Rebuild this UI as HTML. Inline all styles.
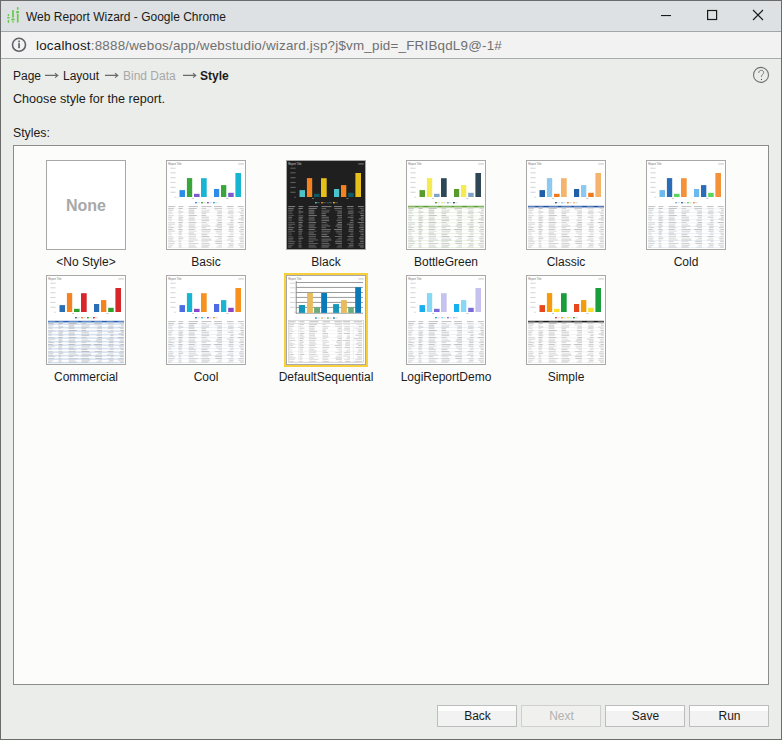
<!DOCTYPE html>
<html><head><meta charset="utf-8"><style>
*{margin:0;padding:0;box-sizing:border-box}
html,body{width:782px;height:740px;overflow:hidden;background:#ebedea;font-family:"Liberation Sans",sans-serif}
.abs{position:absolute}
#win{position:absolute;left:0;top:0;width:782px;height:740px;border:1px solid #6b6b6b;background:#ebedea}
#title{position:absolute;left:1px;top:1px;width:780px;height:30px;background:#dde1e3}
#titleline{position:absolute;left:1px;top:31px;width:780px;height:1px;background:#a3a5a8}
#addr{position:absolute;left:1px;top:32px;width:780px;height:26px;background:#f2f2f2}
#addrline{position:absolute;left:1px;top:58px;width:780px;height:1px;background:#a9aaab}
.ttext{position:absolute;left:26px;top:9.5px;font-size:12px;color:#1a1a1a;white-space:nowrap}
.url{position:absolute;left:36px;top:38px;font-size:13.4px;letter-spacing:0.21px;color:#1a1a1a;white-space:nowrap}
.url span{color:#707070}
.crumb{position:absolute;top:69px;font-size:12px;color:#1b1b1b;white-space:nowrap}
.crumb.dis{color:#a8a8a8}
.txt{position:absolute;font-size:12px;color:#1b1b1b;white-space:nowrap}
#panel{position:absolute;left:13px;top:145px;width:756px;height:540px;background:#fcfdfb;border:1px solid #8c8c8c}
.th{position:absolute;width:80px;height:90px;border:1px solid #a8a8a8;background:#fff}
.th svg{position:absolute;left:-1px;top:-1px}
.th.sel{outline:2px solid #f8cf3c;}
.none{position:absolute;left:0;top:36px;width:78px;text-align:center;font-size:16px;font-weight:bold;color:#a8a8a8}
.lbl{position:absolute;width:140px;text-align:center;font-size:12px;color:#1b1b1b;white-space:nowrap}
.btn{position:absolute;top:705px;width:80px;height:22px;border:1px solid #bdbdbd;background:linear-gradient(#fdfdfd 0,#fdfdfd 5px,#f2f2f2 5px);font-size:12px;color:#1b1b1b;text-align:center;line-height:21px;padding-left:1px}
.btn.dis{color:#b0b0b0;background:#f0f0ef;border-color:#cfcfcf}
</style></head><body>
<div id="win"></div>
<div id="title"></div>
<div id="titleline"></div>
<div id="addr"></div>
<div id="addrline"></div>
<svg class="abs" style="left:0;top:0" width="30" height="30" viewBox="0 0 30 30">
<g fill="#6cc94e">
<rect x="7.7" y="14" width="1.5" height="2.3" rx="0.7"/><rect x="6.9" y="16.9" width="3" height="1.7" rx="0.8"/><rect x="7.7" y="19.8" width="1.5" height="3.1" rx="0.7"/>
<rect x="12.1" y="10" width="1.8" height="7.8" rx="0.8"/><rect x="11.1" y="18.4" width="3.7" height="2.2" rx="1"/><rect x="12.1" y="21.3" width="1.8" height="1.5" rx="0.7"/>
<rect x="16.9" y="6.9" width="1.7" height="3" rx="0.8"/><rect x="16" y="11" width="3.1" height="2.2" rx="1"/><rect x="16.9" y="13.8" width="1.7" height="9" rx="0.8"/>
</g></svg>
<div class="ttext">Web Report Wizard - Google Chrome</div>
<svg class="abs" style="left:640px;top:0" width="142" height="31" viewBox="0 0 142 31">
<rect x="21" y="15" width="10" height="1.1" fill="#1a1a1a"/>
<rect x="67.6" y="10.5" width="9" height="9" fill="none" stroke="#1a1a1a" stroke-width="1.2"/>
<path d="M113 10 L123 20 M123 10 L113 20" stroke="#1a1a1a" stroke-width="1.1"/>
</svg>
<svg class="abs" style="left:10px;top:36px" width="20" height="20" viewBox="0 0 20 20">
<circle cx="9" cy="8.8" r="6.5" fill="none" stroke="#5f6368" stroke-width="1.6"/>
<rect x="8.2" y="7.2" width="1.7" height="5" fill="#5f6368"/><rect x="8.2" y="4.6" width="1.7" height="1.7" fill="#5f6368"/>
</svg>
<div class="url">localhost<span>:8888/webos/app/webstudio/wizard.jsp?j$vm_pid=_FRIBqdL9@-1#</span></div>
<div class="crumb" style="left:13px">Page</div>
<svg class="abs" style="left:0;top:60px" width="240" height="30" viewBox="0 0 240 30"><g fill="none" stroke="#6a6a6a" stroke-width="1.1">
<path d="M45 15.4 H57.5 M55 13.2 L57.8 15.4 L55 17.6"/>
<path d="M105 15.4 H117.5 M115 13.2 L117.8 15.4 L115 17.6"/>
<path d="M183 15.4 H195.5 M193 13.2 L195.8 15.4 L193 17.6"/>
</g></svg>
<div class="crumb" style="left:63px">Layout</div>
<div class="crumb dis" style="left:123px">Bind Data</div>
<div class="crumb" style="left:200px;font-weight:bold">Style</div>
<svg class="abs" style="left:751px;top:65px" width="20" height="20" viewBox="0 0 20 20">
<circle cx="10" cy="9.9" r="7.5" fill="none" stroke="#727272" stroke-width="1.1"/>
<path d="M7.7 8 C7.7 6.2 8.9 5.3 10.3 5.3 C11.8 5.3 12.7 6.3 12.7 7.5 C12.7 9.1 10.7 9.5 10.5 11.3 L10.5 12.0" fill="none" stroke="#6a6a6a" stroke-width="0.9"/>
<circle cx="10.5" cy="14.4" r="0.6" fill="#555"/>
</svg>
<div class="txt" style="left:13px;top:92px;font-size:12.6px">Choose style for the report.</div>
<div class="txt" style="left:13px;top:126px;font-size:12.3px">Styles:</div>
<div id="panel"></div>
<div class="th" style="left:46px;top:160px"><div class="none">None</div></div><div class="lbl" style="left:16px;top:255px">&lt;No Style&gt;</div><div class="th" style="left:166px;top:160px"><svg width="80" height="90" viewBox="0 0 80 90" shape-rendering="auto"><rect x="1" y="1" width="78" height="88" fill="#ffffff"/><text x="2.2" y="4.5" font-size="2.6" font-family="Liberation Sans" fill="#5a5a5a" opacity="0.85">Report Title</text><rect x="72.3" y="3.3" width="5.5" height="1.2" fill="#8c8c8c" opacity="0.45"/><rect x="4.4" y="7.6499999999999995" width="5.2" height="1.1" fill="#8c8c8c" opacity="0.35"/><rect x="4.4" y="12.25" width="5.2" height="1.1" fill="#8c8c8c" opacity="0.35"/><rect x="4.4" y="17.15" width="5.2" height="1.1" fill="#8c8c8c" opacity="0.35"/><rect x="4.4" y="21.95" width="5.2" height="1.1" fill="#8c8c8c" opacity="0.35"/><rect x="4.4" y="26.849999999999998" width="5.2" height="1.1" fill="#8c8c8c" opacity="0.35"/><rect x="4.4" y="31.749999999999996" width="5.2" height="1.1" fill="#8c8c8c" opacity="0.35"/><rect x="8.4" y="36.650000000000006" width="1.2" height="1.1" fill="#8c8c8c" opacity="0.45"/><rect x="13.5" y="30.1" width="5.5" height="6.9" fill="#2b8de8"/><rect x="20.9" y="18.1" width="5.3" height="18.9" fill="#3aa53a"/><rect x="28" y="33.8" width="5.6" height="3.2" fill="#7c5bd0"/><rect x="35" y="18.2" width="5.7" height="18.8" fill="#17b5d2"/><rect x="48" y="29" width="5.2" height="8" fill="#2b8de8"/><rect x="55" y="25.1" width="5.3" height="11.9" fill="#3aa53a"/><rect x="62.2" y="32.8" width="5.5" height="4.2" fill="#7c5bd0"/><rect x="69.4" y="13" width="5.6" height="24" fill="#17b5d2"/><rect x="26" y="38.1" width="2" height="0.9" fill="#8c8c8c" opacity="0.5"/><rect x="60.3" y="38.1" width="2.2" height="0.9" fill="#8c8c8c" opacity="0.5"/><rect x="29" y="42.0" width="1.8" height="1.4" fill="#2b8de8"/><rect x="31.2" y="42.3" width="2.4" height="0.9" fill="#8c8c8c" opacity="0.4"/><rect x="35.1" y="42.0" width="1.8" height="1.4" fill="#3aa53a"/><rect x="37.300000000000004" y="42.3" width="2.4" height="0.9" fill="#8c8c8c" opacity="0.4"/><rect x="41" y="42.0" width="1.8" height="1.4" fill="#7c5bd0"/><rect x="43.2" y="42.3" width="2.4" height="0.9" fill="#8c8c8c" opacity="0.4"/><rect x="47" y="42.0" width="1.8" height="1.4" fill="#17b5d2"/><rect x="49.2" y="42.3" width="2.4" height="0.9" fill="#8c8c8c" opacity="0.4"/><rect x="2.2" y="46.1" width="7" height="1" fill="#8c8c8c" opacity="0.55"/><rect x="12.5" y="46.1" width="4.8" height="1" fill="#8c8c8c" opacity="0.55"/><rect x="22.6" y="46.1" width="9.5" height="1" fill="#8c8c8c" opacity="0.55"/><rect x="35.5" y="46.1" width="10" height="1" fill="#8c8c8c" opacity="0.55"/><rect x="48" y="46.1" width="8" height="1" fill="#8c8c8c" opacity="0.55"/><rect x="61" y="46.1" width="6.5" height="1" fill="#8c8c8c" opacity="0.55"/><rect x="71.8" y="46.1" width="6" height="1" fill="#8c8c8c" opacity="0.55"/><rect x="2" y="48.6" width="76" height="0.6" fill="#f0f0f0"/><rect x="2" y="52.1" width="76" height="0.6" fill="#f0f0f0"/><rect x="2" y="55.6" width="76" height="0.6" fill="#f0f0f0"/><rect x="2" y="59.1" width="76" height="0.6" fill="#f0f0f0"/><rect x="2" y="62.6" width="76" height="0.6" fill="#f0f0f0"/><rect x="2" y="66.1" width="76" height="0.6" fill="#f0f0f0"/><rect x="2" y="69.6" width="76" height="0.6" fill="#f0f0f0"/><rect x="2" y="73.1" width="76" height="0.6" fill="#f0f0f0"/><rect x="2" y="76.6" width="76" height="0.6" fill="#f0f0f0"/><rect x="2" y="80.1" width="76" height="0.6" fill="#f0f0f0"/><rect x="2" y="83.6" width="76" height="0.6" fill="#f0f0f0"/><rect x="2" y="87.1" width="76" height="0.6" fill="#f0f0f0"/><rect x="2.2" y="48" width="5.55" height="0.9" fill="#8c8c8c" opacity="0.47"/><rect x="12.5" y="48" width="4.26" height="0.9" fill="#8c8c8c" opacity="0.53"/><rect x="22.6" y="48" width="8.14" height="0.9" fill="#8c8c8c" opacity="0.53"/><rect x="35.5" y="48" width="4.66" height="0.9" fill="#8c8c8c" opacity="0.39"/><rect x="48.25" y="48" width="7.75" height="0.9" fill="#8c8c8c" opacity="0.44"/><rect x="61.35" y="48" width="6.15" height="0.9" fill="#8c8c8c" opacity="0.28"/><rect x="73.55" y="48" width="4.25" height="0.9" fill="#8c8c8c" opacity="0.32"/><rect x="2.2" y="49.75" width="5.24" height="0.9" fill="#8c8c8c" opacity="0.42"/><rect x="12.5" y="49.75" width="2.19" height="0.9" fill="#8c8c8c" opacity="0.32"/><rect x="22.6" y="49.75" width="5.74" height="0.9" fill="#8c8c8c" opacity="0.52"/><rect x="35.5" y="49.75" width="8.71" height="0.9" fill="#8c8c8c" opacity="0.3"/><rect x="48.89" y="49.75" width="7.11" height="0.9" fill="#8c8c8c" opacity="0.29"/><rect x="62.37" y="49.75" width="5.13" height="0.9" fill="#8c8c8c" opacity="0.29"/><rect x="75.09" y="49.75" width="2.71" height="0.9" fill="#8c8c8c" opacity="0.51"/><rect x="2.2" y="51.5" width="3.96" height="0.9" fill="#8c8c8c" opacity="0.31"/><rect x="12.5" y="51.5" width="4.75" height="0.9" fill="#8c8c8c" opacity="0.51"/><rect x="22.6" y="51.5" width="5.79" height="0.9" fill="#8c8c8c" opacity="0.54"/><rect x="35.5" y="51.5" width="7.47" height="0.9" fill="#8c8c8c" opacity="0.45"/><rect x="51.5" y="51.5" width="4.5" height="0.9" fill="#8c8c8c" opacity="0.53"/><rect x="62.11" y="51.5" width="5.39" height="0.9" fill="#8c8c8c" opacity="0.54"/><rect x="72.15" y="51.5" width="5.65" height="0.9" fill="#8c8c8c" opacity="0.34"/><rect x="2.2" y="53.25" width="4.54" height="0.9" fill="#8c8c8c" opacity="0.3"/><rect x="12.5" y="53.25" width="2.54" height="0.9" fill="#8c8c8c" opacity="0.27"/><rect x="22.6" y="53.25" width="5.85" height="0.9" fill="#8c8c8c" opacity="0.43"/><rect x="35.5" y="53.25" width="4.52" height="0.9" fill="#8c8c8c" opacity="0.45"/><rect x="50.91" y="53.25" width="5.09" height="0.9" fill="#8c8c8c" opacity="0.34"/><rect x="61.65" y="53.25" width="5.85" height="0.9" fill="#8c8c8c" opacity="0.39"/><rect x="74.06" y="53.25" width="3.74" height="0.9" fill="#8c8c8c" opacity="0.39"/><rect x="2.2" y="55" width="5.86" height="0.9" fill="#8c8c8c" opacity="0.27"/><rect x="12.5" y="55" width="4.73" height="0.9" fill="#8c8c8c" opacity="0.26"/><rect x="22.6" y="55" width="8.19" height="0.9" fill="#8c8c8c" opacity="0.5"/><rect x="35.5" y="55" width="4.6" height="0.9" fill="#8c8c8c" opacity="0.49"/><rect x="50.79" y="55" width="5.21" height="0.9" fill="#8c8c8c" opacity="0.42"/><rect x="64.54" y="55" width="2.96" height="0.9" fill="#8c8c8c" opacity="0.26"/><rect x="74.5" y="55" width="3.3" height="0.9" fill="#8c8c8c" opacity="0.54"/><rect x="2.2" y="56.75" width="3.91" height="0.9" fill="#8c8c8c" opacity="0.48"/><rect x="12.5" y="56.75" width="4.61" height="0.9" fill="#8c8c8c" opacity="0.53"/><rect x="22.6" y="56.75" width="6.07" height="0.9" fill="#8c8c8c" opacity="0.36"/><rect x="35.5" y="56.75" width="7.39" height="0.9" fill="#8c8c8c" opacity="0.48"/><rect x="51.92" y="56.75" width="4.08" height="0.9" fill="#8c8c8c" opacity="0.47"/><rect x="61.72" y="56.75" width="5.78" height="0.9" fill="#8c8c8c" opacity="0.51"/><rect x="74.98" y="56.75" width="2.82" height="0.9" fill="#8c8c8c" opacity="0.53"/><rect x="2.2" y="58.5" width="3.5" height="0.9" fill="#8c8c8c" opacity="0.35"/><rect x="12.5" y="58.5" width="3.77" height="0.9" fill="#8c8c8c" opacity="0.53"/><rect x="22.6" y="58.5" width="6.05" height="0.9" fill="#8c8c8c" opacity="0.53"/><rect x="35.5" y="58.5" width="7.5" height="0.9" fill="#8c8c8c" opacity="0.34"/><rect x="51.01" y="58.5" width="4.99" height="0.9" fill="#8c8c8c" opacity="0.3"/><rect x="64.3" y="58.5" width="3.2" height="0.9" fill="#8c8c8c" opacity="0.29"/><rect x="72.83" y="58.5" width="4.97" height="0.9" fill="#8c8c8c" opacity="0.55"/><rect x="2.2" y="60.25" width="3.77" height="0.9" fill="#8c8c8c" opacity="0.26"/><rect x="12.5" y="60.25" width="4.76" height="0.9" fill="#8c8c8c" opacity="0.41"/><rect x="22.6" y="60.25" width="6.4" height="0.9" fill="#8c8c8c" opacity="0.32"/><rect x="35.5" y="60.25" width="7.77" height="0.9" fill="#8c8c8c" opacity="0.5"/><rect x="50.4" y="60.25" width="5.6" height="0.9" fill="#8c8c8c" opacity="0.38"/><rect x="64.38" y="60.25" width="3.12" height="0.9" fill="#8c8c8c" opacity="0.52"/><rect x="74.99" y="60.25" width="2.81" height="0.9" fill="#8c8c8c" opacity="0.4"/><rect x="2.2" y="62" width="6.38" height="0.9" fill="#8c8c8c" opacity="0.29"/><rect x="12.5" y="62" width="4.09" height="0.9" fill="#8c8c8c" opacity="0.53"/><rect x="22.6" y="62" width="7.57" height="0.9" fill="#8c8c8c" opacity="0.49"/><rect x="35.5" y="62" width="5.09" height="0.9" fill="#8c8c8c" opacity="0.38"/><rect x="51.74" y="62" width="4.26" height="0.9" fill="#8c8c8c" opacity="0.5"/><rect x="63.52" y="62" width="3.98" height="0.9" fill="#8c8c8c" opacity="0.39"/><rect x="71.8" y="62" width="6" height="0.9" fill="#8c8c8c" opacity="0.51"/><rect x="2.2" y="63.75" width="6.91" height="0.9" fill="#8c8c8c" opacity="0.39"/><rect x="12.5" y="63.75" width="3.45" height="0.9" fill="#8c8c8c" opacity="0.47"/><rect x="22.6" y="63.75" width="6.78" height="0.9" fill="#8c8c8c" opacity="0.34"/><rect x="35.5" y="63.75" width="6.72" height="0.9" fill="#8c8c8c" opacity="0.29"/><rect x="50.74" y="63.75" width="5.26" height="0.9" fill="#8c8c8c" opacity="0.55"/><rect x="61.14" y="63.75" width="6.36" height="0.9" fill="#8c8c8c" opacity="0.44"/><rect x="73.45" y="63.75" width="4.35" height="0.9" fill="#8c8c8c" opacity="0.35"/><rect x="2.2" y="65.5" width="3.49" height="0.9" fill="#8c8c8c" opacity="0.33"/><rect x="12.5" y="65.5" width="4.22" height="0.9" fill="#8c8c8c" opacity="0.51"/><rect x="22.6" y="65.5" width="6.16" height="0.9" fill="#8c8c8c" opacity="0.49"/><rect x="35.5" y="65.5" width="8.76" height="0.9" fill="#8c8c8c" opacity="0.46"/><rect x="49.48" y="65.5" width="6.52" height="0.9" fill="#8c8c8c" opacity="0.48"/><rect x="63.28" y="65.5" width="4.22" height="0.9" fill="#8c8c8c" opacity="0.46"/><rect x="74.17" y="65.5" width="3.63" height="0.9" fill="#8c8c8c" opacity="0.4"/><rect x="2.2" y="67.25" width="6.11" height="0.9" fill="#8c8c8c" opacity="0.46"/><rect x="12.5" y="67.25" width="2.94" height="0.9" fill="#8c8c8c" opacity="0.53"/><rect x="22.6" y="67.25" width="7.67" height="0.9" fill="#8c8c8c" opacity="0.42"/><rect x="35.5" y="67.25" width="4.56" height="0.9" fill="#8c8c8c" opacity="0.41"/><rect x="51.3" y="67.25" width="4.7" height="0.9" fill="#8c8c8c" opacity="0.45"/><rect x="62.92" y="67.25" width="4.58" height="0.9" fill="#8c8c8c" opacity="0.5"/><rect x="72.96" y="67.25" width="4.84" height="0.9" fill="#8c8c8c" opacity="0.49"/><rect x="2.2" y="69" width="4.49" height="0.9" fill="#8c8c8c" opacity="0.44"/><rect x="12.5" y="69" width="4.11" height="0.9" fill="#8c8c8c" opacity="0.5"/><rect x="22.6" y="69" width="6.1" height="0.9" fill="#8c8c8c" opacity="0.5"/><rect x="35.5" y="69" width="9.28" height="0.9" fill="#8c8c8c" opacity="0.46"/><rect x="48.11" y="69" width="7.89" height="0.9" fill="#8c8c8c" opacity="0.54"/><rect x="62.72" y="69" width="4.78" height="0.9" fill="#8c8c8c" opacity="0.41"/><rect x="74.55" y="69" width="3.25" height="0.9" fill="#8c8c8c" opacity="0.5"/><rect x="2.2" y="70.75" width="6.76" height="0.9" fill="#8c8c8c" opacity="0.39"/><rect x="12.5" y="70.75" width="3.99" height="0.9" fill="#8c8c8c" opacity="0.47"/><rect x="22.6" y="70.75" width="8.09" height="0.9" fill="#8c8c8c" opacity="0.3"/><rect x="35.5" y="70.75" width="8.79" height="0.9" fill="#8c8c8c" opacity="0.42"/><rect x="49.47" y="70.75" width="6.53" height="0.9" fill="#8c8c8c" opacity="0.38"/><rect x="62.35" y="70.75" width="5.15" height="0.9" fill="#8c8c8c" opacity="0.48"/><rect x="73" y="70.75" width="4.8" height="0.9" fill="#8c8c8c" opacity="0.47"/><rect x="2.2" y="72.5" width="3.26" height="0.9" fill="#8c8c8c" opacity="0.3"/><rect x="12.5" y="72.5" width="3.32" height="0.9" fill="#8c8c8c" opacity="0.45"/><rect x="22.6" y="72.5" width="5.42" height="0.9" fill="#8c8c8c" opacity="0.46"/><rect x="35.5" y="72.5" width="7.97" height="0.9" fill="#8c8c8c" opacity="0.26"/><rect x="50.33" y="72.5" width="5.67" height="0.9" fill="#8c8c8c" opacity="0.32"/><rect x="64.38" y="72.5" width="3.12" height="0.9" fill="#8c8c8c" opacity="0.29"/><rect x="74.05" y="72.5" width="3.75" height="0.9" fill="#8c8c8c" opacity="0.3"/><rect x="2.2" y="74.25" width="3.89" height="0.9" fill="#8c8c8c" opacity="0.26"/><rect x="12.5" y="74.25" width="3.39" height="0.9" fill="#8c8c8c" opacity="0.36"/><rect x="22.6" y="74.25" width="7.47" height="0.9" fill="#8c8c8c" opacity="0.43"/><rect x="35.5" y="74.25" width="5.81" height="0.9" fill="#8c8c8c" opacity="0.52"/><rect x="52.4" y="74.25" width="3.6" height="0.9" fill="#8c8c8c" opacity="0.37"/><rect x="63.58" y="74.25" width="3.92" height="0.9" fill="#8c8c8c" opacity="0.37"/><rect x="74.72" y="74.25" width="3.08" height="0.9" fill="#8c8c8c" opacity="0.5"/><rect x="2.2" y="76" width="4.59" height="0.9" fill="#8c8c8c" opacity="0.26"/><rect x="12.5" y="76" width="3.78" height="0.9" fill="#8c8c8c" opacity="0.28"/><rect x="22.6" y="76" width="7.12" height="0.9" fill="#8c8c8c" opacity="0.35"/><rect x="35.5" y="76" width="7.69" height="0.9" fill="#8c8c8c" opacity="0.54"/><rect x="48.8" y="76" width="7.2" height="0.9" fill="#8c8c8c" opacity="0.38"/><rect x="61.67" y="76" width="5.83" height="0.9" fill="#8c8c8c" opacity="0.44"/><rect x="73.88" y="76" width="3.92" height="0.9" fill="#8c8c8c" opacity="0.29"/><rect x="2.2" y="77.75" width="5.44" height="0.9" fill="#8c8c8c" opacity="0.42"/><rect x="12.5" y="77.75" width="4.69" height="0.9" fill="#8c8c8c" opacity="0.54"/><rect x="22.6" y="77.75" width="7.45" height="0.9" fill="#8c8c8c" opacity="0.36"/><rect x="35.5" y="77.75" width="9.41" height="0.9" fill="#8c8c8c" opacity="0.25"/><rect x="51.93" y="77.75" width="4.07" height="0.9" fill="#8c8c8c" opacity="0.42"/><rect x="62.38" y="77.75" width="5.12" height="0.9" fill="#8c8c8c" opacity="0.29"/><rect x="73.02" y="77.75" width="4.78" height="0.9" fill="#8c8c8c" opacity="0.52"/><rect x="2.2" y="79.5" width="4.6" height="0.9" fill="#8c8c8c" opacity="0.38"/><rect x="12.5" y="79.5" width="2.76" height="0.9" fill="#8c8c8c" opacity="0.34"/><rect x="22.6" y="79.5" width="9.36" height="0.9" fill="#8c8c8c" opacity="0.36"/><rect x="35.5" y="79.5" width="9.79" height="0.9" fill="#8c8c8c" opacity="0.52"/><rect x="49.78" y="79.5" width="6.22" height="0.9" fill="#8c8c8c" opacity="0.33"/><rect x="61.07" y="79.5" width="6.43" height="0.9" fill="#8c8c8c" opacity="0.4"/><rect x="73.73" y="79.5" width="4.07" height="0.9" fill="#8c8c8c" opacity="0.35"/><rect x="2.2" y="81.25" width="6.94" height="0.9" fill="#8c8c8c" opacity="0.4"/><rect x="12.5" y="81.25" width="2.92" height="0.9" fill="#8c8c8c" opacity="0.39"/><rect x="22.6" y="81.25" width="4.91" height="0.9" fill="#8c8c8c" opacity="0.44"/><rect x="35.5" y="81.25" width="6.94" height="0.9" fill="#8c8c8c" opacity="0.34"/><rect x="48.96" y="81.25" width="7.04" height="0.9" fill="#8c8c8c" opacity="0.5"/><rect x="64.53" y="81.25" width="2.97" height="0.9" fill="#8c8c8c" opacity="0.41"/><rect x="74.2" y="81.25" width="3.6" height="0.9" fill="#8c8c8c" opacity="0.53"/><rect x="2.2" y="83" width="6.16" height="0.9" fill="#8c8c8c" opacity="0.32"/><rect x="12.5" y="83" width="2.87" height="0.9" fill="#8c8c8c" opacity="0.3"/><rect x="22.6" y="83" width="9.44" height="0.9" fill="#8c8c8c" opacity="0.34"/><rect x="35.5" y="83" width="7.84" height="0.9" fill="#8c8c8c" opacity="0.39"/><rect x="49.56" y="83" width="6.44" height="0.9" fill="#8c8c8c" opacity="0.43"/><rect x="61.92" y="83" width="5.58" height="0.9" fill="#8c8c8c" opacity="0.29"/><rect x="72.59" y="83" width="5.21" height="0.9" fill="#8c8c8c" opacity="0.34"/><rect x="2.2" y="84.75" width="5.2" height="0.9" fill="#8c8c8c" opacity="0.35"/><rect x="12.5" y="84.75" width="2.94" height="0.9" fill="#8c8c8c" opacity="0.41"/><rect x="22.6" y="84.75" width="6.7" height="0.9" fill="#8c8c8c" opacity="0.36"/><rect x="35.5" y="84.75" width="8.6" height="0.9" fill="#8c8c8c" opacity="0.43"/><rect x="52.24" y="84.75" width="3.76" height="0.9" fill="#8c8c8c" opacity="0.33"/><rect x="62.95" y="84.75" width="4.55" height="0.9" fill="#8c8c8c" opacity="0.52"/><rect x="72.17" y="84.75" width="5.63" height="0.9" fill="#8c8c8c" opacity="0.41"/><rect x="2.2" y="86.5" width="3.21" height="0.9" fill="#8c8c8c" opacity="0.48"/><rect x="12.5" y="86.5" width="3.29" height="0.9" fill="#8c8c8c" opacity="0.42"/><rect x="22.6" y="86.5" width="7.98" height="0.9" fill="#8c8c8c" opacity="0.44"/><rect x="35.5" y="86.5" width="7.15" height="0.9" fill="#8c8c8c" opacity="0.52"/><rect x="50.7" y="86.5" width="5.3" height="0.9" fill="#8c8c8c" opacity="0.37"/><rect x="61.53" y="86.5" width="5.97" height="0.9" fill="#8c8c8c" opacity="0.31"/><rect x="74.12" y="86.5" width="3.68" height="0.9" fill="#8c8c8c" opacity="0.5"/></svg></div><div class="lbl" style="left:136px;top:255px">Basic</div><div class="th" style="left:286px;top:160px"><svg width="80" height="90" viewBox="0 0 80 90" shape-rendering="auto"><rect x="1" y="1" width="78" height="88" fill="#1f1f1f"/><text x="2.2" y="4.5" font-size="2.6" font-family="Liberation Sans" fill="#e0e0e0" opacity="0.85">Report Title</text><rect x="72.3" y="3.3" width="5.5" height="1.2" fill="#d8d8d8" opacity="0.45"/><rect x="4.4" y="7.6499999999999995" width="5.2" height="1.1" fill="#d8d8d8" opacity="0.35"/><rect x="4.4" y="12.25" width="5.2" height="1.1" fill="#d8d8d8" opacity="0.35"/><rect x="4.4" y="17.15" width="5.2" height="1.1" fill="#d8d8d8" opacity="0.35"/><rect x="4.4" y="21.95" width="5.2" height="1.1" fill="#d8d8d8" opacity="0.35"/><rect x="4.4" y="26.849999999999998" width="5.2" height="1.1" fill="#d8d8d8" opacity="0.35"/><rect x="4.4" y="31.749999999999996" width="5.2" height="1.1" fill="#d8d8d8" opacity="0.35"/><rect x="8.4" y="36.650000000000006" width="1.2" height="1.1" fill="#d8d8d8" opacity="0.45"/><rect x="13.5" y="30.1" width="5.5" height="6.9" fill="#4ac3ca"/><rect x="20.9" y="18.1" width="5.3" height="18.9" fill="#f58220"/><rect x="28" y="33.8" width="5.6" height="3.2" fill="#0b5b6a"/><rect x="35" y="18.2" width="5.7" height="18.8" fill="#e6c019"/><rect x="48" y="29" width="5.2" height="8" fill="#4ac3ca"/><rect x="55" y="25.1" width="5.3" height="11.9" fill="#f58220"/><rect x="62.2" y="32.8" width="5.5" height="4.2" fill="#0b5b6a"/><rect x="69.4" y="13" width="5.6" height="24" fill="#e6c019"/><rect x="26" y="38.1" width="2" height="0.9" fill="#d8d8d8" opacity="0.5"/><rect x="60.3" y="38.1" width="2.2" height="0.9" fill="#d8d8d8" opacity="0.5"/><rect x="29" y="42.0" width="1.8" height="1.4" fill="#4ac3ca"/><rect x="31.2" y="42.3" width="2.4" height="0.9" fill="#d8d8d8" opacity="0.4"/><rect x="35.1" y="42.0" width="1.8" height="1.4" fill="#f58220"/><rect x="37.300000000000004" y="42.3" width="2.4" height="0.9" fill="#d8d8d8" opacity="0.4"/><rect x="41" y="42.0" width="1.8" height="1.4" fill="#0b5b6a"/><rect x="43.2" y="42.3" width="2.4" height="0.9" fill="#d8d8d8" opacity="0.4"/><rect x="47" y="42.0" width="1.8" height="1.4" fill="#e6c019"/><rect x="49.2" y="42.3" width="2.4" height="0.9" fill="#d8d8d8" opacity="0.4"/><rect x="2.2" y="46.1" width="7" height="1" fill="#d8d8d8" opacity="0.55"/><rect x="12.5" y="46.1" width="4.8" height="1" fill="#d8d8d8" opacity="0.55"/><rect x="22.6" y="46.1" width="9.5" height="1" fill="#d8d8d8" opacity="0.55"/><rect x="35.5" y="46.1" width="10" height="1" fill="#d8d8d8" opacity="0.55"/><rect x="48" y="46.1" width="8" height="1" fill="#d8d8d8" opacity="0.55"/><rect x="61" y="46.1" width="6.5" height="1" fill="#d8d8d8" opacity="0.55"/><rect x="71.8" y="46.1" width="6" height="1" fill="#d8d8d8" opacity="0.55"/><rect x="2" y="48.6" width="76" height="0.6" fill="#262626"/><rect x="2" y="52.1" width="76" height="0.6" fill="#262626"/><rect x="2" y="55.6" width="76" height="0.6" fill="#262626"/><rect x="2" y="59.1" width="76" height="0.6" fill="#262626"/><rect x="2" y="62.6" width="76" height="0.6" fill="#262626"/><rect x="2" y="66.1" width="76" height="0.6" fill="#262626"/><rect x="2" y="69.6" width="76" height="0.6" fill="#262626"/><rect x="2" y="73.1" width="76" height="0.6" fill="#262626"/><rect x="2" y="76.6" width="76" height="0.6" fill="#262626"/><rect x="2" y="80.1" width="76" height="0.6" fill="#262626"/><rect x="2" y="83.6" width="76" height="0.6" fill="#262626"/><rect x="2" y="87.1" width="76" height="0.6" fill="#262626"/><rect x="2.2" y="48" width="5.55" height="0.9" fill="#d8d8d8" opacity="0.47"/><rect x="12.5" y="48" width="4.26" height="0.9" fill="#d8d8d8" opacity="0.53"/><rect x="22.6" y="48" width="8.14" height="0.9" fill="#d8d8d8" opacity="0.53"/><rect x="35.5" y="48" width="4.66" height="0.9" fill="#d8d8d8" opacity="0.39"/><rect x="48.25" y="48" width="7.75" height="0.9" fill="#d8d8d8" opacity="0.44"/><rect x="61.35" y="48" width="6.15" height="0.9" fill="#d8d8d8" opacity="0.28"/><rect x="73.55" y="48" width="4.25" height="0.9" fill="#d8d8d8" opacity="0.32"/><rect x="2.2" y="49.75" width="5.24" height="0.9" fill="#d8d8d8" opacity="0.42"/><rect x="12.5" y="49.75" width="2.19" height="0.9" fill="#d8d8d8" opacity="0.32"/><rect x="22.6" y="49.75" width="5.74" height="0.9" fill="#d8d8d8" opacity="0.52"/><rect x="35.5" y="49.75" width="8.71" height="0.9" fill="#d8d8d8" opacity="0.3"/><rect x="48.89" y="49.75" width="7.11" height="0.9" fill="#d8d8d8" opacity="0.29"/><rect x="62.37" y="49.75" width="5.13" height="0.9" fill="#d8d8d8" opacity="0.29"/><rect x="75.09" y="49.75" width="2.71" height="0.9" fill="#d8d8d8" opacity="0.51"/><rect x="2.2" y="51.5" width="3.96" height="0.9" fill="#d8d8d8" opacity="0.31"/><rect x="12.5" y="51.5" width="4.75" height="0.9" fill="#d8d8d8" opacity="0.51"/><rect x="22.6" y="51.5" width="5.79" height="0.9" fill="#d8d8d8" opacity="0.54"/><rect x="35.5" y="51.5" width="7.47" height="0.9" fill="#d8d8d8" opacity="0.45"/><rect x="51.5" y="51.5" width="4.5" height="0.9" fill="#d8d8d8" opacity="0.53"/><rect x="62.11" y="51.5" width="5.39" height="0.9" fill="#d8d8d8" opacity="0.54"/><rect x="72.15" y="51.5" width="5.65" height="0.9" fill="#d8d8d8" opacity="0.34"/><rect x="2.2" y="53.25" width="4.54" height="0.9" fill="#d8d8d8" opacity="0.3"/><rect x="12.5" y="53.25" width="2.54" height="0.9" fill="#d8d8d8" opacity="0.27"/><rect x="22.6" y="53.25" width="5.85" height="0.9" fill="#d8d8d8" opacity="0.43"/><rect x="35.5" y="53.25" width="4.52" height="0.9" fill="#d8d8d8" opacity="0.45"/><rect x="50.91" y="53.25" width="5.09" height="0.9" fill="#d8d8d8" opacity="0.34"/><rect x="61.65" y="53.25" width="5.85" height="0.9" fill="#d8d8d8" opacity="0.39"/><rect x="74.06" y="53.25" width="3.74" height="0.9" fill="#d8d8d8" opacity="0.39"/><rect x="2.2" y="55" width="5.86" height="0.9" fill="#d8d8d8" opacity="0.27"/><rect x="12.5" y="55" width="4.73" height="0.9" fill="#d8d8d8" opacity="0.26"/><rect x="22.6" y="55" width="8.19" height="0.9" fill="#d8d8d8" opacity="0.5"/><rect x="35.5" y="55" width="4.6" height="0.9" fill="#d8d8d8" opacity="0.49"/><rect x="50.79" y="55" width="5.21" height="0.9" fill="#d8d8d8" opacity="0.42"/><rect x="64.54" y="55" width="2.96" height="0.9" fill="#d8d8d8" opacity="0.26"/><rect x="74.5" y="55" width="3.3" height="0.9" fill="#d8d8d8" opacity="0.54"/><rect x="2.2" y="56.75" width="3.91" height="0.9" fill="#d8d8d8" opacity="0.48"/><rect x="12.5" y="56.75" width="4.61" height="0.9" fill="#d8d8d8" opacity="0.53"/><rect x="22.6" y="56.75" width="6.07" height="0.9" fill="#d8d8d8" opacity="0.36"/><rect x="35.5" y="56.75" width="7.39" height="0.9" fill="#d8d8d8" opacity="0.48"/><rect x="51.92" y="56.75" width="4.08" height="0.9" fill="#d8d8d8" opacity="0.47"/><rect x="61.72" y="56.75" width="5.78" height="0.9" fill="#d8d8d8" opacity="0.51"/><rect x="74.98" y="56.75" width="2.82" height="0.9" fill="#d8d8d8" opacity="0.53"/><rect x="2.2" y="58.5" width="3.5" height="0.9" fill="#d8d8d8" opacity="0.35"/><rect x="12.5" y="58.5" width="3.77" height="0.9" fill="#d8d8d8" opacity="0.53"/><rect x="22.6" y="58.5" width="6.05" height="0.9" fill="#d8d8d8" opacity="0.53"/><rect x="35.5" y="58.5" width="7.5" height="0.9" fill="#d8d8d8" opacity="0.34"/><rect x="51.01" y="58.5" width="4.99" height="0.9" fill="#d8d8d8" opacity="0.3"/><rect x="64.3" y="58.5" width="3.2" height="0.9" fill="#d8d8d8" opacity="0.29"/><rect x="72.83" y="58.5" width="4.97" height="0.9" fill="#d8d8d8" opacity="0.55"/><rect x="2.2" y="60.25" width="3.77" height="0.9" fill="#d8d8d8" opacity="0.26"/><rect x="12.5" y="60.25" width="4.76" height="0.9" fill="#d8d8d8" opacity="0.41"/><rect x="22.6" y="60.25" width="6.4" height="0.9" fill="#d8d8d8" opacity="0.32"/><rect x="35.5" y="60.25" width="7.77" height="0.9" fill="#d8d8d8" opacity="0.5"/><rect x="50.4" y="60.25" width="5.6" height="0.9" fill="#d8d8d8" opacity="0.38"/><rect x="64.38" y="60.25" width="3.12" height="0.9" fill="#d8d8d8" opacity="0.52"/><rect x="74.99" y="60.25" width="2.81" height="0.9" fill="#d8d8d8" opacity="0.4"/><rect x="2.2" y="62" width="6.38" height="0.9" fill="#d8d8d8" opacity="0.29"/><rect x="12.5" y="62" width="4.09" height="0.9" fill="#d8d8d8" opacity="0.53"/><rect x="22.6" y="62" width="7.57" height="0.9" fill="#d8d8d8" opacity="0.49"/><rect x="35.5" y="62" width="5.09" height="0.9" fill="#d8d8d8" opacity="0.38"/><rect x="51.74" y="62" width="4.26" height="0.9" fill="#d8d8d8" opacity="0.5"/><rect x="63.52" y="62" width="3.98" height="0.9" fill="#d8d8d8" opacity="0.39"/><rect x="71.8" y="62" width="6" height="0.9" fill="#d8d8d8" opacity="0.51"/><rect x="2.2" y="63.75" width="6.91" height="0.9" fill="#d8d8d8" opacity="0.39"/><rect x="12.5" y="63.75" width="3.45" height="0.9" fill="#d8d8d8" opacity="0.47"/><rect x="22.6" y="63.75" width="6.78" height="0.9" fill="#d8d8d8" opacity="0.34"/><rect x="35.5" y="63.75" width="6.72" height="0.9" fill="#d8d8d8" opacity="0.29"/><rect x="50.74" y="63.75" width="5.26" height="0.9" fill="#d8d8d8" opacity="0.55"/><rect x="61.14" y="63.75" width="6.36" height="0.9" fill="#d8d8d8" opacity="0.44"/><rect x="73.45" y="63.75" width="4.35" height="0.9" fill="#d8d8d8" opacity="0.35"/><rect x="2.2" y="65.5" width="3.49" height="0.9" fill="#d8d8d8" opacity="0.33"/><rect x="12.5" y="65.5" width="4.22" height="0.9" fill="#d8d8d8" opacity="0.51"/><rect x="22.6" y="65.5" width="6.16" height="0.9" fill="#d8d8d8" opacity="0.49"/><rect x="35.5" y="65.5" width="8.76" height="0.9" fill="#d8d8d8" opacity="0.46"/><rect x="49.48" y="65.5" width="6.52" height="0.9" fill="#d8d8d8" opacity="0.48"/><rect x="63.28" y="65.5" width="4.22" height="0.9" fill="#d8d8d8" opacity="0.46"/><rect x="74.17" y="65.5" width="3.63" height="0.9" fill="#d8d8d8" opacity="0.4"/><rect x="2.2" y="67.25" width="6.11" height="0.9" fill="#d8d8d8" opacity="0.46"/><rect x="12.5" y="67.25" width="2.94" height="0.9" fill="#d8d8d8" opacity="0.53"/><rect x="22.6" y="67.25" width="7.67" height="0.9" fill="#d8d8d8" opacity="0.42"/><rect x="35.5" y="67.25" width="4.56" height="0.9" fill="#d8d8d8" opacity="0.41"/><rect x="51.3" y="67.25" width="4.7" height="0.9" fill="#d8d8d8" opacity="0.45"/><rect x="62.92" y="67.25" width="4.58" height="0.9" fill="#d8d8d8" opacity="0.5"/><rect x="72.96" y="67.25" width="4.84" height="0.9" fill="#d8d8d8" opacity="0.49"/><rect x="2.2" y="69" width="4.49" height="0.9" fill="#d8d8d8" opacity="0.44"/><rect x="12.5" y="69" width="4.11" height="0.9" fill="#d8d8d8" opacity="0.5"/><rect x="22.6" y="69" width="6.1" height="0.9" fill="#d8d8d8" opacity="0.5"/><rect x="35.5" y="69" width="9.28" height="0.9" fill="#d8d8d8" opacity="0.46"/><rect x="48.11" y="69" width="7.89" height="0.9" fill="#d8d8d8" opacity="0.54"/><rect x="62.72" y="69" width="4.78" height="0.9" fill="#d8d8d8" opacity="0.41"/><rect x="74.55" y="69" width="3.25" height="0.9" fill="#d8d8d8" opacity="0.5"/><rect x="2.2" y="70.75" width="6.76" height="0.9" fill="#d8d8d8" opacity="0.39"/><rect x="12.5" y="70.75" width="3.99" height="0.9" fill="#d8d8d8" opacity="0.47"/><rect x="22.6" y="70.75" width="8.09" height="0.9" fill="#d8d8d8" opacity="0.3"/><rect x="35.5" y="70.75" width="8.79" height="0.9" fill="#d8d8d8" opacity="0.42"/><rect x="49.47" y="70.75" width="6.53" height="0.9" fill="#d8d8d8" opacity="0.38"/><rect x="62.35" y="70.75" width="5.15" height="0.9" fill="#d8d8d8" opacity="0.48"/><rect x="73" y="70.75" width="4.8" height="0.9" fill="#d8d8d8" opacity="0.47"/><rect x="2.2" y="72.5" width="3.26" height="0.9" fill="#d8d8d8" opacity="0.3"/><rect x="12.5" y="72.5" width="3.32" height="0.9" fill="#d8d8d8" opacity="0.45"/><rect x="22.6" y="72.5" width="5.42" height="0.9" fill="#d8d8d8" opacity="0.46"/><rect x="35.5" y="72.5" width="7.97" height="0.9" fill="#d8d8d8" opacity="0.26"/><rect x="50.33" y="72.5" width="5.67" height="0.9" fill="#d8d8d8" opacity="0.32"/><rect x="64.38" y="72.5" width="3.12" height="0.9" fill="#d8d8d8" opacity="0.29"/><rect x="74.05" y="72.5" width="3.75" height="0.9" fill="#d8d8d8" opacity="0.3"/><rect x="2.2" y="74.25" width="3.89" height="0.9" fill="#d8d8d8" opacity="0.26"/><rect x="12.5" y="74.25" width="3.39" height="0.9" fill="#d8d8d8" opacity="0.36"/><rect x="22.6" y="74.25" width="7.47" height="0.9" fill="#d8d8d8" opacity="0.43"/><rect x="35.5" y="74.25" width="5.81" height="0.9" fill="#d8d8d8" opacity="0.52"/><rect x="52.4" y="74.25" width="3.6" height="0.9" fill="#d8d8d8" opacity="0.37"/><rect x="63.58" y="74.25" width="3.92" height="0.9" fill="#d8d8d8" opacity="0.37"/><rect x="74.72" y="74.25" width="3.08" height="0.9" fill="#d8d8d8" opacity="0.5"/><rect x="2.2" y="76" width="4.59" height="0.9" fill="#d8d8d8" opacity="0.26"/><rect x="12.5" y="76" width="3.78" height="0.9" fill="#d8d8d8" opacity="0.28"/><rect x="22.6" y="76" width="7.12" height="0.9" fill="#d8d8d8" opacity="0.35"/><rect x="35.5" y="76" width="7.69" height="0.9" fill="#d8d8d8" opacity="0.54"/><rect x="48.8" y="76" width="7.2" height="0.9" fill="#d8d8d8" opacity="0.38"/><rect x="61.67" y="76" width="5.83" height="0.9" fill="#d8d8d8" opacity="0.44"/><rect x="73.88" y="76" width="3.92" height="0.9" fill="#d8d8d8" opacity="0.29"/><rect x="2.2" y="77.75" width="5.44" height="0.9" fill="#d8d8d8" opacity="0.42"/><rect x="12.5" y="77.75" width="4.69" height="0.9" fill="#d8d8d8" opacity="0.54"/><rect x="22.6" y="77.75" width="7.45" height="0.9" fill="#d8d8d8" opacity="0.36"/><rect x="35.5" y="77.75" width="9.41" height="0.9" fill="#d8d8d8" opacity="0.25"/><rect x="51.93" y="77.75" width="4.07" height="0.9" fill="#d8d8d8" opacity="0.42"/><rect x="62.38" y="77.75" width="5.12" height="0.9" fill="#d8d8d8" opacity="0.29"/><rect x="73.02" y="77.75" width="4.78" height="0.9" fill="#d8d8d8" opacity="0.52"/><rect x="2.2" y="79.5" width="4.6" height="0.9" fill="#d8d8d8" opacity="0.38"/><rect x="12.5" y="79.5" width="2.76" height="0.9" fill="#d8d8d8" opacity="0.34"/><rect x="22.6" y="79.5" width="9.36" height="0.9" fill="#d8d8d8" opacity="0.36"/><rect x="35.5" y="79.5" width="9.79" height="0.9" fill="#d8d8d8" opacity="0.52"/><rect x="49.78" y="79.5" width="6.22" height="0.9" fill="#d8d8d8" opacity="0.33"/><rect x="61.07" y="79.5" width="6.43" height="0.9" fill="#d8d8d8" opacity="0.4"/><rect x="73.73" y="79.5" width="4.07" height="0.9" fill="#d8d8d8" opacity="0.35"/><rect x="2.2" y="81.25" width="6.94" height="0.9" fill="#d8d8d8" opacity="0.4"/><rect x="12.5" y="81.25" width="2.92" height="0.9" fill="#d8d8d8" opacity="0.39"/><rect x="22.6" y="81.25" width="4.91" height="0.9" fill="#d8d8d8" opacity="0.44"/><rect x="35.5" y="81.25" width="6.94" height="0.9" fill="#d8d8d8" opacity="0.34"/><rect x="48.96" y="81.25" width="7.04" height="0.9" fill="#d8d8d8" opacity="0.5"/><rect x="64.53" y="81.25" width="2.97" height="0.9" fill="#d8d8d8" opacity="0.41"/><rect x="74.2" y="81.25" width="3.6" height="0.9" fill="#d8d8d8" opacity="0.53"/><rect x="2.2" y="83" width="6.16" height="0.9" fill="#d8d8d8" opacity="0.32"/><rect x="12.5" y="83" width="2.87" height="0.9" fill="#d8d8d8" opacity="0.3"/><rect x="22.6" y="83" width="9.44" height="0.9" fill="#d8d8d8" opacity="0.34"/><rect x="35.5" y="83" width="7.84" height="0.9" fill="#d8d8d8" opacity="0.39"/><rect x="49.56" y="83" width="6.44" height="0.9" fill="#d8d8d8" opacity="0.43"/><rect x="61.92" y="83" width="5.58" height="0.9" fill="#d8d8d8" opacity="0.29"/><rect x="72.59" y="83" width="5.21" height="0.9" fill="#d8d8d8" opacity="0.34"/><rect x="2.2" y="84.75" width="5.2" height="0.9" fill="#d8d8d8" opacity="0.35"/><rect x="12.5" y="84.75" width="2.94" height="0.9" fill="#d8d8d8" opacity="0.41"/><rect x="22.6" y="84.75" width="6.7" height="0.9" fill="#d8d8d8" opacity="0.36"/><rect x="35.5" y="84.75" width="8.6" height="0.9" fill="#d8d8d8" opacity="0.43"/><rect x="52.24" y="84.75" width="3.76" height="0.9" fill="#d8d8d8" opacity="0.33"/><rect x="62.95" y="84.75" width="4.55" height="0.9" fill="#d8d8d8" opacity="0.52"/><rect x="72.17" y="84.75" width="5.63" height="0.9" fill="#d8d8d8" opacity="0.41"/><rect x="2.2" y="86.5" width="3.21" height="0.9" fill="#d8d8d8" opacity="0.48"/><rect x="12.5" y="86.5" width="3.29" height="0.9" fill="#d8d8d8" opacity="0.42"/><rect x="22.6" y="86.5" width="7.98" height="0.9" fill="#d8d8d8" opacity="0.44"/><rect x="35.5" y="86.5" width="7.15" height="0.9" fill="#d8d8d8" opacity="0.52"/><rect x="50.7" y="86.5" width="5.3" height="0.9" fill="#d8d8d8" opacity="0.37"/><rect x="61.53" y="86.5" width="5.97" height="0.9" fill="#d8d8d8" opacity="0.31"/><rect x="74.12" y="86.5" width="3.68" height="0.9" fill="#d8d8d8" opacity="0.5"/></svg></div><div class="lbl" style="left:256px;top:255px">Black</div><div class="th" style="left:406px;top:160px"><svg width="80" height="90" viewBox="0 0 80 90" shape-rendering="auto"><rect x="1" y="1" width="78" height="88" fill="#ffffff"/><text x="2.2" y="4.5" font-size="2.6" font-family="Liberation Sans" fill="#5a5a5a" opacity="0.85">Report Title</text><rect x="72.3" y="3.3" width="5.5" height="1.2" fill="#8c8c8c" opacity="0.45"/><rect x="4.4" y="7.6499999999999995" width="5.2" height="1.1" fill="#8c8c8c" opacity="0.35"/><rect x="4.4" y="12.25" width="5.2" height="1.1" fill="#8c8c8c" opacity="0.35"/><rect x="4.4" y="17.15" width="5.2" height="1.1" fill="#8c8c8c" opacity="0.35"/><rect x="4.4" y="21.95" width="5.2" height="1.1" fill="#8c8c8c" opacity="0.35"/><rect x="4.4" y="26.849999999999998" width="5.2" height="1.1" fill="#8c8c8c" opacity="0.35"/><rect x="4.4" y="31.749999999999996" width="5.2" height="1.1" fill="#8c8c8c" opacity="0.35"/><rect x="8.4" y="36.650000000000006" width="1.2" height="1.1" fill="#8c8c8c" opacity="0.45"/><rect x="13.5" y="30.1" width="5.5" height="6.9" fill="#5a9c2c"/><rect x="20.9" y="18.1" width="5.3" height="18.9" fill="#f5ea50"/><rect x="28" y="33.8" width="5.6" height="3.2" fill="#7fa2c8"/><rect x="35" y="18.2" width="5.7" height="18.8" fill="#2e4757"/><rect x="48" y="29" width="5.2" height="8" fill="#5a9c2c"/><rect x="55" y="25.1" width="5.3" height="11.9" fill="#f5ea50"/><rect x="62.2" y="32.8" width="5.5" height="4.2" fill="#7fa2c8"/><rect x="69.4" y="13" width="5.6" height="24" fill="#2e4757"/><rect x="26" y="38.1" width="2" height="0.9" fill="#8c8c8c" opacity="0.5"/><rect x="60.3" y="38.1" width="2.2" height="0.9" fill="#8c8c8c" opacity="0.5"/><rect x="29" y="42.0" width="1.8" height="1.4" fill="#5a9c2c"/><rect x="31.2" y="42.3" width="2.4" height="0.9" fill="#8c8c8c" opacity="0.4"/><rect x="35.1" y="42.0" width="1.8" height="1.4" fill="#f5ea50"/><rect x="37.300000000000004" y="42.3" width="2.4" height="0.9" fill="#8c8c8c" opacity="0.4"/><rect x="41" y="42.0" width="1.8" height="1.4" fill="#7fa2c8"/><rect x="43.2" y="42.3" width="2.4" height="0.9" fill="#8c8c8c" opacity="0.4"/><rect x="47" y="42.0" width="1.8" height="1.4" fill="#2e4757"/><rect x="49.2" y="42.3" width="2.4" height="0.9" fill="#8c8c8c" opacity="0.4"/><rect x="2" y="45.8" width="76" height="1.6" fill="#5a9c2c"/><rect x="2.2" y="46.1" width="7" height="1" fill="#ffffff" opacity="0.3"/><rect x="12.5" y="46.1" width="4.8" height="1" fill="#ffffff" opacity="0.3"/><rect x="22.6" y="46.1" width="9.5" height="1" fill="#ffffff" opacity="0.3"/><rect x="35.5" y="46.1" width="10" height="1" fill="#ffffff" opacity="0.3"/><rect x="48" y="46.1" width="8" height="1" fill="#ffffff" opacity="0.3"/><rect x="61" y="46.1" width="6.5" height="1" fill="#ffffff" opacity="0.3"/><rect x="71.8" y="46.1" width="6" height="1" fill="#ffffff" opacity="0.3"/><rect x="2" y="48.6" width="76" height="0.6" fill="#dcebd0"/><rect x="2" y="52.1" width="76" height="0.6" fill="#dcebd0"/><rect x="2" y="55.6" width="76" height="0.6" fill="#dcebd0"/><rect x="2" y="59.1" width="76" height="0.6" fill="#dcebd0"/><rect x="2" y="62.6" width="76" height="0.6" fill="#dcebd0"/><rect x="2" y="66.1" width="76" height="0.6" fill="#dcebd0"/><rect x="2" y="69.6" width="76" height="0.6" fill="#dcebd0"/><rect x="2" y="73.1" width="76" height="0.6" fill="#dcebd0"/><rect x="2" y="76.6" width="76" height="0.6" fill="#dcebd0"/><rect x="2" y="80.1" width="76" height="0.6" fill="#dcebd0"/><rect x="2" y="83.6" width="76" height="0.6" fill="#dcebd0"/><rect x="2" y="87.1" width="76" height="0.6" fill="#dcebd0"/><rect x="2.2" y="48" width="5.55" height="0.9" fill="#8c8c8c" opacity="0.47"/><rect x="12.5" y="48" width="4.26" height="0.9" fill="#8c8c8c" opacity="0.53"/><rect x="22.6" y="48" width="8.14" height="0.9" fill="#8c8c8c" opacity="0.53"/><rect x="35.5" y="48" width="4.66" height="0.9" fill="#8c8c8c" opacity="0.39"/><rect x="48.25" y="48" width="7.75" height="0.9" fill="#8c8c8c" opacity="0.44"/><rect x="61.35" y="48" width="6.15" height="0.9" fill="#8c8c8c" opacity="0.28"/><rect x="73.55" y="48" width="4.25" height="0.9" fill="#8c8c8c" opacity="0.32"/><rect x="2.2" y="49.75" width="5.24" height="0.9" fill="#8c8c8c" opacity="0.42"/><rect x="12.5" y="49.75" width="2.19" height="0.9" fill="#8c8c8c" opacity="0.32"/><rect x="22.6" y="49.75" width="5.74" height="0.9" fill="#8c8c8c" opacity="0.52"/><rect x="35.5" y="49.75" width="8.71" height="0.9" fill="#8c8c8c" opacity="0.3"/><rect x="48.89" y="49.75" width="7.11" height="0.9" fill="#8c8c8c" opacity="0.29"/><rect x="62.37" y="49.75" width="5.13" height="0.9" fill="#8c8c8c" opacity="0.29"/><rect x="75.09" y="49.75" width="2.71" height="0.9" fill="#8c8c8c" opacity="0.51"/><rect x="2.2" y="51.5" width="3.96" height="0.9" fill="#8c8c8c" opacity="0.31"/><rect x="12.5" y="51.5" width="4.75" height="0.9" fill="#8c8c8c" opacity="0.51"/><rect x="22.6" y="51.5" width="5.79" height="0.9" fill="#8c8c8c" opacity="0.54"/><rect x="35.5" y="51.5" width="7.47" height="0.9" fill="#8c8c8c" opacity="0.45"/><rect x="51.5" y="51.5" width="4.5" height="0.9" fill="#8c8c8c" opacity="0.53"/><rect x="62.11" y="51.5" width="5.39" height="0.9" fill="#8c8c8c" opacity="0.54"/><rect x="72.15" y="51.5" width="5.65" height="0.9" fill="#8c8c8c" opacity="0.34"/><rect x="2.2" y="53.25" width="4.54" height="0.9" fill="#8c8c8c" opacity="0.3"/><rect x="12.5" y="53.25" width="2.54" height="0.9" fill="#8c8c8c" opacity="0.27"/><rect x="22.6" y="53.25" width="5.85" height="0.9" fill="#8c8c8c" opacity="0.43"/><rect x="35.5" y="53.25" width="4.52" height="0.9" fill="#8c8c8c" opacity="0.45"/><rect x="50.91" y="53.25" width="5.09" height="0.9" fill="#8c8c8c" opacity="0.34"/><rect x="61.65" y="53.25" width="5.85" height="0.9" fill="#8c8c8c" opacity="0.39"/><rect x="74.06" y="53.25" width="3.74" height="0.9" fill="#8c8c8c" opacity="0.39"/><rect x="2.2" y="55" width="5.86" height="0.9" fill="#8c8c8c" opacity="0.27"/><rect x="12.5" y="55" width="4.73" height="0.9" fill="#8c8c8c" opacity="0.26"/><rect x="22.6" y="55" width="8.19" height="0.9" fill="#8c8c8c" opacity="0.5"/><rect x="35.5" y="55" width="4.6" height="0.9" fill="#8c8c8c" opacity="0.49"/><rect x="50.79" y="55" width="5.21" height="0.9" fill="#8c8c8c" opacity="0.42"/><rect x="64.54" y="55" width="2.96" height="0.9" fill="#8c8c8c" opacity="0.26"/><rect x="74.5" y="55" width="3.3" height="0.9" fill="#8c8c8c" opacity="0.54"/><rect x="2.2" y="56.75" width="3.91" height="0.9" fill="#8c8c8c" opacity="0.48"/><rect x="12.5" y="56.75" width="4.61" height="0.9" fill="#8c8c8c" opacity="0.53"/><rect x="22.6" y="56.75" width="6.07" height="0.9" fill="#8c8c8c" opacity="0.36"/><rect x="35.5" y="56.75" width="7.39" height="0.9" fill="#8c8c8c" opacity="0.48"/><rect x="51.92" y="56.75" width="4.08" height="0.9" fill="#8c8c8c" opacity="0.47"/><rect x="61.72" y="56.75" width="5.78" height="0.9" fill="#8c8c8c" opacity="0.51"/><rect x="74.98" y="56.75" width="2.82" height="0.9" fill="#8c8c8c" opacity="0.53"/><rect x="2.2" y="58.5" width="3.5" height="0.9" fill="#8c8c8c" opacity="0.35"/><rect x="12.5" y="58.5" width="3.77" height="0.9" fill="#8c8c8c" opacity="0.53"/><rect x="22.6" y="58.5" width="6.05" height="0.9" fill="#8c8c8c" opacity="0.53"/><rect x="35.5" y="58.5" width="7.5" height="0.9" fill="#8c8c8c" opacity="0.34"/><rect x="51.01" y="58.5" width="4.99" height="0.9" fill="#8c8c8c" opacity="0.3"/><rect x="64.3" y="58.5" width="3.2" height="0.9" fill="#8c8c8c" opacity="0.29"/><rect x="72.83" y="58.5" width="4.97" height="0.9" fill="#8c8c8c" opacity="0.55"/><rect x="2.2" y="60.25" width="3.77" height="0.9" fill="#8c8c8c" opacity="0.26"/><rect x="12.5" y="60.25" width="4.76" height="0.9" fill="#8c8c8c" opacity="0.41"/><rect x="22.6" y="60.25" width="6.4" height="0.9" fill="#8c8c8c" opacity="0.32"/><rect x="35.5" y="60.25" width="7.77" height="0.9" fill="#8c8c8c" opacity="0.5"/><rect x="50.4" y="60.25" width="5.6" height="0.9" fill="#8c8c8c" opacity="0.38"/><rect x="64.38" y="60.25" width="3.12" height="0.9" fill="#8c8c8c" opacity="0.52"/><rect x="74.99" y="60.25" width="2.81" height="0.9" fill="#8c8c8c" opacity="0.4"/><rect x="2.2" y="62" width="6.38" height="0.9" fill="#8c8c8c" opacity="0.29"/><rect x="12.5" y="62" width="4.09" height="0.9" fill="#8c8c8c" opacity="0.53"/><rect x="22.6" y="62" width="7.57" height="0.9" fill="#8c8c8c" opacity="0.49"/><rect x="35.5" y="62" width="5.09" height="0.9" fill="#8c8c8c" opacity="0.38"/><rect x="51.74" y="62" width="4.26" height="0.9" fill="#8c8c8c" opacity="0.5"/><rect x="63.52" y="62" width="3.98" height="0.9" fill="#8c8c8c" opacity="0.39"/><rect x="71.8" y="62" width="6" height="0.9" fill="#8c8c8c" opacity="0.51"/><rect x="2.2" y="63.75" width="6.91" height="0.9" fill="#8c8c8c" opacity="0.39"/><rect x="12.5" y="63.75" width="3.45" height="0.9" fill="#8c8c8c" opacity="0.47"/><rect x="22.6" y="63.75" width="6.78" height="0.9" fill="#8c8c8c" opacity="0.34"/><rect x="35.5" y="63.75" width="6.72" height="0.9" fill="#8c8c8c" opacity="0.29"/><rect x="50.74" y="63.75" width="5.26" height="0.9" fill="#8c8c8c" opacity="0.55"/><rect x="61.14" y="63.75" width="6.36" height="0.9" fill="#8c8c8c" opacity="0.44"/><rect x="73.45" y="63.75" width="4.35" height="0.9" fill="#8c8c8c" opacity="0.35"/><rect x="2.2" y="65.5" width="3.49" height="0.9" fill="#8c8c8c" opacity="0.33"/><rect x="12.5" y="65.5" width="4.22" height="0.9" fill="#8c8c8c" opacity="0.51"/><rect x="22.6" y="65.5" width="6.16" height="0.9" fill="#8c8c8c" opacity="0.49"/><rect x="35.5" y="65.5" width="8.76" height="0.9" fill="#8c8c8c" opacity="0.46"/><rect x="49.48" y="65.5" width="6.52" height="0.9" fill="#8c8c8c" opacity="0.48"/><rect x="63.28" y="65.5" width="4.22" height="0.9" fill="#8c8c8c" opacity="0.46"/><rect x="74.17" y="65.5" width="3.63" height="0.9" fill="#8c8c8c" opacity="0.4"/><rect x="2.2" y="67.25" width="6.11" height="0.9" fill="#8c8c8c" opacity="0.46"/><rect x="12.5" y="67.25" width="2.94" height="0.9" fill="#8c8c8c" opacity="0.53"/><rect x="22.6" y="67.25" width="7.67" height="0.9" fill="#8c8c8c" opacity="0.42"/><rect x="35.5" y="67.25" width="4.56" height="0.9" fill="#8c8c8c" opacity="0.41"/><rect x="51.3" y="67.25" width="4.7" height="0.9" fill="#8c8c8c" opacity="0.45"/><rect x="62.92" y="67.25" width="4.58" height="0.9" fill="#8c8c8c" opacity="0.5"/><rect x="72.96" y="67.25" width="4.84" height="0.9" fill="#8c8c8c" opacity="0.49"/><rect x="2.2" y="69" width="4.49" height="0.9" fill="#8c8c8c" opacity="0.44"/><rect x="12.5" y="69" width="4.11" height="0.9" fill="#8c8c8c" opacity="0.5"/><rect x="22.6" y="69" width="6.1" height="0.9" fill="#8c8c8c" opacity="0.5"/><rect x="35.5" y="69" width="9.28" height="0.9" fill="#8c8c8c" opacity="0.46"/><rect x="48.11" y="69" width="7.89" height="0.9" fill="#8c8c8c" opacity="0.54"/><rect x="62.72" y="69" width="4.78" height="0.9" fill="#8c8c8c" opacity="0.41"/><rect x="74.55" y="69" width="3.25" height="0.9" fill="#8c8c8c" opacity="0.5"/><rect x="2.2" y="70.75" width="6.76" height="0.9" fill="#8c8c8c" opacity="0.39"/><rect x="12.5" y="70.75" width="3.99" height="0.9" fill="#8c8c8c" opacity="0.47"/><rect x="22.6" y="70.75" width="8.09" height="0.9" fill="#8c8c8c" opacity="0.3"/><rect x="35.5" y="70.75" width="8.79" height="0.9" fill="#8c8c8c" opacity="0.42"/><rect x="49.47" y="70.75" width="6.53" height="0.9" fill="#8c8c8c" opacity="0.38"/><rect x="62.35" y="70.75" width="5.15" height="0.9" fill="#8c8c8c" opacity="0.48"/><rect x="73" y="70.75" width="4.8" height="0.9" fill="#8c8c8c" opacity="0.47"/><rect x="2.2" y="72.5" width="3.26" height="0.9" fill="#8c8c8c" opacity="0.3"/><rect x="12.5" y="72.5" width="3.32" height="0.9" fill="#8c8c8c" opacity="0.45"/><rect x="22.6" y="72.5" width="5.42" height="0.9" fill="#8c8c8c" opacity="0.46"/><rect x="35.5" y="72.5" width="7.97" height="0.9" fill="#8c8c8c" opacity="0.26"/><rect x="50.33" y="72.5" width="5.67" height="0.9" fill="#8c8c8c" opacity="0.32"/><rect x="64.38" y="72.5" width="3.12" height="0.9" fill="#8c8c8c" opacity="0.29"/><rect x="74.05" y="72.5" width="3.75" height="0.9" fill="#8c8c8c" opacity="0.3"/><rect x="2.2" y="74.25" width="3.89" height="0.9" fill="#8c8c8c" opacity="0.26"/><rect x="12.5" y="74.25" width="3.39" height="0.9" fill="#8c8c8c" opacity="0.36"/><rect x="22.6" y="74.25" width="7.47" height="0.9" fill="#8c8c8c" opacity="0.43"/><rect x="35.5" y="74.25" width="5.81" height="0.9" fill="#8c8c8c" opacity="0.52"/><rect x="52.4" y="74.25" width="3.6" height="0.9" fill="#8c8c8c" opacity="0.37"/><rect x="63.58" y="74.25" width="3.92" height="0.9" fill="#8c8c8c" opacity="0.37"/><rect x="74.72" y="74.25" width="3.08" height="0.9" fill="#8c8c8c" opacity="0.5"/><rect x="2.2" y="76" width="4.59" height="0.9" fill="#8c8c8c" opacity="0.26"/><rect x="12.5" y="76" width="3.78" height="0.9" fill="#8c8c8c" opacity="0.28"/><rect x="22.6" y="76" width="7.12" height="0.9" fill="#8c8c8c" opacity="0.35"/><rect x="35.5" y="76" width="7.69" height="0.9" fill="#8c8c8c" opacity="0.54"/><rect x="48.8" y="76" width="7.2" height="0.9" fill="#8c8c8c" opacity="0.38"/><rect x="61.67" y="76" width="5.83" height="0.9" fill="#8c8c8c" opacity="0.44"/><rect x="73.88" y="76" width="3.92" height="0.9" fill="#8c8c8c" opacity="0.29"/><rect x="2.2" y="77.75" width="5.44" height="0.9" fill="#8c8c8c" opacity="0.42"/><rect x="12.5" y="77.75" width="4.69" height="0.9" fill="#8c8c8c" opacity="0.54"/><rect x="22.6" y="77.75" width="7.45" height="0.9" fill="#8c8c8c" opacity="0.36"/><rect x="35.5" y="77.75" width="9.41" height="0.9" fill="#8c8c8c" opacity="0.25"/><rect x="51.93" y="77.75" width="4.07" height="0.9" fill="#8c8c8c" opacity="0.42"/><rect x="62.38" y="77.75" width="5.12" height="0.9" fill="#8c8c8c" opacity="0.29"/><rect x="73.02" y="77.75" width="4.78" height="0.9" fill="#8c8c8c" opacity="0.52"/><rect x="2.2" y="79.5" width="4.6" height="0.9" fill="#8c8c8c" opacity="0.38"/><rect x="12.5" y="79.5" width="2.76" height="0.9" fill="#8c8c8c" opacity="0.34"/><rect x="22.6" y="79.5" width="9.36" height="0.9" fill="#8c8c8c" opacity="0.36"/><rect x="35.5" y="79.5" width="9.79" height="0.9" fill="#8c8c8c" opacity="0.52"/><rect x="49.78" y="79.5" width="6.22" height="0.9" fill="#8c8c8c" opacity="0.33"/><rect x="61.07" y="79.5" width="6.43" height="0.9" fill="#8c8c8c" opacity="0.4"/><rect x="73.73" y="79.5" width="4.07" height="0.9" fill="#8c8c8c" opacity="0.35"/><rect x="2.2" y="81.25" width="6.94" height="0.9" fill="#8c8c8c" opacity="0.4"/><rect x="12.5" y="81.25" width="2.92" height="0.9" fill="#8c8c8c" opacity="0.39"/><rect x="22.6" y="81.25" width="4.91" height="0.9" fill="#8c8c8c" opacity="0.44"/><rect x="35.5" y="81.25" width="6.94" height="0.9" fill="#8c8c8c" opacity="0.34"/><rect x="48.96" y="81.25" width="7.04" height="0.9" fill="#8c8c8c" opacity="0.5"/><rect x="64.53" y="81.25" width="2.97" height="0.9" fill="#8c8c8c" opacity="0.41"/><rect x="74.2" y="81.25" width="3.6" height="0.9" fill="#8c8c8c" opacity="0.53"/><rect x="2.2" y="83" width="6.16" height="0.9" fill="#8c8c8c" opacity="0.32"/><rect x="12.5" y="83" width="2.87" height="0.9" fill="#8c8c8c" opacity="0.3"/><rect x="22.6" y="83" width="9.44" height="0.9" fill="#8c8c8c" opacity="0.34"/><rect x="35.5" y="83" width="7.84" height="0.9" fill="#8c8c8c" opacity="0.39"/><rect x="49.56" y="83" width="6.44" height="0.9" fill="#8c8c8c" opacity="0.43"/><rect x="61.92" y="83" width="5.58" height="0.9" fill="#8c8c8c" opacity="0.29"/><rect x="72.59" y="83" width="5.21" height="0.9" fill="#8c8c8c" opacity="0.34"/><rect x="2.2" y="84.75" width="5.2" height="0.9" fill="#8c8c8c" opacity="0.35"/><rect x="12.5" y="84.75" width="2.94" height="0.9" fill="#8c8c8c" opacity="0.41"/><rect x="22.6" y="84.75" width="6.7" height="0.9" fill="#8c8c8c" opacity="0.36"/><rect x="35.5" y="84.75" width="8.6" height="0.9" fill="#8c8c8c" opacity="0.43"/><rect x="52.24" y="84.75" width="3.76" height="0.9" fill="#8c8c8c" opacity="0.33"/><rect x="62.95" y="84.75" width="4.55" height="0.9" fill="#8c8c8c" opacity="0.52"/><rect x="72.17" y="84.75" width="5.63" height="0.9" fill="#8c8c8c" opacity="0.41"/><rect x="2.2" y="86.5" width="3.21" height="0.9" fill="#8c8c8c" opacity="0.48"/><rect x="12.5" y="86.5" width="3.29" height="0.9" fill="#8c8c8c" opacity="0.42"/><rect x="22.6" y="86.5" width="7.98" height="0.9" fill="#8c8c8c" opacity="0.44"/><rect x="35.5" y="86.5" width="7.15" height="0.9" fill="#8c8c8c" opacity="0.52"/><rect x="50.7" y="86.5" width="5.3" height="0.9" fill="#8c8c8c" opacity="0.37"/><rect x="61.53" y="86.5" width="5.97" height="0.9" fill="#8c8c8c" opacity="0.31"/><rect x="74.12" y="86.5" width="3.68" height="0.9" fill="#8c8c8c" opacity="0.5"/></svg></div><div class="lbl" style="left:376px;top:255px">BottleGreen</div><div class="th" style="left:526px;top:160px"><svg width="80" height="90" viewBox="0 0 80 90" shape-rendering="auto"><rect x="1" y="1" width="78" height="88" fill="#ffffff"/><text x="2.2" y="4.5" font-size="2.6" font-family="Liberation Sans" fill="#5a5a5a" opacity="0.85">Report Title</text><rect x="72.3" y="3.3" width="5.5" height="1.2" fill="#8c8c8c" opacity="0.45"/><rect x="4.4" y="7.6499999999999995" width="5.2" height="1.1" fill="#8c8c8c" opacity="0.35"/><rect x="4.4" y="12.25" width="5.2" height="1.1" fill="#8c8c8c" opacity="0.35"/><rect x="4.4" y="17.15" width="5.2" height="1.1" fill="#8c8c8c" opacity="0.35"/><rect x="4.4" y="21.95" width="5.2" height="1.1" fill="#8c8c8c" opacity="0.35"/><rect x="4.4" y="26.849999999999998" width="5.2" height="1.1" fill="#8c8c8c" opacity="0.35"/><rect x="4.4" y="31.749999999999996" width="5.2" height="1.1" fill="#8c8c8c" opacity="0.35"/><rect x="8.4" y="36.650000000000006" width="1.2" height="1.1" fill="#8c8c8c" opacity="0.45"/><rect x="13.5" y="30.1" width="5.5" height="6.9" fill="#1f5ea8"/><rect x="20.9" y="18.1" width="5.3" height="18.9" fill="#8dc8f0"/><rect x="28" y="33.8" width="5.6" height="3.2" fill="#f07a18"/><rect x="35" y="18.2" width="5.7" height="18.8" fill="#f4b46c"/><rect x="48" y="29" width="5.2" height="8" fill="#1f5ea8"/><rect x="55" y="25.1" width="5.3" height="11.9" fill="#8dc8f0"/><rect x="62.2" y="32.8" width="5.5" height="4.2" fill="#f07a18"/><rect x="69.4" y="13" width="5.6" height="24" fill="#f4b46c"/><rect x="26" y="38.1" width="2" height="0.9" fill="#8c8c8c" opacity="0.5"/><rect x="60.3" y="38.1" width="2.2" height="0.9" fill="#8c8c8c" opacity="0.5"/><rect x="29" y="42.0" width="1.8" height="1.4" fill="#1f5ea8"/><rect x="31.2" y="42.3" width="2.4" height="0.9" fill="#8c8c8c" opacity="0.4"/><rect x="35.1" y="42.0" width="1.8" height="1.4" fill="#8dc8f0"/><rect x="37.300000000000004" y="42.3" width="2.4" height="0.9" fill="#8c8c8c" opacity="0.4"/><rect x="41" y="42.0" width="1.8" height="1.4" fill="#f07a18"/><rect x="43.2" y="42.3" width="2.4" height="0.9" fill="#8c8c8c" opacity="0.4"/><rect x="47" y="42.0" width="1.8" height="1.4" fill="#f4b46c"/><rect x="49.2" y="42.3" width="2.4" height="0.9" fill="#8c8c8c" opacity="0.4"/><rect x="2" y="45.8" width="76" height="1.6" fill="#1f4f9f"/><rect x="2.2" y="46.1" width="7" height="1" fill="#ffffff" opacity="0.3"/><rect x="12.5" y="46.1" width="4.8" height="1" fill="#ffffff" opacity="0.3"/><rect x="22.6" y="46.1" width="9.5" height="1" fill="#ffffff" opacity="0.3"/><rect x="35.5" y="46.1" width="10" height="1" fill="#ffffff" opacity="0.3"/><rect x="48" y="46.1" width="8" height="1" fill="#ffffff" opacity="0.3"/><rect x="61" y="46.1" width="6.5" height="1" fill="#ffffff" opacity="0.3"/><rect x="71.8" y="46.1" width="6" height="1" fill="#ffffff" opacity="0.3"/><rect x="2" y="48.6" width="76" height="0.6" fill="#ececec"/><rect x="2" y="52.1" width="76" height="0.6" fill="#ececec"/><rect x="2" y="55.6" width="76" height="0.6" fill="#ececec"/><rect x="2" y="59.1" width="76" height="0.6" fill="#ececec"/><rect x="2" y="62.6" width="76" height="0.6" fill="#ececec"/><rect x="2" y="66.1" width="76" height="0.6" fill="#ececec"/><rect x="2" y="69.6" width="76" height="0.6" fill="#ececec"/><rect x="2" y="73.1" width="76" height="0.6" fill="#ececec"/><rect x="2" y="76.6" width="76" height="0.6" fill="#ececec"/><rect x="2" y="80.1" width="76" height="0.6" fill="#ececec"/><rect x="2" y="83.6" width="76" height="0.6" fill="#ececec"/><rect x="2" y="87.1" width="76" height="0.6" fill="#ececec"/><rect x="2.2" y="48" width="5.55" height="0.9" fill="#8c8c8c" opacity="0.47"/><rect x="12.5" y="48" width="4.26" height="0.9" fill="#8c8c8c" opacity="0.53"/><rect x="22.6" y="48" width="8.14" height="0.9" fill="#8c8c8c" opacity="0.53"/><rect x="35.5" y="48" width="4.66" height="0.9" fill="#8c8c8c" opacity="0.39"/><rect x="48.25" y="48" width="7.75" height="0.9" fill="#8c8c8c" opacity="0.44"/><rect x="61.35" y="48" width="6.15" height="0.9" fill="#8c8c8c" opacity="0.28"/><rect x="73.55" y="48" width="4.25" height="0.9" fill="#8c8c8c" opacity="0.32"/><rect x="2.2" y="49.75" width="5.24" height="0.9" fill="#8c8c8c" opacity="0.42"/><rect x="12.5" y="49.75" width="2.19" height="0.9" fill="#8c8c8c" opacity="0.32"/><rect x="22.6" y="49.75" width="5.74" height="0.9" fill="#8c8c8c" opacity="0.52"/><rect x="35.5" y="49.75" width="8.71" height="0.9" fill="#8c8c8c" opacity="0.3"/><rect x="48.89" y="49.75" width="7.11" height="0.9" fill="#8c8c8c" opacity="0.29"/><rect x="62.37" y="49.75" width="5.13" height="0.9" fill="#8c8c8c" opacity="0.29"/><rect x="75.09" y="49.75" width="2.71" height="0.9" fill="#8c8c8c" opacity="0.51"/><rect x="2.2" y="51.5" width="3.96" height="0.9" fill="#8c8c8c" opacity="0.31"/><rect x="12.5" y="51.5" width="4.75" height="0.9" fill="#8c8c8c" opacity="0.51"/><rect x="22.6" y="51.5" width="5.79" height="0.9" fill="#8c8c8c" opacity="0.54"/><rect x="35.5" y="51.5" width="7.47" height="0.9" fill="#8c8c8c" opacity="0.45"/><rect x="51.5" y="51.5" width="4.5" height="0.9" fill="#8c8c8c" opacity="0.53"/><rect x="62.11" y="51.5" width="5.39" height="0.9" fill="#8c8c8c" opacity="0.54"/><rect x="72.15" y="51.5" width="5.65" height="0.9" fill="#8c8c8c" opacity="0.34"/><rect x="2.2" y="53.25" width="4.54" height="0.9" fill="#8c8c8c" opacity="0.3"/><rect x="12.5" y="53.25" width="2.54" height="0.9" fill="#8c8c8c" opacity="0.27"/><rect x="22.6" y="53.25" width="5.85" height="0.9" fill="#8c8c8c" opacity="0.43"/><rect x="35.5" y="53.25" width="4.52" height="0.9" fill="#8c8c8c" opacity="0.45"/><rect x="50.91" y="53.25" width="5.09" height="0.9" fill="#8c8c8c" opacity="0.34"/><rect x="61.65" y="53.25" width="5.85" height="0.9" fill="#8c8c8c" opacity="0.39"/><rect x="74.06" y="53.25" width="3.74" height="0.9" fill="#8c8c8c" opacity="0.39"/><rect x="2.2" y="55" width="5.86" height="0.9" fill="#8c8c8c" opacity="0.27"/><rect x="12.5" y="55" width="4.73" height="0.9" fill="#8c8c8c" opacity="0.26"/><rect x="22.6" y="55" width="8.19" height="0.9" fill="#8c8c8c" opacity="0.5"/><rect x="35.5" y="55" width="4.6" height="0.9" fill="#8c8c8c" opacity="0.49"/><rect x="50.79" y="55" width="5.21" height="0.9" fill="#8c8c8c" opacity="0.42"/><rect x="64.54" y="55" width="2.96" height="0.9" fill="#8c8c8c" opacity="0.26"/><rect x="74.5" y="55" width="3.3" height="0.9" fill="#8c8c8c" opacity="0.54"/><rect x="2.2" y="56.75" width="3.91" height="0.9" fill="#8c8c8c" opacity="0.48"/><rect x="12.5" y="56.75" width="4.61" height="0.9" fill="#8c8c8c" opacity="0.53"/><rect x="22.6" y="56.75" width="6.07" height="0.9" fill="#8c8c8c" opacity="0.36"/><rect x="35.5" y="56.75" width="7.39" height="0.9" fill="#8c8c8c" opacity="0.48"/><rect x="51.92" y="56.75" width="4.08" height="0.9" fill="#8c8c8c" opacity="0.47"/><rect x="61.72" y="56.75" width="5.78" height="0.9" fill="#8c8c8c" opacity="0.51"/><rect x="74.98" y="56.75" width="2.82" height="0.9" fill="#8c8c8c" opacity="0.53"/><rect x="2.2" y="58.5" width="3.5" height="0.9" fill="#8c8c8c" opacity="0.35"/><rect x="12.5" y="58.5" width="3.77" height="0.9" fill="#8c8c8c" opacity="0.53"/><rect x="22.6" y="58.5" width="6.05" height="0.9" fill="#8c8c8c" opacity="0.53"/><rect x="35.5" y="58.5" width="7.5" height="0.9" fill="#8c8c8c" opacity="0.34"/><rect x="51.01" y="58.5" width="4.99" height="0.9" fill="#8c8c8c" opacity="0.3"/><rect x="64.3" y="58.5" width="3.2" height="0.9" fill="#8c8c8c" opacity="0.29"/><rect x="72.83" y="58.5" width="4.97" height="0.9" fill="#8c8c8c" opacity="0.55"/><rect x="2.2" y="60.25" width="3.77" height="0.9" fill="#8c8c8c" opacity="0.26"/><rect x="12.5" y="60.25" width="4.76" height="0.9" fill="#8c8c8c" opacity="0.41"/><rect x="22.6" y="60.25" width="6.4" height="0.9" fill="#8c8c8c" opacity="0.32"/><rect x="35.5" y="60.25" width="7.77" height="0.9" fill="#8c8c8c" opacity="0.5"/><rect x="50.4" y="60.25" width="5.6" height="0.9" fill="#8c8c8c" opacity="0.38"/><rect x="64.38" y="60.25" width="3.12" height="0.9" fill="#8c8c8c" opacity="0.52"/><rect x="74.99" y="60.25" width="2.81" height="0.9" fill="#8c8c8c" opacity="0.4"/><rect x="2.2" y="62" width="6.38" height="0.9" fill="#8c8c8c" opacity="0.29"/><rect x="12.5" y="62" width="4.09" height="0.9" fill="#8c8c8c" opacity="0.53"/><rect x="22.6" y="62" width="7.57" height="0.9" fill="#8c8c8c" opacity="0.49"/><rect x="35.5" y="62" width="5.09" height="0.9" fill="#8c8c8c" opacity="0.38"/><rect x="51.74" y="62" width="4.26" height="0.9" fill="#8c8c8c" opacity="0.5"/><rect x="63.52" y="62" width="3.98" height="0.9" fill="#8c8c8c" opacity="0.39"/><rect x="71.8" y="62" width="6" height="0.9" fill="#8c8c8c" opacity="0.51"/><rect x="2.2" y="63.75" width="6.91" height="0.9" fill="#8c8c8c" opacity="0.39"/><rect x="12.5" y="63.75" width="3.45" height="0.9" fill="#8c8c8c" opacity="0.47"/><rect x="22.6" y="63.75" width="6.78" height="0.9" fill="#8c8c8c" opacity="0.34"/><rect x="35.5" y="63.75" width="6.72" height="0.9" fill="#8c8c8c" opacity="0.29"/><rect x="50.74" y="63.75" width="5.26" height="0.9" fill="#8c8c8c" opacity="0.55"/><rect x="61.14" y="63.75" width="6.36" height="0.9" fill="#8c8c8c" opacity="0.44"/><rect x="73.45" y="63.75" width="4.35" height="0.9" fill="#8c8c8c" opacity="0.35"/><rect x="2.2" y="65.5" width="3.49" height="0.9" fill="#8c8c8c" opacity="0.33"/><rect x="12.5" y="65.5" width="4.22" height="0.9" fill="#8c8c8c" opacity="0.51"/><rect x="22.6" y="65.5" width="6.16" height="0.9" fill="#8c8c8c" opacity="0.49"/><rect x="35.5" y="65.5" width="8.76" height="0.9" fill="#8c8c8c" opacity="0.46"/><rect x="49.48" y="65.5" width="6.52" height="0.9" fill="#8c8c8c" opacity="0.48"/><rect x="63.28" y="65.5" width="4.22" height="0.9" fill="#8c8c8c" opacity="0.46"/><rect x="74.17" y="65.5" width="3.63" height="0.9" fill="#8c8c8c" opacity="0.4"/><rect x="2.2" y="67.25" width="6.11" height="0.9" fill="#8c8c8c" opacity="0.46"/><rect x="12.5" y="67.25" width="2.94" height="0.9" fill="#8c8c8c" opacity="0.53"/><rect x="22.6" y="67.25" width="7.67" height="0.9" fill="#8c8c8c" opacity="0.42"/><rect x="35.5" y="67.25" width="4.56" height="0.9" fill="#8c8c8c" opacity="0.41"/><rect x="51.3" y="67.25" width="4.7" height="0.9" fill="#8c8c8c" opacity="0.45"/><rect x="62.92" y="67.25" width="4.58" height="0.9" fill="#8c8c8c" opacity="0.5"/><rect x="72.96" y="67.25" width="4.84" height="0.9" fill="#8c8c8c" opacity="0.49"/><rect x="2.2" y="69" width="4.49" height="0.9" fill="#8c8c8c" opacity="0.44"/><rect x="12.5" y="69" width="4.11" height="0.9" fill="#8c8c8c" opacity="0.5"/><rect x="22.6" y="69" width="6.1" height="0.9" fill="#8c8c8c" opacity="0.5"/><rect x="35.5" y="69" width="9.28" height="0.9" fill="#8c8c8c" opacity="0.46"/><rect x="48.11" y="69" width="7.89" height="0.9" fill="#8c8c8c" opacity="0.54"/><rect x="62.72" y="69" width="4.78" height="0.9" fill="#8c8c8c" opacity="0.41"/><rect x="74.55" y="69" width="3.25" height="0.9" fill="#8c8c8c" opacity="0.5"/><rect x="2.2" y="70.75" width="6.76" height="0.9" fill="#8c8c8c" opacity="0.39"/><rect x="12.5" y="70.75" width="3.99" height="0.9" fill="#8c8c8c" opacity="0.47"/><rect x="22.6" y="70.75" width="8.09" height="0.9" fill="#8c8c8c" opacity="0.3"/><rect x="35.5" y="70.75" width="8.79" height="0.9" fill="#8c8c8c" opacity="0.42"/><rect x="49.47" y="70.75" width="6.53" height="0.9" fill="#8c8c8c" opacity="0.38"/><rect x="62.35" y="70.75" width="5.15" height="0.9" fill="#8c8c8c" opacity="0.48"/><rect x="73" y="70.75" width="4.8" height="0.9" fill="#8c8c8c" opacity="0.47"/><rect x="2.2" y="72.5" width="3.26" height="0.9" fill="#8c8c8c" opacity="0.3"/><rect x="12.5" y="72.5" width="3.32" height="0.9" fill="#8c8c8c" opacity="0.45"/><rect x="22.6" y="72.5" width="5.42" height="0.9" fill="#8c8c8c" opacity="0.46"/><rect x="35.5" y="72.5" width="7.97" height="0.9" fill="#8c8c8c" opacity="0.26"/><rect x="50.33" y="72.5" width="5.67" height="0.9" fill="#8c8c8c" opacity="0.32"/><rect x="64.38" y="72.5" width="3.12" height="0.9" fill="#8c8c8c" opacity="0.29"/><rect x="74.05" y="72.5" width="3.75" height="0.9" fill="#8c8c8c" opacity="0.3"/><rect x="2.2" y="74.25" width="3.89" height="0.9" fill="#8c8c8c" opacity="0.26"/><rect x="12.5" y="74.25" width="3.39" height="0.9" fill="#8c8c8c" opacity="0.36"/><rect x="22.6" y="74.25" width="7.47" height="0.9" fill="#8c8c8c" opacity="0.43"/><rect x="35.5" y="74.25" width="5.81" height="0.9" fill="#8c8c8c" opacity="0.52"/><rect x="52.4" y="74.25" width="3.6" height="0.9" fill="#8c8c8c" opacity="0.37"/><rect x="63.58" y="74.25" width="3.92" height="0.9" fill="#8c8c8c" opacity="0.37"/><rect x="74.72" y="74.25" width="3.08" height="0.9" fill="#8c8c8c" opacity="0.5"/><rect x="2.2" y="76" width="4.59" height="0.9" fill="#8c8c8c" opacity="0.26"/><rect x="12.5" y="76" width="3.78" height="0.9" fill="#8c8c8c" opacity="0.28"/><rect x="22.6" y="76" width="7.12" height="0.9" fill="#8c8c8c" opacity="0.35"/><rect x="35.5" y="76" width="7.69" height="0.9" fill="#8c8c8c" opacity="0.54"/><rect x="48.8" y="76" width="7.2" height="0.9" fill="#8c8c8c" opacity="0.38"/><rect x="61.67" y="76" width="5.83" height="0.9" fill="#8c8c8c" opacity="0.44"/><rect x="73.88" y="76" width="3.92" height="0.9" fill="#8c8c8c" opacity="0.29"/><rect x="2.2" y="77.75" width="5.44" height="0.9" fill="#8c8c8c" opacity="0.42"/><rect x="12.5" y="77.75" width="4.69" height="0.9" fill="#8c8c8c" opacity="0.54"/><rect x="22.6" y="77.75" width="7.45" height="0.9" fill="#8c8c8c" opacity="0.36"/><rect x="35.5" y="77.75" width="9.41" height="0.9" fill="#8c8c8c" opacity="0.25"/><rect x="51.93" y="77.75" width="4.07" height="0.9" fill="#8c8c8c" opacity="0.42"/><rect x="62.38" y="77.75" width="5.12" height="0.9" fill="#8c8c8c" opacity="0.29"/><rect x="73.02" y="77.75" width="4.78" height="0.9" fill="#8c8c8c" opacity="0.52"/><rect x="2.2" y="79.5" width="4.6" height="0.9" fill="#8c8c8c" opacity="0.38"/><rect x="12.5" y="79.5" width="2.76" height="0.9" fill="#8c8c8c" opacity="0.34"/><rect x="22.6" y="79.5" width="9.36" height="0.9" fill="#8c8c8c" opacity="0.36"/><rect x="35.5" y="79.5" width="9.79" height="0.9" fill="#8c8c8c" opacity="0.52"/><rect x="49.78" y="79.5" width="6.22" height="0.9" fill="#8c8c8c" opacity="0.33"/><rect x="61.07" y="79.5" width="6.43" height="0.9" fill="#8c8c8c" opacity="0.4"/><rect x="73.73" y="79.5" width="4.07" height="0.9" fill="#8c8c8c" opacity="0.35"/><rect x="2.2" y="81.25" width="6.94" height="0.9" fill="#8c8c8c" opacity="0.4"/><rect x="12.5" y="81.25" width="2.92" height="0.9" fill="#8c8c8c" opacity="0.39"/><rect x="22.6" y="81.25" width="4.91" height="0.9" fill="#8c8c8c" opacity="0.44"/><rect x="35.5" y="81.25" width="6.94" height="0.9" fill="#8c8c8c" opacity="0.34"/><rect x="48.96" y="81.25" width="7.04" height="0.9" fill="#8c8c8c" opacity="0.5"/><rect x="64.53" y="81.25" width="2.97" height="0.9" fill="#8c8c8c" opacity="0.41"/><rect x="74.2" y="81.25" width="3.6" height="0.9" fill="#8c8c8c" opacity="0.53"/><rect x="2.2" y="83" width="6.16" height="0.9" fill="#8c8c8c" opacity="0.32"/><rect x="12.5" y="83" width="2.87" height="0.9" fill="#8c8c8c" opacity="0.3"/><rect x="22.6" y="83" width="9.44" height="0.9" fill="#8c8c8c" opacity="0.34"/><rect x="35.5" y="83" width="7.84" height="0.9" fill="#8c8c8c" opacity="0.39"/><rect x="49.56" y="83" width="6.44" height="0.9" fill="#8c8c8c" opacity="0.43"/><rect x="61.92" y="83" width="5.58" height="0.9" fill="#8c8c8c" opacity="0.29"/><rect x="72.59" y="83" width="5.21" height="0.9" fill="#8c8c8c" opacity="0.34"/><rect x="2.2" y="84.75" width="5.2" height="0.9" fill="#8c8c8c" opacity="0.35"/><rect x="12.5" y="84.75" width="2.94" height="0.9" fill="#8c8c8c" opacity="0.41"/><rect x="22.6" y="84.75" width="6.7" height="0.9" fill="#8c8c8c" opacity="0.36"/><rect x="35.5" y="84.75" width="8.6" height="0.9" fill="#8c8c8c" opacity="0.43"/><rect x="52.24" y="84.75" width="3.76" height="0.9" fill="#8c8c8c" opacity="0.33"/><rect x="62.95" y="84.75" width="4.55" height="0.9" fill="#8c8c8c" opacity="0.52"/><rect x="72.17" y="84.75" width="5.63" height="0.9" fill="#8c8c8c" opacity="0.41"/><rect x="2.2" y="86.5" width="3.21" height="0.9" fill="#8c8c8c" opacity="0.48"/><rect x="12.5" y="86.5" width="3.29" height="0.9" fill="#8c8c8c" opacity="0.42"/><rect x="22.6" y="86.5" width="7.98" height="0.9" fill="#8c8c8c" opacity="0.44"/><rect x="35.5" y="86.5" width="7.15" height="0.9" fill="#8c8c8c" opacity="0.52"/><rect x="50.7" y="86.5" width="5.3" height="0.9" fill="#8c8c8c" opacity="0.37"/><rect x="61.53" y="86.5" width="5.97" height="0.9" fill="#8c8c8c" opacity="0.31"/><rect x="74.12" y="86.5" width="3.68" height="0.9" fill="#8c8c8c" opacity="0.5"/></svg></div><div class="lbl" style="left:496px;top:255px">Classic</div><div class="th" style="left:646px;top:160px"><svg width="80" height="90" viewBox="0 0 80 90" shape-rendering="auto"><rect x="1" y="1" width="78" height="88" fill="#ffffff"/><text x="2.2" y="4.5" font-size="2.6" font-family="Liberation Sans" fill="#5a5a5a" opacity="0.85">Report Title</text><rect x="72.3" y="3.3" width="5.5" height="1.2" fill="#8c8c8c" opacity="0.45"/><rect x="4.4" y="7.6499999999999995" width="5.2" height="1.1" fill="#8c8c8c" opacity="0.35"/><rect x="4.4" y="12.25" width="5.2" height="1.1" fill="#8c8c8c" opacity="0.35"/><rect x="4.4" y="17.15" width="5.2" height="1.1" fill="#8c8c8c" opacity="0.35"/><rect x="4.4" y="21.95" width="5.2" height="1.1" fill="#8c8c8c" opacity="0.35"/><rect x="4.4" y="26.849999999999998" width="5.2" height="1.1" fill="#8c8c8c" opacity="0.35"/><rect x="4.4" y="31.749999999999996" width="5.2" height="1.1" fill="#8c8c8c" opacity="0.35"/><rect x="8.4" y="36.650000000000006" width="1.2" height="1.1" fill="#8c8c8c" opacity="0.45"/><rect x="13.5" y="30.1" width="5.5" height="6.9" fill="#6db8ec"/><rect x="20.9" y="18.1" width="5.3" height="18.9" fill="#2a6db6"/><rect x="28" y="33.8" width="5.6" height="3.2" fill="#5cd65a"/><rect x="35" y="18.2" width="5.7" height="18.8" fill="#f4923a"/><rect x="48" y="29" width="5.2" height="8" fill="#6db8ec"/><rect x="55" y="25.1" width="5.3" height="11.9" fill="#2a6db6"/><rect x="62.2" y="32.8" width="5.5" height="4.2" fill="#5cd65a"/><rect x="69.4" y="13" width="5.6" height="24" fill="#f4923a"/><rect x="26" y="38.1" width="2" height="0.9" fill="#8c8c8c" opacity="0.5"/><rect x="60.3" y="38.1" width="2.2" height="0.9" fill="#8c8c8c" opacity="0.5"/><rect x="29" y="42.0" width="1.8" height="1.4" fill="#6db8ec"/><rect x="31.2" y="42.3" width="2.4" height="0.9" fill="#8c8c8c" opacity="0.4"/><rect x="35.1" y="42.0" width="1.8" height="1.4" fill="#2a6db6"/><rect x="37.300000000000004" y="42.3" width="2.4" height="0.9" fill="#8c8c8c" opacity="0.4"/><rect x="41" y="42.0" width="1.8" height="1.4" fill="#5cd65a"/><rect x="43.2" y="42.3" width="2.4" height="0.9" fill="#8c8c8c" opacity="0.4"/><rect x="47" y="42.0" width="1.8" height="1.4" fill="#f4923a"/><rect x="49.2" y="42.3" width="2.4" height="0.9" fill="#8c8c8c" opacity="0.4"/><rect x="2.2" y="46.1" width="7" height="1" fill="#8c8c8c" opacity="0.55"/><rect x="12.5" y="46.1" width="4.8" height="1" fill="#8c8c8c" opacity="0.55"/><rect x="22.6" y="46.1" width="9.5" height="1" fill="#8c8c8c" opacity="0.55"/><rect x="35.5" y="46.1" width="10" height="1" fill="#8c8c8c" opacity="0.55"/><rect x="48" y="46.1" width="8" height="1" fill="#8c8c8c" opacity="0.55"/><rect x="61" y="46.1" width="6.5" height="1" fill="#8c8c8c" opacity="0.55"/><rect x="71.8" y="46.1" width="6" height="1" fill="#8c8c8c" opacity="0.55"/><rect x="2" y="48.6" width="76" height="0.6" fill="#e0e8f4"/><rect x="2" y="52.1" width="76" height="0.6" fill="#e0e8f4"/><rect x="2" y="55.6" width="76" height="0.6" fill="#e0e8f4"/><rect x="2" y="59.1" width="76" height="0.6" fill="#e0e8f4"/><rect x="2" y="62.6" width="76" height="0.6" fill="#e0e8f4"/><rect x="2" y="66.1" width="76" height="0.6" fill="#e0e8f4"/><rect x="2" y="69.6" width="76" height="0.6" fill="#e0e8f4"/><rect x="2" y="73.1" width="76" height="0.6" fill="#e0e8f4"/><rect x="2" y="76.6" width="76" height="0.6" fill="#e0e8f4"/><rect x="2" y="80.1" width="76" height="0.6" fill="#e0e8f4"/><rect x="2" y="83.6" width="76" height="0.6" fill="#e0e8f4"/><rect x="2" y="87.1" width="76" height="0.6" fill="#e0e8f4"/><rect x="2.2" y="48" width="5.55" height="0.9" fill="#8c8c8c" opacity="0.47"/><rect x="12.5" y="48" width="4.26" height="0.9" fill="#8c8c8c" opacity="0.53"/><rect x="22.6" y="48" width="8.14" height="0.9" fill="#8c8c8c" opacity="0.53"/><rect x="35.5" y="48" width="4.66" height="0.9" fill="#8c8c8c" opacity="0.39"/><rect x="48.25" y="48" width="7.75" height="0.9" fill="#8c8c8c" opacity="0.44"/><rect x="61.35" y="48" width="6.15" height="0.9" fill="#8c8c8c" opacity="0.28"/><rect x="73.55" y="48" width="4.25" height="0.9" fill="#8c8c8c" opacity="0.32"/><rect x="2.2" y="49.75" width="5.24" height="0.9" fill="#8c8c8c" opacity="0.42"/><rect x="12.5" y="49.75" width="2.19" height="0.9" fill="#8c8c8c" opacity="0.32"/><rect x="22.6" y="49.75" width="5.74" height="0.9" fill="#8c8c8c" opacity="0.52"/><rect x="35.5" y="49.75" width="8.71" height="0.9" fill="#8c8c8c" opacity="0.3"/><rect x="48.89" y="49.75" width="7.11" height="0.9" fill="#8c8c8c" opacity="0.29"/><rect x="62.37" y="49.75" width="5.13" height="0.9" fill="#8c8c8c" opacity="0.29"/><rect x="75.09" y="49.75" width="2.71" height="0.9" fill="#8c8c8c" opacity="0.51"/><rect x="2.2" y="51.5" width="3.96" height="0.9" fill="#8c8c8c" opacity="0.31"/><rect x="12.5" y="51.5" width="4.75" height="0.9" fill="#8c8c8c" opacity="0.51"/><rect x="22.6" y="51.5" width="5.79" height="0.9" fill="#8c8c8c" opacity="0.54"/><rect x="35.5" y="51.5" width="7.47" height="0.9" fill="#8c8c8c" opacity="0.45"/><rect x="51.5" y="51.5" width="4.5" height="0.9" fill="#8c8c8c" opacity="0.53"/><rect x="62.11" y="51.5" width="5.39" height="0.9" fill="#8c8c8c" opacity="0.54"/><rect x="72.15" y="51.5" width="5.65" height="0.9" fill="#8c8c8c" opacity="0.34"/><rect x="2.2" y="53.25" width="4.54" height="0.9" fill="#8c8c8c" opacity="0.3"/><rect x="12.5" y="53.25" width="2.54" height="0.9" fill="#8c8c8c" opacity="0.27"/><rect x="22.6" y="53.25" width="5.85" height="0.9" fill="#8c8c8c" opacity="0.43"/><rect x="35.5" y="53.25" width="4.52" height="0.9" fill="#8c8c8c" opacity="0.45"/><rect x="50.91" y="53.25" width="5.09" height="0.9" fill="#8c8c8c" opacity="0.34"/><rect x="61.65" y="53.25" width="5.85" height="0.9" fill="#8c8c8c" opacity="0.39"/><rect x="74.06" y="53.25" width="3.74" height="0.9" fill="#8c8c8c" opacity="0.39"/><rect x="2.2" y="55" width="5.86" height="0.9" fill="#8c8c8c" opacity="0.27"/><rect x="12.5" y="55" width="4.73" height="0.9" fill="#8c8c8c" opacity="0.26"/><rect x="22.6" y="55" width="8.19" height="0.9" fill="#8c8c8c" opacity="0.5"/><rect x="35.5" y="55" width="4.6" height="0.9" fill="#8c8c8c" opacity="0.49"/><rect x="50.79" y="55" width="5.21" height="0.9" fill="#8c8c8c" opacity="0.42"/><rect x="64.54" y="55" width="2.96" height="0.9" fill="#8c8c8c" opacity="0.26"/><rect x="74.5" y="55" width="3.3" height="0.9" fill="#8c8c8c" opacity="0.54"/><rect x="2.2" y="56.75" width="3.91" height="0.9" fill="#8c8c8c" opacity="0.48"/><rect x="12.5" y="56.75" width="4.61" height="0.9" fill="#8c8c8c" opacity="0.53"/><rect x="22.6" y="56.75" width="6.07" height="0.9" fill="#8c8c8c" opacity="0.36"/><rect x="35.5" y="56.75" width="7.39" height="0.9" fill="#8c8c8c" opacity="0.48"/><rect x="51.92" y="56.75" width="4.08" height="0.9" fill="#8c8c8c" opacity="0.47"/><rect x="61.72" y="56.75" width="5.78" height="0.9" fill="#8c8c8c" opacity="0.51"/><rect x="74.98" y="56.75" width="2.82" height="0.9" fill="#8c8c8c" opacity="0.53"/><rect x="2.2" y="58.5" width="3.5" height="0.9" fill="#8c8c8c" opacity="0.35"/><rect x="12.5" y="58.5" width="3.77" height="0.9" fill="#8c8c8c" opacity="0.53"/><rect x="22.6" y="58.5" width="6.05" height="0.9" fill="#8c8c8c" opacity="0.53"/><rect x="35.5" y="58.5" width="7.5" height="0.9" fill="#8c8c8c" opacity="0.34"/><rect x="51.01" y="58.5" width="4.99" height="0.9" fill="#8c8c8c" opacity="0.3"/><rect x="64.3" y="58.5" width="3.2" height="0.9" fill="#8c8c8c" opacity="0.29"/><rect x="72.83" y="58.5" width="4.97" height="0.9" fill="#8c8c8c" opacity="0.55"/><rect x="2.2" y="60.25" width="3.77" height="0.9" fill="#8c8c8c" opacity="0.26"/><rect x="12.5" y="60.25" width="4.76" height="0.9" fill="#8c8c8c" opacity="0.41"/><rect x="22.6" y="60.25" width="6.4" height="0.9" fill="#8c8c8c" opacity="0.32"/><rect x="35.5" y="60.25" width="7.77" height="0.9" fill="#8c8c8c" opacity="0.5"/><rect x="50.4" y="60.25" width="5.6" height="0.9" fill="#8c8c8c" opacity="0.38"/><rect x="64.38" y="60.25" width="3.12" height="0.9" fill="#8c8c8c" opacity="0.52"/><rect x="74.99" y="60.25" width="2.81" height="0.9" fill="#8c8c8c" opacity="0.4"/><rect x="2.2" y="62" width="6.38" height="0.9" fill="#8c8c8c" opacity="0.29"/><rect x="12.5" y="62" width="4.09" height="0.9" fill="#8c8c8c" opacity="0.53"/><rect x="22.6" y="62" width="7.57" height="0.9" fill="#8c8c8c" opacity="0.49"/><rect x="35.5" y="62" width="5.09" height="0.9" fill="#8c8c8c" opacity="0.38"/><rect x="51.74" y="62" width="4.26" height="0.9" fill="#8c8c8c" opacity="0.5"/><rect x="63.52" y="62" width="3.98" height="0.9" fill="#8c8c8c" opacity="0.39"/><rect x="71.8" y="62" width="6" height="0.9" fill="#8c8c8c" opacity="0.51"/><rect x="2.2" y="63.75" width="6.91" height="0.9" fill="#8c8c8c" opacity="0.39"/><rect x="12.5" y="63.75" width="3.45" height="0.9" fill="#8c8c8c" opacity="0.47"/><rect x="22.6" y="63.75" width="6.78" height="0.9" fill="#8c8c8c" opacity="0.34"/><rect x="35.5" y="63.75" width="6.72" height="0.9" fill="#8c8c8c" opacity="0.29"/><rect x="50.74" y="63.75" width="5.26" height="0.9" fill="#8c8c8c" opacity="0.55"/><rect x="61.14" y="63.75" width="6.36" height="0.9" fill="#8c8c8c" opacity="0.44"/><rect x="73.45" y="63.75" width="4.35" height="0.9" fill="#8c8c8c" opacity="0.35"/><rect x="2.2" y="65.5" width="3.49" height="0.9" fill="#8c8c8c" opacity="0.33"/><rect x="12.5" y="65.5" width="4.22" height="0.9" fill="#8c8c8c" opacity="0.51"/><rect x="22.6" y="65.5" width="6.16" height="0.9" fill="#8c8c8c" opacity="0.49"/><rect x="35.5" y="65.5" width="8.76" height="0.9" fill="#8c8c8c" opacity="0.46"/><rect x="49.48" y="65.5" width="6.52" height="0.9" fill="#8c8c8c" opacity="0.48"/><rect x="63.28" y="65.5" width="4.22" height="0.9" fill="#8c8c8c" opacity="0.46"/><rect x="74.17" y="65.5" width="3.63" height="0.9" fill="#8c8c8c" opacity="0.4"/><rect x="2.2" y="67.25" width="6.11" height="0.9" fill="#8c8c8c" opacity="0.46"/><rect x="12.5" y="67.25" width="2.94" height="0.9" fill="#8c8c8c" opacity="0.53"/><rect x="22.6" y="67.25" width="7.67" height="0.9" fill="#8c8c8c" opacity="0.42"/><rect x="35.5" y="67.25" width="4.56" height="0.9" fill="#8c8c8c" opacity="0.41"/><rect x="51.3" y="67.25" width="4.7" height="0.9" fill="#8c8c8c" opacity="0.45"/><rect x="62.92" y="67.25" width="4.58" height="0.9" fill="#8c8c8c" opacity="0.5"/><rect x="72.96" y="67.25" width="4.84" height="0.9" fill="#8c8c8c" opacity="0.49"/><rect x="2.2" y="69" width="4.49" height="0.9" fill="#8c8c8c" opacity="0.44"/><rect x="12.5" y="69" width="4.11" height="0.9" fill="#8c8c8c" opacity="0.5"/><rect x="22.6" y="69" width="6.1" height="0.9" fill="#8c8c8c" opacity="0.5"/><rect x="35.5" y="69" width="9.28" height="0.9" fill="#8c8c8c" opacity="0.46"/><rect x="48.11" y="69" width="7.89" height="0.9" fill="#8c8c8c" opacity="0.54"/><rect x="62.72" y="69" width="4.78" height="0.9" fill="#8c8c8c" opacity="0.41"/><rect x="74.55" y="69" width="3.25" height="0.9" fill="#8c8c8c" opacity="0.5"/><rect x="2.2" y="70.75" width="6.76" height="0.9" fill="#8c8c8c" opacity="0.39"/><rect x="12.5" y="70.75" width="3.99" height="0.9" fill="#8c8c8c" opacity="0.47"/><rect x="22.6" y="70.75" width="8.09" height="0.9" fill="#8c8c8c" opacity="0.3"/><rect x="35.5" y="70.75" width="8.79" height="0.9" fill="#8c8c8c" opacity="0.42"/><rect x="49.47" y="70.75" width="6.53" height="0.9" fill="#8c8c8c" opacity="0.38"/><rect x="62.35" y="70.75" width="5.15" height="0.9" fill="#8c8c8c" opacity="0.48"/><rect x="73" y="70.75" width="4.8" height="0.9" fill="#8c8c8c" opacity="0.47"/><rect x="2.2" y="72.5" width="3.26" height="0.9" fill="#8c8c8c" opacity="0.3"/><rect x="12.5" y="72.5" width="3.32" height="0.9" fill="#8c8c8c" opacity="0.45"/><rect x="22.6" y="72.5" width="5.42" height="0.9" fill="#8c8c8c" opacity="0.46"/><rect x="35.5" y="72.5" width="7.97" height="0.9" fill="#8c8c8c" opacity="0.26"/><rect x="50.33" y="72.5" width="5.67" height="0.9" fill="#8c8c8c" opacity="0.32"/><rect x="64.38" y="72.5" width="3.12" height="0.9" fill="#8c8c8c" opacity="0.29"/><rect x="74.05" y="72.5" width="3.75" height="0.9" fill="#8c8c8c" opacity="0.3"/><rect x="2.2" y="74.25" width="3.89" height="0.9" fill="#8c8c8c" opacity="0.26"/><rect x="12.5" y="74.25" width="3.39" height="0.9" fill="#8c8c8c" opacity="0.36"/><rect x="22.6" y="74.25" width="7.47" height="0.9" fill="#8c8c8c" opacity="0.43"/><rect x="35.5" y="74.25" width="5.81" height="0.9" fill="#8c8c8c" opacity="0.52"/><rect x="52.4" y="74.25" width="3.6" height="0.9" fill="#8c8c8c" opacity="0.37"/><rect x="63.58" y="74.25" width="3.92" height="0.9" fill="#8c8c8c" opacity="0.37"/><rect x="74.72" y="74.25" width="3.08" height="0.9" fill="#8c8c8c" opacity="0.5"/><rect x="2.2" y="76" width="4.59" height="0.9" fill="#8c8c8c" opacity="0.26"/><rect x="12.5" y="76" width="3.78" height="0.9" fill="#8c8c8c" opacity="0.28"/><rect x="22.6" y="76" width="7.12" height="0.9" fill="#8c8c8c" opacity="0.35"/><rect x="35.5" y="76" width="7.69" height="0.9" fill="#8c8c8c" opacity="0.54"/><rect x="48.8" y="76" width="7.2" height="0.9" fill="#8c8c8c" opacity="0.38"/><rect x="61.67" y="76" width="5.83" height="0.9" fill="#8c8c8c" opacity="0.44"/><rect x="73.88" y="76" width="3.92" height="0.9" fill="#8c8c8c" opacity="0.29"/><rect x="2.2" y="77.75" width="5.44" height="0.9" fill="#8c8c8c" opacity="0.42"/><rect x="12.5" y="77.75" width="4.69" height="0.9" fill="#8c8c8c" opacity="0.54"/><rect x="22.6" y="77.75" width="7.45" height="0.9" fill="#8c8c8c" opacity="0.36"/><rect x="35.5" y="77.75" width="9.41" height="0.9" fill="#8c8c8c" opacity="0.25"/><rect x="51.93" y="77.75" width="4.07" height="0.9" fill="#8c8c8c" opacity="0.42"/><rect x="62.38" y="77.75" width="5.12" height="0.9" fill="#8c8c8c" opacity="0.29"/><rect x="73.02" y="77.75" width="4.78" height="0.9" fill="#8c8c8c" opacity="0.52"/><rect x="2.2" y="79.5" width="4.6" height="0.9" fill="#8c8c8c" opacity="0.38"/><rect x="12.5" y="79.5" width="2.76" height="0.9" fill="#8c8c8c" opacity="0.34"/><rect x="22.6" y="79.5" width="9.36" height="0.9" fill="#8c8c8c" opacity="0.36"/><rect x="35.5" y="79.5" width="9.79" height="0.9" fill="#8c8c8c" opacity="0.52"/><rect x="49.78" y="79.5" width="6.22" height="0.9" fill="#8c8c8c" opacity="0.33"/><rect x="61.07" y="79.5" width="6.43" height="0.9" fill="#8c8c8c" opacity="0.4"/><rect x="73.73" y="79.5" width="4.07" height="0.9" fill="#8c8c8c" opacity="0.35"/><rect x="2.2" y="81.25" width="6.94" height="0.9" fill="#8c8c8c" opacity="0.4"/><rect x="12.5" y="81.25" width="2.92" height="0.9" fill="#8c8c8c" opacity="0.39"/><rect x="22.6" y="81.25" width="4.91" height="0.9" fill="#8c8c8c" opacity="0.44"/><rect x="35.5" y="81.25" width="6.94" height="0.9" fill="#8c8c8c" opacity="0.34"/><rect x="48.96" y="81.25" width="7.04" height="0.9" fill="#8c8c8c" opacity="0.5"/><rect x="64.53" y="81.25" width="2.97" height="0.9" fill="#8c8c8c" opacity="0.41"/><rect x="74.2" y="81.25" width="3.6" height="0.9" fill="#8c8c8c" opacity="0.53"/><rect x="2.2" y="83" width="6.16" height="0.9" fill="#8c8c8c" opacity="0.32"/><rect x="12.5" y="83" width="2.87" height="0.9" fill="#8c8c8c" opacity="0.3"/><rect x="22.6" y="83" width="9.44" height="0.9" fill="#8c8c8c" opacity="0.34"/><rect x="35.5" y="83" width="7.84" height="0.9" fill="#8c8c8c" opacity="0.39"/><rect x="49.56" y="83" width="6.44" height="0.9" fill="#8c8c8c" opacity="0.43"/><rect x="61.92" y="83" width="5.58" height="0.9" fill="#8c8c8c" opacity="0.29"/><rect x="72.59" y="83" width="5.21" height="0.9" fill="#8c8c8c" opacity="0.34"/><rect x="2.2" y="84.75" width="5.2" height="0.9" fill="#8c8c8c" opacity="0.35"/><rect x="12.5" y="84.75" width="2.94" height="0.9" fill="#8c8c8c" opacity="0.41"/><rect x="22.6" y="84.75" width="6.7" height="0.9" fill="#8c8c8c" opacity="0.36"/><rect x="35.5" y="84.75" width="8.6" height="0.9" fill="#8c8c8c" opacity="0.43"/><rect x="52.24" y="84.75" width="3.76" height="0.9" fill="#8c8c8c" opacity="0.33"/><rect x="62.95" y="84.75" width="4.55" height="0.9" fill="#8c8c8c" opacity="0.52"/><rect x="72.17" y="84.75" width="5.63" height="0.9" fill="#8c8c8c" opacity="0.41"/><rect x="2.2" y="86.5" width="3.21" height="0.9" fill="#8c8c8c" opacity="0.48"/><rect x="12.5" y="86.5" width="3.29" height="0.9" fill="#8c8c8c" opacity="0.42"/><rect x="22.6" y="86.5" width="7.98" height="0.9" fill="#8c8c8c" opacity="0.44"/><rect x="35.5" y="86.5" width="7.15" height="0.9" fill="#8c8c8c" opacity="0.52"/><rect x="50.7" y="86.5" width="5.3" height="0.9" fill="#8c8c8c" opacity="0.37"/><rect x="61.53" y="86.5" width="5.97" height="0.9" fill="#8c8c8c" opacity="0.31"/><rect x="74.12" y="86.5" width="3.68" height="0.9" fill="#8c8c8c" opacity="0.5"/></svg></div><div class="lbl" style="left:616px;top:255px">Cold</div><div class="th" style="left:46px;top:275px"><svg width="80" height="90" viewBox="0 0 80 90" shape-rendering="auto"><rect x="1" y="1" width="78" height="88" fill="#ffffff"/><text x="2.2" y="4.5" font-size="2.6" font-family="Liberation Sans" fill="#5a5a5a" opacity="0.85">Report Title</text><rect x="72.3" y="3.3" width="5.5" height="1.2" fill="#8c8c8c" opacity="0.45"/><rect x="4.4" y="7.6499999999999995" width="5.2" height="1.1" fill="#8c8c8c" opacity="0.35"/><rect x="4.4" y="12.25" width="5.2" height="1.1" fill="#8c8c8c" opacity="0.35"/><rect x="4.4" y="17.15" width="5.2" height="1.1" fill="#8c8c8c" opacity="0.35"/><rect x="4.4" y="21.95" width="5.2" height="1.1" fill="#8c8c8c" opacity="0.35"/><rect x="4.4" y="26.849999999999998" width="5.2" height="1.1" fill="#8c8c8c" opacity="0.35"/><rect x="4.4" y="31.749999999999996" width="5.2" height="1.1" fill="#8c8c8c" opacity="0.35"/><rect x="8.4" y="36.650000000000006" width="1.2" height="1.1" fill="#8c8c8c" opacity="0.45"/><rect x="13.5" y="30.1" width="5.5" height="6.9" fill="#2a6fb6"/><rect x="20.9" y="18.1" width="5.3" height="18.9" fill="#f58220"/><rect x="28" y="33.8" width="5.6" height="3.2" fill="#2ea02e"/><rect x="35" y="18.2" width="5.7" height="18.8" fill="#d8262a"/><rect x="48" y="29" width="5.2" height="8" fill="#2a6fb6"/><rect x="55" y="25.1" width="5.3" height="11.9" fill="#f58220"/><rect x="62.2" y="32.8" width="5.5" height="4.2" fill="#2ea02e"/><rect x="69.4" y="13" width="5.6" height="24" fill="#d8262a"/><rect x="26" y="38.1" width="2" height="0.9" fill="#8c8c8c" opacity="0.5"/><rect x="60.3" y="38.1" width="2.2" height="0.9" fill="#8c8c8c" opacity="0.5"/><rect x="29" y="42.0" width="1.8" height="1.4" fill="#2a6fb6"/><rect x="31.2" y="42.3" width="2.4" height="0.9" fill="#8c8c8c" opacity="0.4"/><rect x="35.1" y="42.0" width="1.8" height="1.4" fill="#f58220"/><rect x="37.300000000000004" y="42.3" width="2.4" height="0.9" fill="#8c8c8c" opacity="0.4"/><rect x="41" y="42.0" width="1.8" height="1.4" fill="#2ea02e"/><rect x="43.2" y="42.3" width="2.4" height="0.9" fill="#8c8c8c" opacity="0.4"/><rect x="47" y="42.0" width="1.8" height="1.4" fill="#d8262a"/><rect x="49.2" y="42.3" width="2.4" height="0.9" fill="#8c8c8c" opacity="0.4"/><rect x="2" y="45.8" width="76" height="1.6" fill="#2a5fb0"/><rect x="2.2" y="46.1" width="7" height="1" fill="#ffffff" opacity="0.3"/><rect x="12.5" y="46.1" width="4.8" height="1" fill="#ffffff" opacity="0.3"/><rect x="22.6" y="46.1" width="9.5" height="1" fill="#ffffff" opacity="0.3"/><rect x="35.5" y="46.1" width="10" height="1" fill="#ffffff" opacity="0.3"/><rect x="48" y="46.1" width="8" height="1" fill="#ffffff" opacity="0.3"/><rect x="61" y="46.1" width="6.5" height="1" fill="#ffffff" opacity="0.3"/><rect x="71.8" y="46.1" width="6" height="1" fill="#ffffff" opacity="0.3"/><rect x="2" y="48.3" width="76" height="1.6" fill="#d6e1f0"/><rect x="2" y="51.8" width="76" height="1.6" fill="#d6e1f0"/><rect x="2" y="55.3" width="76" height="1.6" fill="#d6e1f0"/><rect x="2" y="58.8" width="76" height="1.6" fill="#d6e1f0"/><rect x="2" y="62.3" width="76" height="1.6" fill="#d6e1f0"/><rect x="2" y="65.8" width="76" height="1.6" fill="#d6e1f0"/><rect x="2" y="69.3" width="76" height="1.6" fill="#d6e1f0"/><rect x="2" y="72.8" width="76" height="1.6" fill="#d6e1f0"/><rect x="2" y="76.3" width="76" height="1.6" fill="#d6e1f0"/><rect x="2" y="79.8" width="76" height="1.6" fill="#d6e1f0"/><rect x="2" y="83.3" width="76" height="1.6" fill="#d6e1f0"/><rect x="2" y="86.8" width="76" height="1.6" fill="#d6e1f0"/><rect x="2.2" y="48" width="5.55" height="0.9" fill="#8c8c8c" opacity="0.47"/><rect x="12.5" y="48" width="4.26" height="0.9" fill="#8c8c8c" opacity="0.53"/><rect x="22.6" y="48" width="8.14" height="0.9" fill="#8c8c8c" opacity="0.53"/><rect x="35.5" y="48" width="4.66" height="0.9" fill="#8c8c8c" opacity="0.39"/><rect x="48.25" y="48" width="7.75" height="0.9" fill="#8c8c8c" opacity="0.44"/><rect x="61.35" y="48" width="6.15" height="0.9" fill="#8c8c8c" opacity="0.28"/><rect x="73.55" y="48" width="4.25" height="0.9" fill="#8c8c8c" opacity="0.32"/><rect x="2.2" y="49.75" width="5.24" height="0.9" fill="#8c8c8c" opacity="0.42"/><rect x="12.5" y="49.75" width="2.19" height="0.9" fill="#8c8c8c" opacity="0.32"/><rect x="22.6" y="49.75" width="5.74" height="0.9" fill="#8c8c8c" opacity="0.52"/><rect x="35.5" y="49.75" width="8.71" height="0.9" fill="#8c8c8c" opacity="0.3"/><rect x="48.89" y="49.75" width="7.11" height="0.9" fill="#8c8c8c" opacity="0.29"/><rect x="62.37" y="49.75" width="5.13" height="0.9" fill="#8c8c8c" opacity="0.29"/><rect x="75.09" y="49.75" width="2.71" height="0.9" fill="#8c8c8c" opacity="0.51"/><rect x="2.2" y="51.5" width="3.96" height="0.9" fill="#8c8c8c" opacity="0.31"/><rect x="12.5" y="51.5" width="4.75" height="0.9" fill="#8c8c8c" opacity="0.51"/><rect x="22.6" y="51.5" width="5.79" height="0.9" fill="#8c8c8c" opacity="0.54"/><rect x="35.5" y="51.5" width="7.47" height="0.9" fill="#8c8c8c" opacity="0.45"/><rect x="51.5" y="51.5" width="4.5" height="0.9" fill="#8c8c8c" opacity="0.53"/><rect x="62.11" y="51.5" width="5.39" height="0.9" fill="#8c8c8c" opacity="0.54"/><rect x="72.15" y="51.5" width="5.65" height="0.9" fill="#8c8c8c" opacity="0.34"/><rect x="2.2" y="53.25" width="4.54" height="0.9" fill="#8c8c8c" opacity="0.3"/><rect x="12.5" y="53.25" width="2.54" height="0.9" fill="#8c8c8c" opacity="0.27"/><rect x="22.6" y="53.25" width="5.85" height="0.9" fill="#8c8c8c" opacity="0.43"/><rect x="35.5" y="53.25" width="4.52" height="0.9" fill="#8c8c8c" opacity="0.45"/><rect x="50.91" y="53.25" width="5.09" height="0.9" fill="#8c8c8c" opacity="0.34"/><rect x="61.65" y="53.25" width="5.85" height="0.9" fill="#8c8c8c" opacity="0.39"/><rect x="74.06" y="53.25" width="3.74" height="0.9" fill="#8c8c8c" opacity="0.39"/><rect x="2.2" y="55" width="5.86" height="0.9" fill="#8c8c8c" opacity="0.27"/><rect x="12.5" y="55" width="4.73" height="0.9" fill="#8c8c8c" opacity="0.26"/><rect x="22.6" y="55" width="8.19" height="0.9" fill="#8c8c8c" opacity="0.5"/><rect x="35.5" y="55" width="4.6" height="0.9" fill="#8c8c8c" opacity="0.49"/><rect x="50.79" y="55" width="5.21" height="0.9" fill="#8c8c8c" opacity="0.42"/><rect x="64.54" y="55" width="2.96" height="0.9" fill="#8c8c8c" opacity="0.26"/><rect x="74.5" y="55" width="3.3" height="0.9" fill="#8c8c8c" opacity="0.54"/><rect x="2.2" y="56.75" width="3.91" height="0.9" fill="#8c8c8c" opacity="0.48"/><rect x="12.5" y="56.75" width="4.61" height="0.9" fill="#8c8c8c" opacity="0.53"/><rect x="22.6" y="56.75" width="6.07" height="0.9" fill="#8c8c8c" opacity="0.36"/><rect x="35.5" y="56.75" width="7.39" height="0.9" fill="#8c8c8c" opacity="0.48"/><rect x="51.92" y="56.75" width="4.08" height="0.9" fill="#8c8c8c" opacity="0.47"/><rect x="61.72" y="56.75" width="5.78" height="0.9" fill="#8c8c8c" opacity="0.51"/><rect x="74.98" y="56.75" width="2.82" height="0.9" fill="#8c8c8c" opacity="0.53"/><rect x="2.2" y="58.5" width="3.5" height="0.9" fill="#8c8c8c" opacity="0.35"/><rect x="12.5" y="58.5" width="3.77" height="0.9" fill="#8c8c8c" opacity="0.53"/><rect x="22.6" y="58.5" width="6.05" height="0.9" fill="#8c8c8c" opacity="0.53"/><rect x="35.5" y="58.5" width="7.5" height="0.9" fill="#8c8c8c" opacity="0.34"/><rect x="51.01" y="58.5" width="4.99" height="0.9" fill="#8c8c8c" opacity="0.3"/><rect x="64.3" y="58.5" width="3.2" height="0.9" fill="#8c8c8c" opacity="0.29"/><rect x="72.83" y="58.5" width="4.97" height="0.9" fill="#8c8c8c" opacity="0.55"/><rect x="2.2" y="60.25" width="3.77" height="0.9" fill="#8c8c8c" opacity="0.26"/><rect x="12.5" y="60.25" width="4.76" height="0.9" fill="#8c8c8c" opacity="0.41"/><rect x="22.6" y="60.25" width="6.4" height="0.9" fill="#8c8c8c" opacity="0.32"/><rect x="35.5" y="60.25" width="7.77" height="0.9" fill="#8c8c8c" opacity="0.5"/><rect x="50.4" y="60.25" width="5.6" height="0.9" fill="#8c8c8c" opacity="0.38"/><rect x="64.38" y="60.25" width="3.12" height="0.9" fill="#8c8c8c" opacity="0.52"/><rect x="74.99" y="60.25" width="2.81" height="0.9" fill="#8c8c8c" opacity="0.4"/><rect x="2.2" y="62" width="6.38" height="0.9" fill="#8c8c8c" opacity="0.29"/><rect x="12.5" y="62" width="4.09" height="0.9" fill="#8c8c8c" opacity="0.53"/><rect x="22.6" y="62" width="7.57" height="0.9" fill="#8c8c8c" opacity="0.49"/><rect x="35.5" y="62" width="5.09" height="0.9" fill="#8c8c8c" opacity="0.38"/><rect x="51.74" y="62" width="4.26" height="0.9" fill="#8c8c8c" opacity="0.5"/><rect x="63.52" y="62" width="3.98" height="0.9" fill="#8c8c8c" opacity="0.39"/><rect x="71.8" y="62" width="6" height="0.9" fill="#8c8c8c" opacity="0.51"/><rect x="2.2" y="63.75" width="6.91" height="0.9" fill="#8c8c8c" opacity="0.39"/><rect x="12.5" y="63.75" width="3.45" height="0.9" fill="#8c8c8c" opacity="0.47"/><rect x="22.6" y="63.75" width="6.78" height="0.9" fill="#8c8c8c" opacity="0.34"/><rect x="35.5" y="63.75" width="6.72" height="0.9" fill="#8c8c8c" opacity="0.29"/><rect x="50.74" y="63.75" width="5.26" height="0.9" fill="#8c8c8c" opacity="0.55"/><rect x="61.14" y="63.75" width="6.36" height="0.9" fill="#8c8c8c" opacity="0.44"/><rect x="73.45" y="63.75" width="4.35" height="0.9" fill="#8c8c8c" opacity="0.35"/><rect x="2.2" y="65.5" width="3.49" height="0.9" fill="#8c8c8c" opacity="0.33"/><rect x="12.5" y="65.5" width="4.22" height="0.9" fill="#8c8c8c" opacity="0.51"/><rect x="22.6" y="65.5" width="6.16" height="0.9" fill="#8c8c8c" opacity="0.49"/><rect x="35.5" y="65.5" width="8.76" height="0.9" fill="#8c8c8c" opacity="0.46"/><rect x="49.48" y="65.5" width="6.52" height="0.9" fill="#8c8c8c" opacity="0.48"/><rect x="63.28" y="65.5" width="4.22" height="0.9" fill="#8c8c8c" opacity="0.46"/><rect x="74.17" y="65.5" width="3.63" height="0.9" fill="#8c8c8c" opacity="0.4"/><rect x="2.2" y="67.25" width="6.11" height="0.9" fill="#8c8c8c" opacity="0.46"/><rect x="12.5" y="67.25" width="2.94" height="0.9" fill="#8c8c8c" opacity="0.53"/><rect x="22.6" y="67.25" width="7.67" height="0.9" fill="#8c8c8c" opacity="0.42"/><rect x="35.5" y="67.25" width="4.56" height="0.9" fill="#8c8c8c" opacity="0.41"/><rect x="51.3" y="67.25" width="4.7" height="0.9" fill="#8c8c8c" opacity="0.45"/><rect x="62.92" y="67.25" width="4.58" height="0.9" fill="#8c8c8c" opacity="0.5"/><rect x="72.96" y="67.25" width="4.84" height="0.9" fill="#8c8c8c" opacity="0.49"/><rect x="2.2" y="69" width="4.49" height="0.9" fill="#8c8c8c" opacity="0.44"/><rect x="12.5" y="69" width="4.11" height="0.9" fill="#8c8c8c" opacity="0.5"/><rect x="22.6" y="69" width="6.1" height="0.9" fill="#8c8c8c" opacity="0.5"/><rect x="35.5" y="69" width="9.28" height="0.9" fill="#8c8c8c" opacity="0.46"/><rect x="48.11" y="69" width="7.89" height="0.9" fill="#8c8c8c" opacity="0.54"/><rect x="62.72" y="69" width="4.78" height="0.9" fill="#8c8c8c" opacity="0.41"/><rect x="74.55" y="69" width="3.25" height="0.9" fill="#8c8c8c" opacity="0.5"/><rect x="2.2" y="70.75" width="6.76" height="0.9" fill="#8c8c8c" opacity="0.39"/><rect x="12.5" y="70.75" width="3.99" height="0.9" fill="#8c8c8c" opacity="0.47"/><rect x="22.6" y="70.75" width="8.09" height="0.9" fill="#8c8c8c" opacity="0.3"/><rect x="35.5" y="70.75" width="8.79" height="0.9" fill="#8c8c8c" opacity="0.42"/><rect x="49.47" y="70.75" width="6.53" height="0.9" fill="#8c8c8c" opacity="0.38"/><rect x="62.35" y="70.75" width="5.15" height="0.9" fill="#8c8c8c" opacity="0.48"/><rect x="73" y="70.75" width="4.8" height="0.9" fill="#8c8c8c" opacity="0.47"/><rect x="2.2" y="72.5" width="3.26" height="0.9" fill="#8c8c8c" opacity="0.3"/><rect x="12.5" y="72.5" width="3.32" height="0.9" fill="#8c8c8c" opacity="0.45"/><rect x="22.6" y="72.5" width="5.42" height="0.9" fill="#8c8c8c" opacity="0.46"/><rect x="35.5" y="72.5" width="7.97" height="0.9" fill="#8c8c8c" opacity="0.26"/><rect x="50.33" y="72.5" width="5.67" height="0.9" fill="#8c8c8c" opacity="0.32"/><rect x="64.38" y="72.5" width="3.12" height="0.9" fill="#8c8c8c" opacity="0.29"/><rect x="74.05" y="72.5" width="3.75" height="0.9" fill="#8c8c8c" opacity="0.3"/><rect x="2.2" y="74.25" width="3.89" height="0.9" fill="#8c8c8c" opacity="0.26"/><rect x="12.5" y="74.25" width="3.39" height="0.9" fill="#8c8c8c" opacity="0.36"/><rect x="22.6" y="74.25" width="7.47" height="0.9" fill="#8c8c8c" opacity="0.43"/><rect x="35.5" y="74.25" width="5.81" height="0.9" fill="#8c8c8c" opacity="0.52"/><rect x="52.4" y="74.25" width="3.6" height="0.9" fill="#8c8c8c" opacity="0.37"/><rect x="63.58" y="74.25" width="3.92" height="0.9" fill="#8c8c8c" opacity="0.37"/><rect x="74.72" y="74.25" width="3.08" height="0.9" fill="#8c8c8c" opacity="0.5"/><rect x="2.2" y="76" width="4.59" height="0.9" fill="#8c8c8c" opacity="0.26"/><rect x="12.5" y="76" width="3.78" height="0.9" fill="#8c8c8c" opacity="0.28"/><rect x="22.6" y="76" width="7.12" height="0.9" fill="#8c8c8c" opacity="0.35"/><rect x="35.5" y="76" width="7.69" height="0.9" fill="#8c8c8c" opacity="0.54"/><rect x="48.8" y="76" width="7.2" height="0.9" fill="#8c8c8c" opacity="0.38"/><rect x="61.67" y="76" width="5.83" height="0.9" fill="#8c8c8c" opacity="0.44"/><rect x="73.88" y="76" width="3.92" height="0.9" fill="#8c8c8c" opacity="0.29"/><rect x="2.2" y="77.75" width="5.44" height="0.9" fill="#8c8c8c" opacity="0.42"/><rect x="12.5" y="77.75" width="4.69" height="0.9" fill="#8c8c8c" opacity="0.54"/><rect x="22.6" y="77.75" width="7.45" height="0.9" fill="#8c8c8c" opacity="0.36"/><rect x="35.5" y="77.75" width="9.41" height="0.9" fill="#8c8c8c" opacity="0.25"/><rect x="51.93" y="77.75" width="4.07" height="0.9" fill="#8c8c8c" opacity="0.42"/><rect x="62.38" y="77.75" width="5.12" height="0.9" fill="#8c8c8c" opacity="0.29"/><rect x="73.02" y="77.75" width="4.78" height="0.9" fill="#8c8c8c" opacity="0.52"/><rect x="2.2" y="79.5" width="4.6" height="0.9" fill="#8c8c8c" opacity="0.38"/><rect x="12.5" y="79.5" width="2.76" height="0.9" fill="#8c8c8c" opacity="0.34"/><rect x="22.6" y="79.5" width="9.36" height="0.9" fill="#8c8c8c" opacity="0.36"/><rect x="35.5" y="79.5" width="9.79" height="0.9" fill="#8c8c8c" opacity="0.52"/><rect x="49.78" y="79.5" width="6.22" height="0.9" fill="#8c8c8c" opacity="0.33"/><rect x="61.07" y="79.5" width="6.43" height="0.9" fill="#8c8c8c" opacity="0.4"/><rect x="73.73" y="79.5" width="4.07" height="0.9" fill="#8c8c8c" opacity="0.35"/><rect x="2.2" y="81.25" width="6.94" height="0.9" fill="#8c8c8c" opacity="0.4"/><rect x="12.5" y="81.25" width="2.92" height="0.9" fill="#8c8c8c" opacity="0.39"/><rect x="22.6" y="81.25" width="4.91" height="0.9" fill="#8c8c8c" opacity="0.44"/><rect x="35.5" y="81.25" width="6.94" height="0.9" fill="#8c8c8c" opacity="0.34"/><rect x="48.96" y="81.25" width="7.04" height="0.9" fill="#8c8c8c" opacity="0.5"/><rect x="64.53" y="81.25" width="2.97" height="0.9" fill="#8c8c8c" opacity="0.41"/><rect x="74.2" y="81.25" width="3.6" height="0.9" fill="#8c8c8c" opacity="0.53"/><rect x="2.2" y="83" width="6.16" height="0.9" fill="#8c8c8c" opacity="0.32"/><rect x="12.5" y="83" width="2.87" height="0.9" fill="#8c8c8c" opacity="0.3"/><rect x="22.6" y="83" width="9.44" height="0.9" fill="#8c8c8c" opacity="0.34"/><rect x="35.5" y="83" width="7.84" height="0.9" fill="#8c8c8c" opacity="0.39"/><rect x="49.56" y="83" width="6.44" height="0.9" fill="#8c8c8c" opacity="0.43"/><rect x="61.92" y="83" width="5.58" height="0.9" fill="#8c8c8c" opacity="0.29"/><rect x="72.59" y="83" width="5.21" height="0.9" fill="#8c8c8c" opacity="0.34"/><rect x="2.2" y="84.75" width="5.2" height="0.9" fill="#8c8c8c" opacity="0.35"/><rect x="12.5" y="84.75" width="2.94" height="0.9" fill="#8c8c8c" opacity="0.41"/><rect x="22.6" y="84.75" width="6.7" height="0.9" fill="#8c8c8c" opacity="0.36"/><rect x="35.5" y="84.75" width="8.6" height="0.9" fill="#8c8c8c" opacity="0.43"/><rect x="52.24" y="84.75" width="3.76" height="0.9" fill="#8c8c8c" opacity="0.33"/><rect x="62.95" y="84.75" width="4.55" height="0.9" fill="#8c8c8c" opacity="0.52"/><rect x="72.17" y="84.75" width="5.63" height="0.9" fill="#8c8c8c" opacity="0.41"/><rect x="2.2" y="86.5" width="3.21" height="0.9" fill="#8c8c8c" opacity="0.48"/><rect x="12.5" y="86.5" width="3.29" height="0.9" fill="#8c8c8c" opacity="0.42"/><rect x="22.6" y="86.5" width="7.98" height="0.9" fill="#8c8c8c" opacity="0.44"/><rect x="35.5" y="86.5" width="7.15" height="0.9" fill="#8c8c8c" opacity="0.52"/><rect x="50.7" y="86.5" width="5.3" height="0.9" fill="#8c8c8c" opacity="0.37"/><rect x="61.53" y="86.5" width="5.97" height="0.9" fill="#8c8c8c" opacity="0.31"/><rect x="74.12" y="86.5" width="3.68" height="0.9" fill="#8c8c8c" opacity="0.5"/></svg></div><div class="lbl" style="left:16px;top:370px">Commercial</div><div class="th" style="left:166px;top:275px"><svg width="80" height="90" viewBox="0 0 80 90" shape-rendering="auto"><rect x="1" y="1" width="78" height="88" fill="#ffffff"/><text x="2.2" y="4.5" font-size="2.6" font-family="Liberation Sans" fill="#5a5a5a" opacity="0.85">Report Title</text><rect x="72.3" y="3.3" width="5.5" height="1.2" fill="#8c8c8c" opacity="0.45"/><rect x="4.4" y="7.6499999999999995" width="5.2" height="1.1" fill="#8c8c8c" opacity="0.35"/><rect x="4.4" y="12.25" width="5.2" height="1.1" fill="#8c8c8c" opacity="0.35"/><rect x="4.4" y="17.15" width="5.2" height="1.1" fill="#8c8c8c" opacity="0.35"/><rect x="4.4" y="21.95" width="5.2" height="1.1" fill="#8c8c8c" opacity="0.35"/><rect x="4.4" y="26.849999999999998" width="5.2" height="1.1" fill="#8c8c8c" opacity="0.35"/><rect x="4.4" y="31.749999999999996" width="5.2" height="1.1" fill="#8c8c8c" opacity="0.35"/><rect x="8.4" y="36.650000000000006" width="1.2" height="1.1" fill="#8c8c8c" opacity="0.45"/><rect x="13.5" y="30.1" width="5.5" height="6.9" fill="#4c6ce6"/><rect x="20.9" y="18.1" width="5.3" height="18.9" fill="#18b5d2"/><rect x="28" y="33.8" width="5.6" height="3.2" fill="#8c44c6"/><rect x="35" y="18.2" width="5.7" height="18.8" fill="#f7921e"/><rect x="48" y="29" width="5.2" height="8" fill="#4c6ce6"/><rect x="55" y="25.1" width="5.3" height="11.9" fill="#18b5d2"/><rect x="62.2" y="32.8" width="5.5" height="4.2" fill="#8c44c6"/><rect x="69.4" y="13" width="5.6" height="24" fill="#f7921e"/><rect x="26" y="38.1" width="2" height="0.9" fill="#8c8c8c" opacity="0.5"/><rect x="60.3" y="38.1" width="2.2" height="0.9" fill="#8c8c8c" opacity="0.5"/><rect x="29" y="42.0" width="1.8" height="1.4" fill="#4c6ce6"/><rect x="31.2" y="42.3" width="2.4" height="0.9" fill="#8c8c8c" opacity="0.4"/><rect x="35.1" y="42.0" width="1.8" height="1.4" fill="#18b5d2"/><rect x="37.300000000000004" y="42.3" width="2.4" height="0.9" fill="#8c8c8c" opacity="0.4"/><rect x="41" y="42.0" width="1.8" height="1.4" fill="#8c44c6"/><rect x="43.2" y="42.3" width="2.4" height="0.9" fill="#8c8c8c" opacity="0.4"/><rect x="47" y="42.0" width="1.8" height="1.4" fill="#f7921e"/><rect x="49.2" y="42.3" width="2.4" height="0.9" fill="#8c8c8c" opacity="0.4"/><rect x="2.2" y="46.1" width="7" height="1" fill="#8c8c8c" opacity="0.55"/><rect x="12.5" y="46.1" width="4.8" height="1" fill="#8c8c8c" opacity="0.55"/><rect x="22.6" y="46.1" width="9.5" height="1" fill="#8c8c8c" opacity="0.55"/><rect x="35.5" y="46.1" width="10" height="1" fill="#8c8c8c" opacity="0.55"/><rect x="48" y="46.1" width="8" height="1" fill="#8c8c8c" opacity="0.55"/><rect x="61" y="46.1" width="6.5" height="1" fill="#8c8c8c" opacity="0.55"/><rect x="71.8" y="46.1" width="6" height="1" fill="#8c8c8c" opacity="0.55"/><rect x="2" y="48.6" width="76" height="0.6" fill="#dce4f4"/><rect x="2" y="52.1" width="76" height="0.6" fill="#dce4f4"/><rect x="2" y="55.6" width="76" height="0.6" fill="#dce4f4"/><rect x="2" y="59.1" width="76" height="0.6" fill="#dce4f4"/><rect x="2" y="62.6" width="76" height="0.6" fill="#dce4f4"/><rect x="2" y="66.1" width="76" height="0.6" fill="#dce4f4"/><rect x="2" y="69.6" width="76" height="0.6" fill="#dce4f4"/><rect x="2" y="73.1" width="76" height="0.6" fill="#dce4f4"/><rect x="2" y="76.6" width="76" height="0.6" fill="#dce4f4"/><rect x="2" y="80.1" width="76" height="0.6" fill="#dce4f4"/><rect x="2" y="83.6" width="76" height="0.6" fill="#dce4f4"/><rect x="2" y="87.1" width="76" height="0.6" fill="#dce4f4"/><rect x="2.2" y="48" width="5.55" height="0.9" fill="#8c8c8c" opacity="0.47"/><rect x="12.5" y="48" width="4.26" height="0.9" fill="#8c8c8c" opacity="0.53"/><rect x="22.6" y="48" width="8.14" height="0.9" fill="#8c8c8c" opacity="0.53"/><rect x="35.5" y="48" width="4.66" height="0.9" fill="#8c8c8c" opacity="0.39"/><rect x="48.25" y="48" width="7.75" height="0.9" fill="#8c8c8c" opacity="0.44"/><rect x="61.35" y="48" width="6.15" height="0.9" fill="#8c8c8c" opacity="0.28"/><rect x="73.55" y="48" width="4.25" height="0.9" fill="#8c8c8c" opacity="0.32"/><rect x="2.2" y="49.75" width="5.24" height="0.9" fill="#8c8c8c" opacity="0.42"/><rect x="12.5" y="49.75" width="2.19" height="0.9" fill="#8c8c8c" opacity="0.32"/><rect x="22.6" y="49.75" width="5.74" height="0.9" fill="#8c8c8c" opacity="0.52"/><rect x="35.5" y="49.75" width="8.71" height="0.9" fill="#8c8c8c" opacity="0.3"/><rect x="48.89" y="49.75" width="7.11" height="0.9" fill="#8c8c8c" opacity="0.29"/><rect x="62.37" y="49.75" width="5.13" height="0.9" fill="#8c8c8c" opacity="0.29"/><rect x="75.09" y="49.75" width="2.71" height="0.9" fill="#8c8c8c" opacity="0.51"/><rect x="2.2" y="51.5" width="3.96" height="0.9" fill="#8c8c8c" opacity="0.31"/><rect x="12.5" y="51.5" width="4.75" height="0.9" fill="#8c8c8c" opacity="0.51"/><rect x="22.6" y="51.5" width="5.79" height="0.9" fill="#8c8c8c" opacity="0.54"/><rect x="35.5" y="51.5" width="7.47" height="0.9" fill="#8c8c8c" opacity="0.45"/><rect x="51.5" y="51.5" width="4.5" height="0.9" fill="#8c8c8c" opacity="0.53"/><rect x="62.11" y="51.5" width="5.39" height="0.9" fill="#8c8c8c" opacity="0.54"/><rect x="72.15" y="51.5" width="5.65" height="0.9" fill="#8c8c8c" opacity="0.34"/><rect x="2.2" y="53.25" width="4.54" height="0.9" fill="#8c8c8c" opacity="0.3"/><rect x="12.5" y="53.25" width="2.54" height="0.9" fill="#8c8c8c" opacity="0.27"/><rect x="22.6" y="53.25" width="5.85" height="0.9" fill="#8c8c8c" opacity="0.43"/><rect x="35.5" y="53.25" width="4.52" height="0.9" fill="#8c8c8c" opacity="0.45"/><rect x="50.91" y="53.25" width="5.09" height="0.9" fill="#8c8c8c" opacity="0.34"/><rect x="61.65" y="53.25" width="5.85" height="0.9" fill="#8c8c8c" opacity="0.39"/><rect x="74.06" y="53.25" width="3.74" height="0.9" fill="#8c8c8c" opacity="0.39"/><rect x="2.2" y="55" width="5.86" height="0.9" fill="#8c8c8c" opacity="0.27"/><rect x="12.5" y="55" width="4.73" height="0.9" fill="#8c8c8c" opacity="0.26"/><rect x="22.6" y="55" width="8.19" height="0.9" fill="#8c8c8c" opacity="0.5"/><rect x="35.5" y="55" width="4.6" height="0.9" fill="#8c8c8c" opacity="0.49"/><rect x="50.79" y="55" width="5.21" height="0.9" fill="#8c8c8c" opacity="0.42"/><rect x="64.54" y="55" width="2.96" height="0.9" fill="#8c8c8c" opacity="0.26"/><rect x="74.5" y="55" width="3.3" height="0.9" fill="#8c8c8c" opacity="0.54"/><rect x="2.2" y="56.75" width="3.91" height="0.9" fill="#8c8c8c" opacity="0.48"/><rect x="12.5" y="56.75" width="4.61" height="0.9" fill="#8c8c8c" opacity="0.53"/><rect x="22.6" y="56.75" width="6.07" height="0.9" fill="#8c8c8c" opacity="0.36"/><rect x="35.5" y="56.75" width="7.39" height="0.9" fill="#8c8c8c" opacity="0.48"/><rect x="51.92" y="56.75" width="4.08" height="0.9" fill="#8c8c8c" opacity="0.47"/><rect x="61.72" y="56.75" width="5.78" height="0.9" fill="#8c8c8c" opacity="0.51"/><rect x="74.98" y="56.75" width="2.82" height="0.9" fill="#8c8c8c" opacity="0.53"/><rect x="2.2" y="58.5" width="3.5" height="0.9" fill="#8c8c8c" opacity="0.35"/><rect x="12.5" y="58.5" width="3.77" height="0.9" fill="#8c8c8c" opacity="0.53"/><rect x="22.6" y="58.5" width="6.05" height="0.9" fill="#8c8c8c" opacity="0.53"/><rect x="35.5" y="58.5" width="7.5" height="0.9" fill="#8c8c8c" opacity="0.34"/><rect x="51.01" y="58.5" width="4.99" height="0.9" fill="#8c8c8c" opacity="0.3"/><rect x="64.3" y="58.5" width="3.2" height="0.9" fill="#8c8c8c" opacity="0.29"/><rect x="72.83" y="58.5" width="4.97" height="0.9" fill="#8c8c8c" opacity="0.55"/><rect x="2.2" y="60.25" width="3.77" height="0.9" fill="#8c8c8c" opacity="0.26"/><rect x="12.5" y="60.25" width="4.76" height="0.9" fill="#8c8c8c" opacity="0.41"/><rect x="22.6" y="60.25" width="6.4" height="0.9" fill="#8c8c8c" opacity="0.32"/><rect x="35.5" y="60.25" width="7.77" height="0.9" fill="#8c8c8c" opacity="0.5"/><rect x="50.4" y="60.25" width="5.6" height="0.9" fill="#8c8c8c" opacity="0.38"/><rect x="64.38" y="60.25" width="3.12" height="0.9" fill="#8c8c8c" opacity="0.52"/><rect x="74.99" y="60.25" width="2.81" height="0.9" fill="#8c8c8c" opacity="0.4"/><rect x="2.2" y="62" width="6.38" height="0.9" fill="#8c8c8c" opacity="0.29"/><rect x="12.5" y="62" width="4.09" height="0.9" fill="#8c8c8c" opacity="0.53"/><rect x="22.6" y="62" width="7.57" height="0.9" fill="#8c8c8c" opacity="0.49"/><rect x="35.5" y="62" width="5.09" height="0.9" fill="#8c8c8c" opacity="0.38"/><rect x="51.74" y="62" width="4.26" height="0.9" fill="#8c8c8c" opacity="0.5"/><rect x="63.52" y="62" width="3.98" height="0.9" fill="#8c8c8c" opacity="0.39"/><rect x="71.8" y="62" width="6" height="0.9" fill="#8c8c8c" opacity="0.51"/><rect x="2.2" y="63.75" width="6.91" height="0.9" fill="#8c8c8c" opacity="0.39"/><rect x="12.5" y="63.75" width="3.45" height="0.9" fill="#8c8c8c" opacity="0.47"/><rect x="22.6" y="63.75" width="6.78" height="0.9" fill="#8c8c8c" opacity="0.34"/><rect x="35.5" y="63.75" width="6.72" height="0.9" fill="#8c8c8c" opacity="0.29"/><rect x="50.74" y="63.75" width="5.26" height="0.9" fill="#8c8c8c" opacity="0.55"/><rect x="61.14" y="63.75" width="6.36" height="0.9" fill="#8c8c8c" opacity="0.44"/><rect x="73.45" y="63.75" width="4.35" height="0.9" fill="#8c8c8c" opacity="0.35"/><rect x="2.2" y="65.5" width="3.49" height="0.9" fill="#8c8c8c" opacity="0.33"/><rect x="12.5" y="65.5" width="4.22" height="0.9" fill="#8c8c8c" opacity="0.51"/><rect x="22.6" y="65.5" width="6.16" height="0.9" fill="#8c8c8c" opacity="0.49"/><rect x="35.5" y="65.5" width="8.76" height="0.9" fill="#8c8c8c" opacity="0.46"/><rect x="49.48" y="65.5" width="6.52" height="0.9" fill="#8c8c8c" opacity="0.48"/><rect x="63.28" y="65.5" width="4.22" height="0.9" fill="#8c8c8c" opacity="0.46"/><rect x="74.17" y="65.5" width="3.63" height="0.9" fill="#8c8c8c" opacity="0.4"/><rect x="2.2" y="67.25" width="6.11" height="0.9" fill="#8c8c8c" opacity="0.46"/><rect x="12.5" y="67.25" width="2.94" height="0.9" fill="#8c8c8c" opacity="0.53"/><rect x="22.6" y="67.25" width="7.67" height="0.9" fill="#8c8c8c" opacity="0.42"/><rect x="35.5" y="67.25" width="4.56" height="0.9" fill="#8c8c8c" opacity="0.41"/><rect x="51.3" y="67.25" width="4.7" height="0.9" fill="#8c8c8c" opacity="0.45"/><rect x="62.92" y="67.25" width="4.58" height="0.9" fill="#8c8c8c" opacity="0.5"/><rect x="72.96" y="67.25" width="4.84" height="0.9" fill="#8c8c8c" opacity="0.49"/><rect x="2.2" y="69" width="4.49" height="0.9" fill="#8c8c8c" opacity="0.44"/><rect x="12.5" y="69" width="4.11" height="0.9" fill="#8c8c8c" opacity="0.5"/><rect x="22.6" y="69" width="6.1" height="0.9" fill="#8c8c8c" opacity="0.5"/><rect x="35.5" y="69" width="9.28" height="0.9" fill="#8c8c8c" opacity="0.46"/><rect x="48.11" y="69" width="7.89" height="0.9" fill="#8c8c8c" opacity="0.54"/><rect x="62.72" y="69" width="4.78" height="0.9" fill="#8c8c8c" opacity="0.41"/><rect x="74.55" y="69" width="3.25" height="0.9" fill="#8c8c8c" opacity="0.5"/><rect x="2.2" y="70.75" width="6.76" height="0.9" fill="#8c8c8c" opacity="0.39"/><rect x="12.5" y="70.75" width="3.99" height="0.9" fill="#8c8c8c" opacity="0.47"/><rect x="22.6" y="70.75" width="8.09" height="0.9" fill="#8c8c8c" opacity="0.3"/><rect x="35.5" y="70.75" width="8.79" height="0.9" fill="#8c8c8c" opacity="0.42"/><rect x="49.47" y="70.75" width="6.53" height="0.9" fill="#8c8c8c" opacity="0.38"/><rect x="62.35" y="70.75" width="5.15" height="0.9" fill="#8c8c8c" opacity="0.48"/><rect x="73" y="70.75" width="4.8" height="0.9" fill="#8c8c8c" opacity="0.47"/><rect x="2.2" y="72.5" width="3.26" height="0.9" fill="#8c8c8c" opacity="0.3"/><rect x="12.5" y="72.5" width="3.32" height="0.9" fill="#8c8c8c" opacity="0.45"/><rect x="22.6" y="72.5" width="5.42" height="0.9" fill="#8c8c8c" opacity="0.46"/><rect x="35.5" y="72.5" width="7.97" height="0.9" fill="#8c8c8c" opacity="0.26"/><rect x="50.33" y="72.5" width="5.67" height="0.9" fill="#8c8c8c" opacity="0.32"/><rect x="64.38" y="72.5" width="3.12" height="0.9" fill="#8c8c8c" opacity="0.29"/><rect x="74.05" y="72.5" width="3.75" height="0.9" fill="#8c8c8c" opacity="0.3"/><rect x="2.2" y="74.25" width="3.89" height="0.9" fill="#8c8c8c" opacity="0.26"/><rect x="12.5" y="74.25" width="3.39" height="0.9" fill="#8c8c8c" opacity="0.36"/><rect x="22.6" y="74.25" width="7.47" height="0.9" fill="#8c8c8c" opacity="0.43"/><rect x="35.5" y="74.25" width="5.81" height="0.9" fill="#8c8c8c" opacity="0.52"/><rect x="52.4" y="74.25" width="3.6" height="0.9" fill="#8c8c8c" opacity="0.37"/><rect x="63.58" y="74.25" width="3.92" height="0.9" fill="#8c8c8c" opacity="0.37"/><rect x="74.72" y="74.25" width="3.08" height="0.9" fill="#8c8c8c" opacity="0.5"/><rect x="2.2" y="76" width="4.59" height="0.9" fill="#8c8c8c" opacity="0.26"/><rect x="12.5" y="76" width="3.78" height="0.9" fill="#8c8c8c" opacity="0.28"/><rect x="22.6" y="76" width="7.12" height="0.9" fill="#8c8c8c" opacity="0.35"/><rect x="35.5" y="76" width="7.69" height="0.9" fill="#8c8c8c" opacity="0.54"/><rect x="48.8" y="76" width="7.2" height="0.9" fill="#8c8c8c" opacity="0.38"/><rect x="61.67" y="76" width="5.83" height="0.9" fill="#8c8c8c" opacity="0.44"/><rect x="73.88" y="76" width="3.92" height="0.9" fill="#8c8c8c" opacity="0.29"/><rect x="2.2" y="77.75" width="5.44" height="0.9" fill="#8c8c8c" opacity="0.42"/><rect x="12.5" y="77.75" width="4.69" height="0.9" fill="#8c8c8c" opacity="0.54"/><rect x="22.6" y="77.75" width="7.45" height="0.9" fill="#8c8c8c" opacity="0.36"/><rect x="35.5" y="77.75" width="9.41" height="0.9" fill="#8c8c8c" opacity="0.25"/><rect x="51.93" y="77.75" width="4.07" height="0.9" fill="#8c8c8c" opacity="0.42"/><rect x="62.38" y="77.75" width="5.12" height="0.9" fill="#8c8c8c" opacity="0.29"/><rect x="73.02" y="77.75" width="4.78" height="0.9" fill="#8c8c8c" opacity="0.52"/><rect x="2.2" y="79.5" width="4.6" height="0.9" fill="#8c8c8c" opacity="0.38"/><rect x="12.5" y="79.5" width="2.76" height="0.9" fill="#8c8c8c" opacity="0.34"/><rect x="22.6" y="79.5" width="9.36" height="0.9" fill="#8c8c8c" opacity="0.36"/><rect x="35.5" y="79.5" width="9.79" height="0.9" fill="#8c8c8c" opacity="0.52"/><rect x="49.78" y="79.5" width="6.22" height="0.9" fill="#8c8c8c" opacity="0.33"/><rect x="61.07" y="79.5" width="6.43" height="0.9" fill="#8c8c8c" opacity="0.4"/><rect x="73.73" y="79.5" width="4.07" height="0.9" fill="#8c8c8c" opacity="0.35"/><rect x="2.2" y="81.25" width="6.94" height="0.9" fill="#8c8c8c" opacity="0.4"/><rect x="12.5" y="81.25" width="2.92" height="0.9" fill="#8c8c8c" opacity="0.39"/><rect x="22.6" y="81.25" width="4.91" height="0.9" fill="#8c8c8c" opacity="0.44"/><rect x="35.5" y="81.25" width="6.94" height="0.9" fill="#8c8c8c" opacity="0.34"/><rect x="48.96" y="81.25" width="7.04" height="0.9" fill="#8c8c8c" opacity="0.5"/><rect x="64.53" y="81.25" width="2.97" height="0.9" fill="#8c8c8c" opacity="0.41"/><rect x="74.2" y="81.25" width="3.6" height="0.9" fill="#8c8c8c" opacity="0.53"/><rect x="2.2" y="83" width="6.16" height="0.9" fill="#8c8c8c" opacity="0.32"/><rect x="12.5" y="83" width="2.87" height="0.9" fill="#8c8c8c" opacity="0.3"/><rect x="22.6" y="83" width="9.44" height="0.9" fill="#8c8c8c" opacity="0.34"/><rect x="35.5" y="83" width="7.84" height="0.9" fill="#8c8c8c" opacity="0.39"/><rect x="49.56" y="83" width="6.44" height="0.9" fill="#8c8c8c" opacity="0.43"/><rect x="61.92" y="83" width="5.58" height="0.9" fill="#8c8c8c" opacity="0.29"/><rect x="72.59" y="83" width="5.21" height="0.9" fill="#8c8c8c" opacity="0.34"/><rect x="2.2" y="84.75" width="5.2" height="0.9" fill="#8c8c8c" opacity="0.35"/><rect x="12.5" y="84.75" width="2.94" height="0.9" fill="#8c8c8c" opacity="0.41"/><rect x="22.6" y="84.75" width="6.7" height="0.9" fill="#8c8c8c" opacity="0.36"/><rect x="35.5" y="84.75" width="8.6" height="0.9" fill="#8c8c8c" opacity="0.43"/><rect x="52.24" y="84.75" width="3.76" height="0.9" fill="#8c8c8c" opacity="0.33"/><rect x="62.95" y="84.75" width="4.55" height="0.9" fill="#8c8c8c" opacity="0.52"/><rect x="72.17" y="84.75" width="5.63" height="0.9" fill="#8c8c8c" opacity="0.41"/><rect x="2.2" y="86.5" width="3.21" height="0.9" fill="#8c8c8c" opacity="0.48"/><rect x="12.5" y="86.5" width="3.29" height="0.9" fill="#8c8c8c" opacity="0.42"/><rect x="22.6" y="86.5" width="7.98" height="0.9" fill="#8c8c8c" opacity="0.44"/><rect x="35.5" y="86.5" width="7.15" height="0.9" fill="#8c8c8c" opacity="0.52"/><rect x="50.7" y="86.5" width="5.3" height="0.9" fill="#8c8c8c" opacity="0.37"/><rect x="61.53" y="86.5" width="5.97" height="0.9" fill="#8c8c8c" opacity="0.31"/><rect x="74.12" y="86.5" width="3.68" height="0.9" fill="#8c8c8c" opacity="0.5"/></svg></div><div class="lbl" style="left:136px;top:370px">Cool</div><div class="th sel" style="left:286px;top:275px"><svg width="80" height="90" viewBox="0 0 80 90" shape-rendering="auto"><rect x="1" y="1" width="78" height="88" fill="#ffffff"/><text x="2.2" y="4.5" font-size="2.6" font-family="Liberation Sans" fill="#5a5a5a" opacity="0.85">Report Title</text><rect x="72.3" y="3.3" width="5.5" height="1.2" fill="#8c8c8c" opacity="0.45"/><rect x="4" y="7.6499999999999995" width="5.2" height="1.1" fill="#8c8c8c" opacity="0.35"/><rect x="4" y="12.25" width="5.2" height="1.1" fill="#8c8c8c" opacity="0.35"/><rect x="4" y="17.15" width="5.2" height="1.1" fill="#8c8c8c" opacity="0.35"/><rect x="4" y="21.95" width="5.2" height="1.1" fill="#8c8c8c" opacity="0.35"/><rect x="4" y="26.849999999999998" width="5.2" height="1.1" fill="#8c8c8c" opacity="0.35"/><rect x="4" y="31.749999999999996" width="5.2" height="1.1" fill="#8c8c8c" opacity="0.35"/><rect x="8.4" y="36.650000000000006" width="1.2" height="1.1" fill="#8c8c8c" opacity="0.45"/><rect x="10" y="7.0" width="67" height="1" fill="#9a9a9a"/><rect x="10" y="11.9" width="67" height="1" fill="#9a9a9a"/><rect x="10" y="17.0" width="67" height="1" fill="#9a9a9a"/><rect x="10" y="21.9" width="67" height="1" fill="#9a9a9a"/><rect x="10" y="26.9" width="67" height="1" fill="#9a9a9a"/><rect x="10" y="31.9" width="67" height="1" fill="#9a9a9a"/><rect x="10" y="37.7" width="67" height="1" fill="#9a9a9a"/><rect x="9.7" y="6.1" width="1" height="32.5" fill="#8a8a8a"/><rect x="12.9" y="30" width="6.1" height="7.9" fill="#1596b8"/><rect x="21.1" y="18" width="5.8" height="19.9" fill="#e8bc5e"/><rect x="28.1" y="32.2" width="5.9" height="5.7" fill="#6aab7a"/><rect x="35.2" y="18" width="5.8" height="19.9" fill="#0a7ab8"/><rect x="47.1" y="29.1" width="5.9" height="8.8" fill="#1596b8"/><rect x="55" y="25.1" width="5.9" height="12.8" fill="#e8bc5e"/><rect x="62.2" y="32.2" width="5.6" height="5.7" fill="#6aab7a"/><rect x="69.2" y="12.2" width="5.8" height="25.7" fill="#0a7ab8"/><rect x="29" y="42.3" width="1.8" height="1.4" fill="#1596b8"/><rect x="31.2" y="42.599999999999994" width="2.4" height="0.9" fill="#8c8c8c" opacity="0.4"/><rect x="35.1" y="42.3" width="1.8" height="1.4" fill="#e8bc5e"/><rect x="37.300000000000004" y="42.599999999999994" width="2.4" height="0.9" fill="#8c8c8c" opacity="0.4"/><rect x="41" y="42.3" width="1.8" height="1.4" fill="#6aab7a"/><rect x="43.2" y="42.599999999999994" width="2.4" height="0.9" fill="#8c8c8c" opacity="0.4"/><rect x="47" y="42.3" width="1.8" height="1.4" fill="#0a7ab8"/><rect x="49.2" y="42.599999999999994" width="2.4" height="0.9" fill="#8c8c8c" opacity="0.4"/><rect x="2.3" y="45.6" width="75" height="42" fill="none" stroke="#b8b8b8" stroke-width="0.5"/><rect x="2.3" y="48" width="75" height="0.5" fill="#c0c0c0"/><rect x="12.5" y="45.6" width="0.4" height="42" fill="#dcdcdc"/><rect x="22.9" y="45.6" width="0.4" height="42" fill="#dcdcdc"/><rect x="36.1" y="45.6" width="0.4" height="42" fill="#dcdcdc"/><rect x="55.4" y="45.6" width="0.4" height="42" fill="#dcdcdc"/><rect x="66.9" y="45.6" width="0.4" height="42" fill="#dcdcdc"/><rect x="2.5" y="51.55" width="74.5" height="0.35" fill="#e4e4e4"/><rect x="2.5" y="55.05" width="74.5" height="0.35" fill="#e4e4e4"/><rect x="2.5" y="58.55" width="74.5" height="0.35" fill="#e4e4e4"/><rect x="2.5" y="62.05" width="74.5" height="0.35" fill="#e4e4e4"/><rect x="2.5" y="65.55" width="74.5" height="0.35" fill="#e4e4e4"/><rect x="2.5" y="69.05" width="74.5" height="0.35" fill="#e4e4e4"/><rect x="2.5" y="72.55" width="74.5" height="0.35" fill="#e4e4e4"/><rect x="2.5" y="76.05" width="74.5" height="0.35" fill="#e4e4e4"/><rect x="2.5" y="79.55" width="74.5" height="0.35" fill="#e4e4e4"/><rect x="2.5" y="83.05" width="74.5" height="0.35" fill="#e4e4e4"/><rect x="2.5" y="86.55" width="74.5" height="0.35" fill="#e4e4e4"/><rect x="3" y="46.3" width="6.5" height="1" fill="#8c8c8c" opacity="0.6"/><rect x="13.5" y="46.3" width="5" height="1" fill="#8c8c8c" opacity="0.6"/><rect x="23.5" y="46.3" width="9" height="1" fill="#8c8c8c" opacity="0.6"/><rect x="37" y="46.3" width="7" height="1" fill="#8c8c8c" opacity="0.6"/><rect x="48.5" y="46.3" width="7" height="1" fill="#8c8c8c" opacity="0.6"/><rect x="57" y="46.3" width="7" height="1" fill="#8c8c8c" opacity="0.6"/><rect x="68" y="46.3" width="8" height="1" fill="#8c8c8c" opacity="0.6"/><rect x="3" y="49.2" width="5.03" height="0.9" fill="#8c8c8c" opacity="0.44"/><rect x="13.5" y="49.2" width="4.39" height="0.9" fill="#8c8c8c" opacity="0.49"/><rect x="23.5" y="49.2" width="7.6" height="0.9" fill="#8c8c8c" opacity="0.48"/><rect x="37" y="49.2" width="2.92" height="0.9" fill="#8c8c8c" opacity="0.37"/><rect x="48.74" y="49.2" width="6.76" height="0.9" fill="#8c8c8c" opacity="0.41"/><rect x="57.42" y="49.2" width="6.58" height="0.9" fill="#8c8c8c" opacity="0.28"/><rect x="70.55" y="49.2" width="5.45" height="0.9" fill="#8c8c8c" opacity="0.31"/><rect x="3" y="50.95" width="4.72" height="0.9" fill="#8c8c8c" opacity="0.39"/><rect x="13.5" y="50.95" width="2.04" height="0.9" fill="#8c8c8c" opacity="0.3"/><rect x="23.5" y="50.95" width="5.11" height="0.9" fill="#8c8c8c" opacity="0.48"/><rect x="37" y="50.95" width="6.02" height="0.9" fill="#8c8c8c" opacity="0.29"/><rect x="49.35" y="50.95" width="6.15" height="0.9" fill="#8c8c8c" opacity="0.28"/><rect x="58.61" y="50.95" width="5.39" height="0.9" fill="#8c8c8c" opacity="0.28"/><rect x="72.79" y="50.95" width="3.21" height="0.9" fill="#8c8c8c" opacity="0.47"/><rect x="3" y="52.7" width="3.42" height="0.9" fill="#8c8c8c" opacity="0.3"/><rect x="13.5" y="52.7" width="4.95" height="0.9" fill="#8c8c8c" opacity="0.47"/><rect x="23.5" y="52.7" width="5.16" height="0.9" fill="#8c8c8c" opacity="0.49"/><rect x="37" y="52.7" width="5.06" height="0.9" fill="#8c8c8c" opacity="0.42"/><rect x="51.84" y="52.7" width="3.66" height="0.9" fill="#8c8c8c" opacity="0.49"/><rect x="58.3" y="52.7" width="5.7" height="0.9" fill="#8c8c8c" opacity="0.49"/><rect x="68.51" y="52.7" width="7.49" height="0.9" fill="#8c8c8c" opacity="0.32"/><rect x="3" y="54.45" width="4.01" height="0.9" fill="#8c8c8c" opacity="0.29"/><rect x="13.5" y="54.45" width="2.44" height="0.9" fill="#8c8c8c" opacity="0.27"/><rect x="23.5" y="54.45" width="5.23" height="0.9" fill="#8c8c8c" opacity="0.4"/><rect x="37" y="54.45" width="2.81" height="0.9" fill="#8c8c8c" opacity="0.42"/><rect x="51.28" y="54.45" width="4.22" height="0.9" fill="#8c8c8c" opacity="0.33"/><rect x="57.76" y="54.45" width="6.24" height="0.9" fill="#8c8c8c" opacity="0.37"/><rect x="71.28" y="54.45" width="4.72" height="0.9" fill="#8c8c8c" opacity="0.37"/><rect x="3" y="56.2" width="5.35" height="0.9" fill="#8c8c8c" opacity="0.26"/><rect x="13.5" y="56.2" width="4.93" height="0.9" fill="#8c8c8c" opacity="0.26"/><rect x="23.5" y="56.2" width="7.65" height="0.9" fill="#8c8c8c" opacity="0.46"/><rect x="37" y="56.2" width="2.88" height="0.9" fill="#8c8c8c" opacity="0.45"/><rect x="51.16" y="56.2" width="4.34" height="0.9" fill="#8c8c8c" opacity="0.39"/><rect x="61.16" y="56.2" width="2.84" height="0.9" fill="#8c8c8c" opacity="0.26"/><rect x="71.93" y="56.2" width="4.07" height="0.9" fill="#8c8c8c" opacity="0.49"/><rect x="3" y="57.95" width="3.37" height="0.9" fill="#8c8c8c" opacity="0.44"/><rect x="13.5" y="57.95" width="4.79" height="0.9" fill="#8c8c8c" opacity="0.49"/><rect x="23.5" y="57.95" width="5.46" height="0.9" fill="#8c8c8c" opacity="0.34"/><rect x="37" y="57.95" width="5" height="0.9" fill="#8c8c8c" opacity="0.44"/><rect x="52.25" y="57.95" width="3.25" height="0.9" fill="#8c8c8c" opacity="0.44"/><rect x="57.85" y="57.95" width="6.15" height="0.9" fill="#8c8c8c" opacity="0.46"/><rect x="72.62" y="57.95" width="3.38" height="0.9" fill="#8c8c8c" opacity="0.49"/><rect x="3" y="59.7" width="2.96" height="0.9" fill="#8c8c8c" opacity="0.34"/><rect x="13.5" y="59.7" width="3.83" height="0.9" fill="#8c8c8c" opacity="0.48"/><rect x="23.5" y="59.7" width="5.44" height="0.9" fill="#8c8c8c" opacity="0.48"/><rect x="37" y="59.7" width="5.09" height="0.9" fill="#8c8c8c" opacity="0.33"/><rect x="51.37" y="59.7" width="4.13" height="0.9" fill="#8c8c8c" opacity="0.29"/><rect x="60.87" y="59.7" width="3.13" height="0.9" fill="#8c8c8c" opacity="0.29"/><rect x="69.49" y="59.7" width="6.51" height="0.9" fill="#8c8c8c" opacity="0.5"/><rect x="3" y="61.45" width="3.23" height="0.9" fill="#8c8c8c" opacity="0.26"/><rect x="13.5" y="61.45" width="4.96" height="0.9" fill="#8c8c8c" opacity="0.38"/><rect x="23.5" y="61.45" width="5.79" height="0.9" fill="#8c8c8c" opacity="0.31"/><rect x="37" y="61.45" width="5.29" height="0.9" fill="#8c8c8c" opacity="0.46"/><rect x="50.79" y="61.45" width="4.71" height="0.9" fill="#8c8c8c" opacity="0.36"/><rect x="60.97" y="61.45" width="3.03" height="0.9" fill="#8c8c8c" opacity="0.48"/><rect x="72.64" y="61.45" width="3.36" height="0.9" fill="#8c8c8c" opacity="0.37"/><rect x="3" y="63.2" width="5.87" height="0.9" fill="#8c8c8c" opacity="0.28"/><rect x="13.5" y="63.2" width="4.19" height="0.9" fill="#8c8c8c" opacity="0.49"/><rect x="23.5" y="63.2" width="7" height="0.9" fill="#8c8c8c" opacity="0.45"/><rect x="37" y="63.2" width="3.25" height="0.9" fill="#8c8c8c" opacity="0.36"/><rect x="52.07" y="63.2" width="3.43" height="0.9" fill="#8c8c8c" opacity="0.46"/><rect x="59.96" y="63.2" width="4.04" height="0.9" fill="#8c8c8c" opacity="0.36"/><rect x="68" y="63.2" width="8" height="0.9" fill="#8c8c8c" opacity="0.46"/><rect x="3" y="64.95" width="6.41" height="0.9" fill="#8c8c8c" opacity="0.36"/><rect x="13.5" y="64.95" width="3.46" height="0.9" fill="#8c8c8c" opacity="0.43"/><rect x="23.5" y="64.95" width="6.19" height="0.9" fill="#8c8c8c" opacity="0.32"/><rect x="37" y="64.95" width="4.5" height="0.9" fill="#8c8c8c" opacity="0.29"/><rect x="51.12" y="64.95" width="4.38" height="0.9" fill="#8c8c8c" opacity="0.5"/><rect x="57.17" y="64.95" width="6.83" height="0.9" fill="#8c8c8c" opacity="0.41"/><rect x="70.4" y="64.95" width="5.6" height="0.9" fill="#8c8c8c" opacity="0.33"/><rect x="3" y="66.7" width="2.95" height="0.9" fill="#8c8c8c" opacity="0.32"/><rect x="13.5" y="66.7" width="4.35" height="0.9" fill="#8c8c8c" opacity="0.47"/><rect x="23.5" y="66.7" width="5.55" height="0.9" fill="#8c8c8c" opacity="0.45"/><rect x="37" y="66.7" width="6.05" height="0.9" fill="#8c8c8c" opacity="0.42"/><rect x="49.91" y="66.7" width="5.59" height="0.9" fill="#8c8c8c" opacity="0.44"/><rect x="59.67" y="66.7" width="4.33" height="0.9" fill="#8c8c8c" opacity="0.43"/><rect x="71.45" y="66.7" width="4.55" height="0.9" fill="#8c8c8c" opacity="0.37"/><rect x="3" y="68.45" width="5.6" height="0.9" fill="#8c8c8c" opacity="0.42"/><rect x="13.5" y="68.45" width="2.88" height="0.9" fill="#8c8c8c" opacity="0.49"/><rect x="23.5" y="68.45" width="7.11" height="0.9" fill="#8c8c8c" opacity="0.4"/><rect x="37" y="68.45" width="2.85" height="0.9" fill="#8c8c8c" opacity="0.39"/><rect x="51.65" y="68.45" width="3.85" height="0.9" fill="#8c8c8c" opacity="0.42"/><rect x="59.26" y="68.45" width="4.74" height="0.9" fill="#8c8c8c" opacity="0.45"/><rect x="69.69" y="68.45" width="6.31" height="0.9" fill="#8c8c8c" opacity="0.45"/><rect x="3" y="70.2" width="3.96" height="0.9" fill="#8c8c8c" opacity="0.41"/><rect x="13.5" y="70.2" width="4.21" height="0.9" fill="#8c8c8c" opacity="0.46"/><rect x="23.5" y="70.2" width="5.49" height="0.9" fill="#8c8c8c" opacity="0.46"/><rect x="37" y="70.2" width="6.45" height="0.9" fill="#8c8c8c" opacity="0.42"/><rect x="48.6" y="70.2" width="6.9" height="0.9" fill="#8c8c8c" opacity="0.49"/><rect x="59.02" y="70.2" width="4.98" height="0.9" fill="#8c8c8c" opacity="0.38"/><rect x="72" y="70.2" width="4" height="0.9" fill="#8c8c8c" opacity="0.46"/><rect x="3" y="71.95" width="6.26" height="0.9" fill="#8c8c8c" opacity="0.37"/><rect x="13.5" y="71.95" width="4.07" height="0.9" fill="#8c8c8c" opacity="0.43"/><rect x="23.5" y="71.95" width="7.54" height="0.9" fill="#8c8c8c" opacity="0.29"/><rect x="37" y="71.95" width="6.08" height="0.9" fill="#8c8c8c" opacity="0.4"/><rect x="49.9" y="71.95" width="5.6" height="0.9" fill="#8c8c8c" opacity="0.36"/><rect x="58.58" y="71.95" width="5.42" height="0.9" fill="#8c8c8c" opacity="0.44"/><rect x="69.74" y="71.95" width="6.26" height="0.9" fill="#8c8c8c" opacity="0.43"/><rect x="3" y="73.7" width="2.71" height="0.9" fill="#8c8c8c" opacity="0.29"/><rect x="13.5" y="73.7" width="3.32" height="0.9" fill="#8c8c8c" opacity="0.41"/><rect x="23.5" y="73.7" width="4.78" height="0.9" fill="#8c8c8c" opacity="0.42"/><rect x="37" y="73.7" width="5.45" height="0.9" fill="#8c8c8c" opacity="0.26"/><rect x="50.72" y="73.7" width="4.78" height="0.9" fill="#8c8c8c" opacity="0.31"/><rect x="60.97" y="73.7" width="3.03" height="0.9" fill="#8c8c8c" opacity="0.28"/><rect x="71.28" y="73.7" width="4.72" height="0.9" fill="#8c8c8c" opacity="0.3"/><rect x="3" y="75.45" width="3.35" height="0.9" fill="#8c8c8c" opacity="0.26"/><rect x="13.5" y="75.45" width="3.4" height="0.9" fill="#8c8c8c" opacity="0.35"/><rect x="23.5" y="75.45" width="6.9" height="0.9" fill="#8c8c8c" opacity="0.4"/><rect x="37" y="75.45" width="3.8" height="0.9" fill="#8c8c8c" opacity="0.48"/><rect x="52.7" y="75.45" width="2.8" height="0.9" fill="#8c8c8c" opacity="0.35"/><rect x="60.03" y="75.45" width="3.97" height="0.9" fill="#8c8c8c" opacity="0.35"/><rect x="72.25" y="75.45" width="3.75" height="0.9" fill="#8c8c8c" opacity="0.46"/><rect x="3" y="77.2" width="4.06" height="0.9" fill="#8c8c8c" opacity="0.26"/><rect x="13.5" y="77.2" width="3.84" height="0.9" fill="#8c8c8c" opacity="0.27"/><rect x="23.5" y="77.2" width="6.54" height="0.9" fill="#8c8c8c" opacity="0.33"/><rect x="37" y="77.2" width="5.24" height="0.9" fill="#8c8c8c" opacity="0.49"/><rect x="49.26" y="77.2" width="6.24" height="0.9" fill="#8c8c8c" opacity="0.35"/><rect x="57.79" y="77.2" width="6.21" height="0.9" fill="#8c8c8c" opacity="0.41"/><rect x="71.03" y="77.2" width="4.97" height="0.9" fill="#8c8c8c" opacity="0.29"/><rect x="3" y="78.95" width="4.92" height="0.9" fill="#8c8c8c" opacity="0.39"/><rect x="13.5" y="78.95" width="4.87" height="0.9" fill="#8c8c8c" opacity="0.49"/><rect x="23.5" y="78.95" width="6.89" height="0.9" fill="#8c8c8c" opacity="0.34"/><rect x="37" y="78.95" width="6.55" height="0.9" fill="#8c8c8c" opacity="0.25"/><rect x="52.25" y="78.95" width="3.25" height="0.9" fill="#8c8c8c" opacity="0.39"/><rect x="58.62" y="78.95" width="5.38" height="0.9" fill="#8c8c8c" opacity="0.29"/><rect x="69.78" y="78.95" width="6.22" height="0.9" fill="#8c8c8c" opacity="0.47"/><rect x="3" y="80.7" width="4.07" height="0.9" fill="#8c8c8c" opacity="0.36"/><rect x="13.5" y="80.7" width="2.68" height="0.9" fill="#8c8c8c" opacity="0.32"/><rect x="23.5" y="80.7" width="8.85" height="0.9" fill="#8c8c8c" opacity="0.34"/><rect x="37" y="80.7" width="6.84" height="0.9" fill="#8c8c8c" opacity="0.48"/><rect x="50.2" y="80.7" width="5.3" height="0.9" fill="#8c8c8c" opacity="0.31"/><rect x="57.08" y="80.7" width="6.92" height="0.9" fill="#8c8c8c" opacity="0.37"/><rect x="70.81" y="80.7" width="5.19" height="0.9" fill="#8c8c8c" opacity="0.33"/><rect x="3" y="82.45" width="6.44" height="0.9" fill="#8c8c8c" opacity="0.37"/><rect x="13.5" y="82.45" width="2.86" height="0.9" fill="#8c8c8c" opacity="0.37"/><rect x="23.5" y="82.45" width="4.26" height="0.9" fill="#8c8c8c" opacity="0.41"/><rect x="37" y="82.45" width="4.66" height="0.9" fill="#8c8c8c" opacity="0.32"/><rect x="49.42" y="82.45" width="6.08" height="0.9" fill="#8c8c8c" opacity="0.46"/><rect x="61.14" y="82.45" width="2.86" height="0.9" fill="#8c8c8c" opacity="0.38"/><rect x="71.49" y="82.45" width="4.51" height="0.9" fill="#8c8c8c" opacity="0.48"/><rect x="3" y="84.2" width="5.65" height="0.9" fill="#8c8c8c" opacity="0.31"/><rect x="13.5" y="84.2" width="2.8" height="0.9" fill="#8c8c8c" opacity="0.29"/><rect x="23.5" y="84.2" width="8.94" height="0.9" fill="#8c8c8c" opacity="0.32"/><rect x="37" y="84.2" width="5.35" height="0.9" fill="#8c8c8c" opacity="0.37"/><rect x="49.99" y="84.2" width="5.51" height="0.9" fill="#8c8c8c" opacity="0.4"/><rect x="58.08" y="84.2" width="5.92" height="0.9" fill="#8c8c8c" opacity="0.28"/><rect x="69.15" y="84.2" width="6.85" height="0.9" fill="#8c8c8c" opacity="0.33"/><rect x="3" y="85.95" width="4.68" height="0.9" fill="#8c8c8c" opacity="0.33"/><rect x="13.5" y="85.95" width="2.89" height="0.9" fill="#8c8c8c" opacity="0.38"/><rect x="23.5" y="85.95" width="6.11" height="0.9" fill="#8c8c8c" opacity="0.34"/><rect x="37" y="85.95" width="5.93" height="0.9" fill="#8c8c8c" opacity="0.4"/><rect x="52.55" y="85.95" width="2.95" height="0.9" fill="#8c8c8c" opacity="0.31"/><rect x="59.29" y="85.95" width="4.71" height="0.9" fill="#8c8c8c" opacity="0.48"/><rect x="68.54" y="85.95" width="7.46" height="0.9" fill="#8c8c8c" opacity="0.39"/></svg></div><div class="lbl" style="left:256px;top:370px">DefaultSequential</div><div class="th" style="left:406px;top:275px"><svg width="80" height="90" viewBox="0 0 80 90" shape-rendering="auto"><rect x="1" y="1" width="78" height="88" fill="#ffffff"/><text x="2.2" y="4.5" font-size="2.6" font-family="Liberation Sans" fill="#5a5a5a" opacity="0.85">Report Title</text><rect x="72.3" y="3.3" width="5.5" height="1.2" fill="#8c8c8c" opacity="0.45"/><rect x="4.4" y="7.6499999999999995" width="5.2" height="1.1" fill="#8c8c8c" opacity="0.35"/><rect x="4.4" y="12.25" width="5.2" height="1.1" fill="#8c8c8c" opacity="0.35"/><rect x="4.4" y="17.15" width="5.2" height="1.1" fill="#8c8c8c" opacity="0.35"/><rect x="4.4" y="21.95" width="5.2" height="1.1" fill="#8c8c8c" opacity="0.35"/><rect x="4.4" y="26.849999999999998" width="5.2" height="1.1" fill="#8c8c8c" opacity="0.35"/><rect x="4.4" y="31.749999999999996" width="5.2" height="1.1" fill="#8c8c8c" opacity="0.35"/><rect x="8.4" y="36.650000000000006" width="1.2" height="1.1" fill="#8c8c8c" opacity="0.45"/><rect x="13.5" y="30.1" width="5.5" height="6.9" fill="#16aff0"/><rect x="20.9" y="18.1" width="5.3" height="18.9" fill="#86d8f4"/><rect x="28" y="33.8" width="5.6" height="3.2" fill="#7a6ad6"/><rect x="35" y="18.2" width="5.7" height="18.8" fill="#c6c2f0"/><rect x="48" y="29" width="5.2" height="8" fill="#16aff0"/><rect x="55" y="25.1" width="5.3" height="11.9" fill="#86d8f4"/><rect x="62.2" y="32.8" width="5.5" height="4.2" fill="#7a6ad6"/><rect x="69.4" y="13" width="5.6" height="24" fill="#c6c2f0"/><rect x="26" y="38.1" width="2" height="0.9" fill="#8c8c8c" opacity="0.5"/><rect x="60.3" y="38.1" width="2.2" height="0.9" fill="#8c8c8c" opacity="0.5"/><rect x="29" y="42.0" width="1.8" height="1.4" fill="#16aff0"/><rect x="31.2" y="42.3" width="2.4" height="0.9" fill="#8c8c8c" opacity="0.4"/><rect x="35.1" y="42.0" width="1.8" height="1.4" fill="#86d8f4"/><rect x="37.300000000000004" y="42.3" width="2.4" height="0.9" fill="#8c8c8c" opacity="0.4"/><rect x="41" y="42.0" width="1.8" height="1.4" fill="#7a6ad6"/><rect x="43.2" y="42.3" width="2.4" height="0.9" fill="#8c8c8c" opacity="0.4"/><rect x="47" y="42.0" width="1.8" height="1.4" fill="#c6c2f0"/><rect x="49.2" y="42.3" width="2.4" height="0.9" fill="#8c8c8c" opacity="0.4"/><rect x="2.2" y="46.1" width="7" height="1" fill="#8c8c8c" opacity="0.55"/><rect x="12.5" y="46.1" width="4.8" height="1" fill="#8c8c8c" opacity="0.55"/><rect x="22.6" y="46.1" width="9.5" height="1" fill="#8c8c8c" opacity="0.55"/><rect x="35.5" y="46.1" width="10" height="1" fill="#8c8c8c" opacity="0.55"/><rect x="48" y="46.1" width="8" height="1" fill="#8c8c8c" opacity="0.55"/><rect x="61" y="46.1" width="6.5" height="1" fill="#8c8c8c" opacity="0.55"/><rect x="71.8" y="46.1" width="6" height="1" fill="#8c8c8c" opacity="0.55"/><rect x="2" y="48.6" width="76" height="0.6" fill="#e0e6f2"/><rect x="2" y="52.1" width="76" height="0.6" fill="#e0e6f2"/><rect x="2" y="55.6" width="76" height="0.6" fill="#e0e6f2"/><rect x="2" y="59.1" width="76" height="0.6" fill="#e0e6f2"/><rect x="2" y="62.6" width="76" height="0.6" fill="#e0e6f2"/><rect x="2" y="66.1" width="76" height="0.6" fill="#e0e6f2"/><rect x="2" y="69.6" width="76" height="0.6" fill="#e0e6f2"/><rect x="2" y="73.1" width="76" height="0.6" fill="#e0e6f2"/><rect x="2" y="76.6" width="76" height="0.6" fill="#e0e6f2"/><rect x="2" y="80.1" width="76" height="0.6" fill="#e0e6f2"/><rect x="2" y="83.6" width="76" height="0.6" fill="#e0e6f2"/><rect x="2" y="87.1" width="76" height="0.6" fill="#e0e6f2"/><rect x="2.2" y="48" width="5.55" height="0.9" fill="#8c8c8c" opacity="0.47"/><rect x="12.5" y="48" width="4.26" height="0.9" fill="#8c8c8c" opacity="0.53"/><rect x="22.6" y="48" width="8.14" height="0.9" fill="#8c8c8c" opacity="0.53"/><rect x="35.5" y="48" width="4.66" height="0.9" fill="#8c8c8c" opacity="0.39"/><rect x="48.25" y="48" width="7.75" height="0.9" fill="#8c8c8c" opacity="0.44"/><rect x="61.35" y="48" width="6.15" height="0.9" fill="#8c8c8c" opacity="0.28"/><rect x="73.55" y="48" width="4.25" height="0.9" fill="#8c8c8c" opacity="0.32"/><rect x="2.2" y="49.75" width="5.24" height="0.9" fill="#8c8c8c" opacity="0.42"/><rect x="12.5" y="49.75" width="2.19" height="0.9" fill="#8c8c8c" opacity="0.32"/><rect x="22.6" y="49.75" width="5.74" height="0.9" fill="#8c8c8c" opacity="0.52"/><rect x="35.5" y="49.75" width="8.71" height="0.9" fill="#8c8c8c" opacity="0.3"/><rect x="48.89" y="49.75" width="7.11" height="0.9" fill="#8c8c8c" opacity="0.29"/><rect x="62.37" y="49.75" width="5.13" height="0.9" fill="#8c8c8c" opacity="0.29"/><rect x="75.09" y="49.75" width="2.71" height="0.9" fill="#8c8c8c" opacity="0.51"/><rect x="2.2" y="51.5" width="3.96" height="0.9" fill="#8c8c8c" opacity="0.31"/><rect x="12.5" y="51.5" width="4.75" height="0.9" fill="#8c8c8c" opacity="0.51"/><rect x="22.6" y="51.5" width="5.79" height="0.9" fill="#8c8c8c" opacity="0.54"/><rect x="35.5" y="51.5" width="7.47" height="0.9" fill="#8c8c8c" opacity="0.45"/><rect x="51.5" y="51.5" width="4.5" height="0.9" fill="#8c8c8c" opacity="0.53"/><rect x="62.11" y="51.5" width="5.39" height="0.9" fill="#8c8c8c" opacity="0.54"/><rect x="72.15" y="51.5" width="5.65" height="0.9" fill="#8c8c8c" opacity="0.34"/><rect x="2.2" y="53.25" width="4.54" height="0.9" fill="#8c8c8c" opacity="0.3"/><rect x="12.5" y="53.25" width="2.54" height="0.9" fill="#8c8c8c" opacity="0.27"/><rect x="22.6" y="53.25" width="5.85" height="0.9" fill="#8c8c8c" opacity="0.43"/><rect x="35.5" y="53.25" width="4.52" height="0.9" fill="#8c8c8c" opacity="0.45"/><rect x="50.91" y="53.25" width="5.09" height="0.9" fill="#8c8c8c" opacity="0.34"/><rect x="61.65" y="53.25" width="5.85" height="0.9" fill="#8c8c8c" opacity="0.39"/><rect x="74.06" y="53.25" width="3.74" height="0.9" fill="#8c8c8c" opacity="0.39"/><rect x="2.2" y="55" width="5.86" height="0.9" fill="#8c8c8c" opacity="0.27"/><rect x="12.5" y="55" width="4.73" height="0.9" fill="#8c8c8c" opacity="0.26"/><rect x="22.6" y="55" width="8.19" height="0.9" fill="#8c8c8c" opacity="0.5"/><rect x="35.5" y="55" width="4.6" height="0.9" fill="#8c8c8c" opacity="0.49"/><rect x="50.79" y="55" width="5.21" height="0.9" fill="#8c8c8c" opacity="0.42"/><rect x="64.54" y="55" width="2.96" height="0.9" fill="#8c8c8c" opacity="0.26"/><rect x="74.5" y="55" width="3.3" height="0.9" fill="#8c8c8c" opacity="0.54"/><rect x="2.2" y="56.75" width="3.91" height="0.9" fill="#8c8c8c" opacity="0.48"/><rect x="12.5" y="56.75" width="4.61" height="0.9" fill="#8c8c8c" opacity="0.53"/><rect x="22.6" y="56.75" width="6.07" height="0.9" fill="#8c8c8c" opacity="0.36"/><rect x="35.5" y="56.75" width="7.39" height="0.9" fill="#8c8c8c" opacity="0.48"/><rect x="51.92" y="56.75" width="4.08" height="0.9" fill="#8c8c8c" opacity="0.47"/><rect x="61.72" y="56.75" width="5.78" height="0.9" fill="#8c8c8c" opacity="0.51"/><rect x="74.98" y="56.75" width="2.82" height="0.9" fill="#8c8c8c" opacity="0.53"/><rect x="2.2" y="58.5" width="3.5" height="0.9" fill="#8c8c8c" opacity="0.35"/><rect x="12.5" y="58.5" width="3.77" height="0.9" fill="#8c8c8c" opacity="0.53"/><rect x="22.6" y="58.5" width="6.05" height="0.9" fill="#8c8c8c" opacity="0.53"/><rect x="35.5" y="58.5" width="7.5" height="0.9" fill="#8c8c8c" opacity="0.34"/><rect x="51.01" y="58.5" width="4.99" height="0.9" fill="#8c8c8c" opacity="0.3"/><rect x="64.3" y="58.5" width="3.2" height="0.9" fill="#8c8c8c" opacity="0.29"/><rect x="72.83" y="58.5" width="4.97" height="0.9" fill="#8c8c8c" opacity="0.55"/><rect x="2.2" y="60.25" width="3.77" height="0.9" fill="#8c8c8c" opacity="0.26"/><rect x="12.5" y="60.25" width="4.76" height="0.9" fill="#8c8c8c" opacity="0.41"/><rect x="22.6" y="60.25" width="6.4" height="0.9" fill="#8c8c8c" opacity="0.32"/><rect x="35.5" y="60.25" width="7.77" height="0.9" fill="#8c8c8c" opacity="0.5"/><rect x="50.4" y="60.25" width="5.6" height="0.9" fill="#8c8c8c" opacity="0.38"/><rect x="64.38" y="60.25" width="3.12" height="0.9" fill="#8c8c8c" opacity="0.52"/><rect x="74.99" y="60.25" width="2.81" height="0.9" fill="#8c8c8c" opacity="0.4"/><rect x="2.2" y="62" width="6.38" height="0.9" fill="#8c8c8c" opacity="0.29"/><rect x="12.5" y="62" width="4.09" height="0.9" fill="#8c8c8c" opacity="0.53"/><rect x="22.6" y="62" width="7.57" height="0.9" fill="#8c8c8c" opacity="0.49"/><rect x="35.5" y="62" width="5.09" height="0.9" fill="#8c8c8c" opacity="0.38"/><rect x="51.74" y="62" width="4.26" height="0.9" fill="#8c8c8c" opacity="0.5"/><rect x="63.52" y="62" width="3.98" height="0.9" fill="#8c8c8c" opacity="0.39"/><rect x="71.8" y="62" width="6" height="0.9" fill="#8c8c8c" opacity="0.51"/><rect x="2.2" y="63.75" width="6.91" height="0.9" fill="#8c8c8c" opacity="0.39"/><rect x="12.5" y="63.75" width="3.45" height="0.9" fill="#8c8c8c" opacity="0.47"/><rect x="22.6" y="63.75" width="6.78" height="0.9" fill="#8c8c8c" opacity="0.34"/><rect x="35.5" y="63.75" width="6.72" height="0.9" fill="#8c8c8c" opacity="0.29"/><rect x="50.74" y="63.75" width="5.26" height="0.9" fill="#8c8c8c" opacity="0.55"/><rect x="61.14" y="63.75" width="6.36" height="0.9" fill="#8c8c8c" opacity="0.44"/><rect x="73.45" y="63.75" width="4.35" height="0.9" fill="#8c8c8c" opacity="0.35"/><rect x="2.2" y="65.5" width="3.49" height="0.9" fill="#8c8c8c" opacity="0.33"/><rect x="12.5" y="65.5" width="4.22" height="0.9" fill="#8c8c8c" opacity="0.51"/><rect x="22.6" y="65.5" width="6.16" height="0.9" fill="#8c8c8c" opacity="0.49"/><rect x="35.5" y="65.5" width="8.76" height="0.9" fill="#8c8c8c" opacity="0.46"/><rect x="49.48" y="65.5" width="6.52" height="0.9" fill="#8c8c8c" opacity="0.48"/><rect x="63.28" y="65.5" width="4.22" height="0.9" fill="#8c8c8c" opacity="0.46"/><rect x="74.17" y="65.5" width="3.63" height="0.9" fill="#8c8c8c" opacity="0.4"/><rect x="2.2" y="67.25" width="6.11" height="0.9" fill="#8c8c8c" opacity="0.46"/><rect x="12.5" y="67.25" width="2.94" height="0.9" fill="#8c8c8c" opacity="0.53"/><rect x="22.6" y="67.25" width="7.67" height="0.9" fill="#8c8c8c" opacity="0.42"/><rect x="35.5" y="67.25" width="4.56" height="0.9" fill="#8c8c8c" opacity="0.41"/><rect x="51.3" y="67.25" width="4.7" height="0.9" fill="#8c8c8c" opacity="0.45"/><rect x="62.92" y="67.25" width="4.58" height="0.9" fill="#8c8c8c" opacity="0.5"/><rect x="72.96" y="67.25" width="4.84" height="0.9" fill="#8c8c8c" opacity="0.49"/><rect x="2.2" y="69" width="4.49" height="0.9" fill="#8c8c8c" opacity="0.44"/><rect x="12.5" y="69" width="4.11" height="0.9" fill="#8c8c8c" opacity="0.5"/><rect x="22.6" y="69" width="6.1" height="0.9" fill="#8c8c8c" opacity="0.5"/><rect x="35.5" y="69" width="9.28" height="0.9" fill="#8c8c8c" opacity="0.46"/><rect x="48.11" y="69" width="7.89" height="0.9" fill="#8c8c8c" opacity="0.54"/><rect x="62.72" y="69" width="4.78" height="0.9" fill="#8c8c8c" opacity="0.41"/><rect x="74.55" y="69" width="3.25" height="0.9" fill="#8c8c8c" opacity="0.5"/><rect x="2.2" y="70.75" width="6.76" height="0.9" fill="#8c8c8c" opacity="0.39"/><rect x="12.5" y="70.75" width="3.99" height="0.9" fill="#8c8c8c" opacity="0.47"/><rect x="22.6" y="70.75" width="8.09" height="0.9" fill="#8c8c8c" opacity="0.3"/><rect x="35.5" y="70.75" width="8.79" height="0.9" fill="#8c8c8c" opacity="0.42"/><rect x="49.47" y="70.75" width="6.53" height="0.9" fill="#8c8c8c" opacity="0.38"/><rect x="62.35" y="70.75" width="5.15" height="0.9" fill="#8c8c8c" opacity="0.48"/><rect x="73" y="70.75" width="4.8" height="0.9" fill="#8c8c8c" opacity="0.47"/><rect x="2.2" y="72.5" width="3.26" height="0.9" fill="#8c8c8c" opacity="0.3"/><rect x="12.5" y="72.5" width="3.32" height="0.9" fill="#8c8c8c" opacity="0.45"/><rect x="22.6" y="72.5" width="5.42" height="0.9" fill="#8c8c8c" opacity="0.46"/><rect x="35.5" y="72.5" width="7.97" height="0.9" fill="#8c8c8c" opacity="0.26"/><rect x="50.33" y="72.5" width="5.67" height="0.9" fill="#8c8c8c" opacity="0.32"/><rect x="64.38" y="72.5" width="3.12" height="0.9" fill="#8c8c8c" opacity="0.29"/><rect x="74.05" y="72.5" width="3.75" height="0.9" fill="#8c8c8c" opacity="0.3"/><rect x="2.2" y="74.25" width="3.89" height="0.9" fill="#8c8c8c" opacity="0.26"/><rect x="12.5" y="74.25" width="3.39" height="0.9" fill="#8c8c8c" opacity="0.36"/><rect x="22.6" y="74.25" width="7.47" height="0.9" fill="#8c8c8c" opacity="0.43"/><rect x="35.5" y="74.25" width="5.81" height="0.9" fill="#8c8c8c" opacity="0.52"/><rect x="52.4" y="74.25" width="3.6" height="0.9" fill="#8c8c8c" opacity="0.37"/><rect x="63.58" y="74.25" width="3.92" height="0.9" fill="#8c8c8c" opacity="0.37"/><rect x="74.72" y="74.25" width="3.08" height="0.9" fill="#8c8c8c" opacity="0.5"/><rect x="2.2" y="76" width="4.59" height="0.9" fill="#8c8c8c" opacity="0.26"/><rect x="12.5" y="76" width="3.78" height="0.9" fill="#8c8c8c" opacity="0.28"/><rect x="22.6" y="76" width="7.12" height="0.9" fill="#8c8c8c" opacity="0.35"/><rect x="35.5" y="76" width="7.69" height="0.9" fill="#8c8c8c" opacity="0.54"/><rect x="48.8" y="76" width="7.2" height="0.9" fill="#8c8c8c" opacity="0.38"/><rect x="61.67" y="76" width="5.83" height="0.9" fill="#8c8c8c" opacity="0.44"/><rect x="73.88" y="76" width="3.92" height="0.9" fill="#8c8c8c" opacity="0.29"/><rect x="2.2" y="77.75" width="5.44" height="0.9" fill="#8c8c8c" opacity="0.42"/><rect x="12.5" y="77.75" width="4.69" height="0.9" fill="#8c8c8c" opacity="0.54"/><rect x="22.6" y="77.75" width="7.45" height="0.9" fill="#8c8c8c" opacity="0.36"/><rect x="35.5" y="77.75" width="9.41" height="0.9" fill="#8c8c8c" opacity="0.25"/><rect x="51.93" y="77.75" width="4.07" height="0.9" fill="#8c8c8c" opacity="0.42"/><rect x="62.38" y="77.75" width="5.12" height="0.9" fill="#8c8c8c" opacity="0.29"/><rect x="73.02" y="77.75" width="4.78" height="0.9" fill="#8c8c8c" opacity="0.52"/><rect x="2.2" y="79.5" width="4.6" height="0.9" fill="#8c8c8c" opacity="0.38"/><rect x="12.5" y="79.5" width="2.76" height="0.9" fill="#8c8c8c" opacity="0.34"/><rect x="22.6" y="79.5" width="9.36" height="0.9" fill="#8c8c8c" opacity="0.36"/><rect x="35.5" y="79.5" width="9.79" height="0.9" fill="#8c8c8c" opacity="0.52"/><rect x="49.78" y="79.5" width="6.22" height="0.9" fill="#8c8c8c" opacity="0.33"/><rect x="61.07" y="79.5" width="6.43" height="0.9" fill="#8c8c8c" opacity="0.4"/><rect x="73.73" y="79.5" width="4.07" height="0.9" fill="#8c8c8c" opacity="0.35"/><rect x="2.2" y="81.25" width="6.94" height="0.9" fill="#8c8c8c" opacity="0.4"/><rect x="12.5" y="81.25" width="2.92" height="0.9" fill="#8c8c8c" opacity="0.39"/><rect x="22.6" y="81.25" width="4.91" height="0.9" fill="#8c8c8c" opacity="0.44"/><rect x="35.5" y="81.25" width="6.94" height="0.9" fill="#8c8c8c" opacity="0.34"/><rect x="48.96" y="81.25" width="7.04" height="0.9" fill="#8c8c8c" opacity="0.5"/><rect x="64.53" y="81.25" width="2.97" height="0.9" fill="#8c8c8c" opacity="0.41"/><rect x="74.2" y="81.25" width="3.6" height="0.9" fill="#8c8c8c" opacity="0.53"/><rect x="2.2" y="83" width="6.16" height="0.9" fill="#8c8c8c" opacity="0.32"/><rect x="12.5" y="83" width="2.87" height="0.9" fill="#8c8c8c" opacity="0.3"/><rect x="22.6" y="83" width="9.44" height="0.9" fill="#8c8c8c" opacity="0.34"/><rect x="35.5" y="83" width="7.84" height="0.9" fill="#8c8c8c" opacity="0.39"/><rect x="49.56" y="83" width="6.44" height="0.9" fill="#8c8c8c" opacity="0.43"/><rect x="61.92" y="83" width="5.58" height="0.9" fill="#8c8c8c" opacity="0.29"/><rect x="72.59" y="83" width="5.21" height="0.9" fill="#8c8c8c" opacity="0.34"/><rect x="2.2" y="84.75" width="5.2" height="0.9" fill="#8c8c8c" opacity="0.35"/><rect x="12.5" y="84.75" width="2.94" height="0.9" fill="#8c8c8c" opacity="0.41"/><rect x="22.6" y="84.75" width="6.7" height="0.9" fill="#8c8c8c" opacity="0.36"/><rect x="35.5" y="84.75" width="8.6" height="0.9" fill="#8c8c8c" opacity="0.43"/><rect x="52.24" y="84.75" width="3.76" height="0.9" fill="#8c8c8c" opacity="0.33"/><rect x="62.95" y="84.75" width="4.55" height="0.9" fill="#8c8c8c" opacity="0.52"/><rect x="72.17" y="84.75" width="5.63" height="0.9" fill="#8c8c8c" opacity="0.41"/><rect x="2.2" y="86.5" width="3.21" height="0.9" fill="#8c8c8c" opacity="0.48"/><rect x="12.5" y="86.5" width="3.29" height="0.9" fill="#8c8c8c" opacity="0.42"/><rect x="22.6" y="86.5" width="7.98" height="0.9" fill="#8c8c8c" opacity="0.44"/><rect x="35.5" y="86.5" width="7.15" height="0.9" fill="#8c8c8c" opacity="0.52"/><rect x="50.7" y="86.5" width="5.3" height="0.9" fill="#8c8c8c" opacity="0.37"/><rect x="61.53" y="86.5" width="5.97" height="0.9" fill="#8c8c8c" opacity="0.31"/><rect x="74.12" y="86.5" width="3.68" height="0.9" fill="#8c8c8c" opacity="0.5"/></svg></div><div class="lbl" style="left:376px;top:370px">LogiReportDemo</div><div class="th" style="left:526px;top:275px"><svg width="80" height="90" viewBox="0 0 80 90" shape-rendering="auto"><rect x="1" y="1" width="78" height="88" fill="#ffffff"/><text x="2.2" y="4.5" font-size="2.6" font-family="Liberation Sans" fill="#5a5a5a" opacity="0.85">Report Title</text><rect x="72.3" y="3.3" width="5.5" height="1.2" fill="#8c8c8c" opacity="0.45"/><rect x="4.4" y="7.6499999999999995" width="5.2" height="1.1" fill="#8c8c8c" opacity="0.35"/><rect x="4.4" y="12.25" width="5.2" height="1.1" fill="#8c8c8c" opacity="0.35"/><rect x="4.4" y="17.15" width="5.2" height="1.1" fill="#8c8c8c" opacity="0.35"/><rect x="4.4" y="21.95" width="5.2" height="1.1" fill="#8c8c8c" opacity="0.35"/><rect x="4.4" y="26.849999999999998" width="5.2" height="1.1" fill="#8c8c8c" opacity="0.35"/><rect x="4.4" y="31.749999999999996" width="5.2" height="1.1" fill="#8c8c8c" opacity="0.35"/><rect x="8.4" y="36.650000000000006" width="1.2" height="1.1" fill="#8c8c8c" opacity="0.45"/><rect x="13.5" y="30.1" width="5.5" height="6.9" fill="#e8471c"/><rect x="20.9" y="18.1" width="5.3" height="18.9" fill="#f59a0a"/><rect x="28" y="33.8" width="5.6" height="3.2" fill="#fbe02a"/><rect x="35" y="18.2" width="5.7" height="18.8" fill="#1a9e3c"/><rect x="48" y="29" width="5.2" height="8" fill="#e8471c"/><rect x="55" y="25.1" width="5.3" height="11.9" fill="#f59a0a"/><rect x="62.2" y="32.8" width="5.5" height="4.2" fill="#fbe02a"/><rect x="69.4" y="13" width="5.6" height="24" fill="#1a9e3c"/><rect x="26" y="38.1" width="2" height="0.9" fill="#8c8c8c" opacity="0.5"/><rect x="60.3" y="38.1" width="2.2" height="0.9" fill="#8c8c8c" opacity="0.5"/><rect x="29" y="42.0" width="1.8" height="1.4" fill="#e8471c"/><rect x="31.2" y="42.3" width="2.4" height="0.9" fill="#8c8c8c" opacity="0.4"/><rect x="35.1" y="42.0" width="1.8" height="1.4" fill="#f59a0a"/><rect x="37.300000000000004" y="42.3" width="2.4" height="0.9" fill="#8c8c8c" opacity="0.4"/><rect x="41" y="42.0" width="1.8" height="1.4" fill="#fbe02a"/><rect x="43.2" y="42.3" width="2.4" height="0.9" fill="#8c8c8c" opacity="0.4"/><rect x="47" y="42.0" width="1.8" height="1.4" fill="#1a9e3c"/><rect x="49.2" y="42.3" width="2.4" height="0.9" fill="#8c8c8c" opacity="0.4"/><rect x="2" y="45.8" width="76" height="1.6" fill="#1a1a1a"/><rect x="2.2" y="46.1" width="7" height="1" fill="#ffffff" opacity="0.3"/><rect x="12.5" y="46.1" width="4.8" height="1" fill="#ffffff" opacity="0.3"/><rect x="22.6" y="46.1" width="9.5" height="1" fill="#ffffff" opacity="0.3"/><rect x="35.5" y="46.1" width="10" height="1" fill="#ffffff" opacity="0.3"/><rect x="48" y="46.1" width="8" height="1" fill="#ffffff" opacity="0.3"/><rect x="61" y="46.1" width="6.5" height="1" fill="#ffffff" opacity="0.3"/><rect x="71.8" y="46.1" width="6" height="1" fill="#ffffff" opacity="0.3"/><rect x="2" y="48.6" width="76" height="0.6" fill="#ececec"/><rect x="2" y="52.1" width="76" height="0.6" fill="#ececec"/><rect x="2" y="55.6" width="76" height="0.6" fill="#ececec"/><rect x="2" y="59.1" width="76" height="0.6" fill="#ececec"/><rect x="2" y="62.6" width="76" height="0.6" fill="#ececec"/><rect x="2" y="66.1" width="76" height="0.6" fill="#ececec"/><rect x="2" y="69.6" width="76" height="0.6" fill="#ececec"/><rect x="2" y="73.1" width="76" height="0.6" fill="#ececec"/><rect x="2" y="76.6" width="76" height="0.6" fill="#ececec"/><rect x="2" y="80.1" width="76" height="0.6" fill="#ececec"/><rect x="2" y="83.6" width="76" height="0.6" fill="#ececec"/><rect x="2" y="87.1" width="76" height="0.6" fill="#ececec"/><rect x="2.2" y="48" width="5.55" height="0.9" fill="#8c8c8c" opacity="0.47"/><rect x="12.5" y="48" width="4.26" height="0.9" fill="#8c8c8c" opacity="0.53"/><rect x="22.6" y="48" width="8.14" height="0.9" fill="#8c8c8c" opacity="0.53"/><rect x="35.5" y="48" width="4.66" height="0.9" fill="#8c8c8c" opacity="0.39"/><rect x="48.25" y="48" width="7.75" height="0.9" fill="#8c8c8c" opacity="0.44"/><rect x="61.35" y="48" width="6.15" height="0.9" fill="#8c8c8c" opacity="0.28"/><rect x="73.55" y="48" width="4.25" height="0.9" fill="#8c8c8c" opacity="0.32"/><rect x="2.2" y="49.75" width="5.24" height="0.9" fill="#8c8c8c" opacity="0.42"/><rect x="12.5" y="49.75" width="2.19" height="0.9" fill="#8c8c8c" opacity="0.32"/><rect x="22.6" y="49.75" width="5.74" height="0.9" fill="#8c8c8c" opacity="0.52"/><rect x="35.5" y="49.75" width="8.71" height="0.9" fill="#8c8c8c" opacity="0.3"/><rect x="48.89" y="49.75" width="7.11" height="0.9" fill="#8c8c8c" opacity="0.29"/><rect x="62.37" y="49.75" width="5.13" height="0.9" fill="#8c8c8c" opacity="0.29"/><rect x="75.09" y="49.75" width="2.71" height="0.9" fill="#8c8c8c" opacity="0.51"/><rect x="2.2" y="51.5" width="3.96" height="0.9" fill="#8c8c8c" opacity="0.31"/><rect x="12.5" y="51.5" width="4.75" height="0.9" fill="#8c8c8c" opacity="0.51"/><rect x="22.6" y="51.5" width="5.79" height="0.9" fill="#8c8c8c" opacity="0.54"/><rect x="35.5" y="51.5" width="7.47" height="0.9" fill="#8c8c8c" opacity="0.45"/><rect x="51.5" y="51.5" width="4.5" height="0.9" fill="#8c8c8c" opacity="0.53"/><rect x="62.11" y="51.5" width="5.39" height="0.9" fill="#8c8c8c" opacity="0.54"/><rect x="72.15" y="51.5" width="5.65" height="0.9" fill="#8c8c8c" opacity="0.34"/><rect x="2.2" y="53.25" width="4.54" height="0.9" fill="#8c8c8c" opacity="0.3"/><rect x="12.5" y="53.25" width="2.54" height="0.9" fill="#8c8c8c" opacity="0.27"/><rect x="22.6" y="53.25" width="5.85" height="0.9" fill="#8c8c8c" opacity="0.43"/><rect x="35.5" y="53.25" width="4.52" height="0.9" fill="#8c8c8c" opacity="0.45"/><rect x="50.91" y="53.25" width="5.09" height="0.9" fill="#8c8c8c" opacity="0.34"/><rect x="61.65" y="53.25" width="5.85" height="0.9" fill="#8c8c8c" opacity="0.39"/><rect x="74.06" y="53.25" width="3.74" height="0.9" fill="#8c8c8c" opacity="0.39"/><rect x="2.2" y="55" width="5.86" height="0.9" fill="#8c8c8c" opacity="0.27"/><rect x="12.5" y="55" width="4.73" height="0.9" fill="#8c8c8c" opacity="0.26"/><rect x="22.6" y="55" width="8.19" height="0.9" fill="#8c8c8c" opacity="0.5"/><rect x="35.5" y="55" width="4.6" height="0.9" fill="#8c8c8c" opacity="0.49"/><rect x="50.79" y="55" width="5.21" height="0.9" fill="#8c8c8c" opacity="0.42"/><rect x="64.54" y="55" width="2.96" height="0.9" fill="#8c8c8c" opacity="0.26"/><rect x="74.5" y="55" width="3.3" height="0.9" fill="#8c8c8c" opacity="0.54"/><rect x="2.2" y="56.75" width="3.91" height="0.9" fill="#8c8c8c" opacity="0.48"/><rect x="12.5" y="56.75" width="4.61" height="0.9" fill="#8c8c8c" opacity="0.53"/><rect x="22.6" y="56.75" width="6.07" height="0.9" fill="#8c8c8c" opacity="0.36"/><rect x="35.5" y="56.75" width="7.39" height="0.9" fill="#8c8c8c" opacity="0.48"/><rect x="51.92" y="56.75" width="4.08" height="0.9" fill="#8c8c8c" opacity="0.47"/><rect x="61.72" y="56.75" width="5.78" height="0.9" fill="#8c8c8c" opacity="0.51"/><rect x="74.98" y="56.75" width="2.82" height="0.9" fill="#8c8c8c" opacity="0.53"/><rect x="2.2" y="58.5" width="3.5" height="0.9" fill="#8c8c8c" opacity="0.35"/><rect x="12.5" y="58.5" width="3.77" height="0.9" fill="#8c8c8c" opacity="0.53"/><rect x="22.6" y="58.5" width="6.05" height="0.9" fill="#8c8c8c" opacity="0.53"/><rect x="35.5" y="58.5" width="7.5" height="0.9" fill="#8c8c8c" opacity="0.34"/><rect x="51.01" y="58.5" width="4.99" height="0.9" fill="#8c8c8c" opacity="0.3"/><rect x="64.3" y="58.5" width="3.2" height="0.9" fill="#8c8c8c" opacity="0.29"/><rect x="72.83" y="58.5" width="4.97" height="0.9" fill="#8c8c8c" opacity="0.55"/><rect x="2.2" y="60.25" width="3.77" height="0.9" fill="#8c8c8c" opacity="0.26"/><rect x="12.5" y="60.25" width="4.76" height="0.9" fill="#8c8c8c" opacity="0.41"/><rect x="22.6" y="60.25" width="6.4" height="0.9" fill="#8c8c8c" opacity="0.32"/><rect x="35.5" y="60.25" width="7.77" height="0.9" fill="#8c8c8c" opacity="0.5"/><rect x="50.4" y="60.25" width="5.6" height="0.9" fill="#8c8c8c" opacity="0.38"/><rect x="64.38" y="60.25" width="3.12" height="0.9" fill="#8c8c8c" opacity="0.52"/><rect x="74.99" y="60.25" width="2.81" height="0.9" fill="#8c8c8c" opacity="0.4"/><rect x="2.2" y="62" width="6.38" height="0.9" fill="#8c8c8c" opacity="0.29"/><rect x="12.5" y="62" width="4.09" height="0.9" fill="#8c8c8c" opacity="0.53"/><rect x="22.6" y="62" width="7.57" height="0.9" fill="#8c8c8c" opacity="0.49"/><rect x="35.5" y="62" width="5.09" height="0.9" fill="#8c8c8c" opacity="0.38"/><rect x="51.74" y="62" width="4.26" height="0.9" fill="#8c8c8c" opacity="0.5"/><rect x="63.52" y="62" width="3.98" height="0.9" fill="#8c8c8c" opacity="0.39"/><rect x="71.8" y="62" width="6" height="0.9" fill="#8c8c8c" opacity="0.51"/><rect x="2.2" y="63.75" width="6.91" height="0.9" fill="#8c8c8c" opacity="0.39"/><rect x="12.5" y="63.75" width="3.45" height="0.9" fill="#8c8c8c" opacity="0.47"/><rect x="22.6" y="63.75" width="6.78" height="0.9" fill="#8c8c8c" opacity="0.34"/><rect x="35.5" y="63.75" width="6.72" height="0.9" fill="#8c8c8c" opacity="0.29"/><rect x="50.74" y="63.75" width="5.26" height="0.9" fill="#8c8c8c" opacity="0.55"/><rect x="61.14" y="63.75" width="6.36" height="0.9" fill="#8c8c8c" opacity="0.44"/><rect x="73.45" y="63.75" width="4.35" height="0.9" fill="#8c8c8c" opacity="0.35"/><rect x="2.2" y="65.5" width="3.49" height="0.9" fill="#8c8c8c" opacity="0.33"/><rect x="12.5" y="65.5" width="4.22" height="0.9" fill="#8c8c8c" opacity="0.51"/><rect x="22.6" y="65.5" width="6.16" height="0.9" fill="#8c8c8c" opacity="0.49"/><rect x="35.5" y="65.5" width="8.76" height="0.9" fill="#8c8c8c" opacity="0.46"/><rect x="49.48" y="65.5" width="6.52" height="0.9" fill="#8c8c8c" opacity="0.48"/><rect x="63.28" y="65.5" width="4.22" height="0.9" fill="#8c8c8c" opacity="0.46"/><rect x="74.17" y="65.5" width="3.63" height="0.9" fill="#8c8c8c" opacity="0.4"/><rect x="2.2" y="67.25" width="6.11" height="0.9" fill="#8c8c8c" opacity="0.46"/><rect x="12.5" y="67.25" width="2.94" height="0.9" fill="#8c8c8c" opacity="0.53"/><rect x="22.6" y="67.25" width="7.67" height="0.9" fill="#8c8c8c" opacity="0.42"/><rect x="35.5" y="67.25" width="4.56" height="0.9" fill="#8c8c8c" opacity="0.41"/><rect x="51.3" y="67.25" width="4.7" height="0.9" fill="#8c8c8c" opacity="0.45"/><rect x="62.92" y="67.25" width="4.58" height="0.9" fill="#8c8c8c" opacity="0.5"/><rect x="72.96" y="67.25" width="4.84" height="0.9" fill="#8c8c8c" opacity="0.49"/><rect x="2.2" y="69" width="4.49" height="0.9" fill="#8c8c8c" opacity="0.44"/><rect x="12.5" y="69" width="4.11" height="0.9" fill="#8c8c8c" opacity="0.5"/><rect x="22.6" y="69" width="6.1" height="0.9" fill="#8c8c8c" opacity="0.5"/><rect x="35.5" y="69" width="9.28" height="0.9" fill="#8c8c8c" opacity="0.46"/><rect x="48.11" y="69" width="7.89" height="0.9" fill="#8c8c8c" opacity="0.54"/><rect x="62.72" y="69" width="4.78" height="0.9" fill="#8c8c8c" opacity="0.41"/><rect x="74.55" y="69" width="3.25" height="0.9" fill="#8c8c8c" opacity="0.5"/><rect x="2.2" y="70.75" width="6.76" height="0.9" fill="#8c8c8c" opacity="0.39"/><rect x="12.5" y="70.75" width="3.99" height="0.9" fill="#8c8c8c" opacity="0.47"/><rect x="22.6" y="70.75" width="8.09" height="0.9" fill="#8c8c8c" opacity="0.3"/><rect x="35.5" y="70.75" width="8.79" height="0.9" fill="#8c8c8c" opacity="0.42"/><rect x="49.47" y="70.75" width="6.53" height="0.9" fill="#8c8c8c" opacity="0.38"/><rect x="62.35" y="70.75" width="5.15" height="0.9" fill="#8c8c8c" opacity="0.48"/><rect x="73" y="70.75" width="4.8" height="0.9" fill="#8c8c8c" opacity="0.47"/><rect x="2.2" y="72.5" width="3.26" height="0.9" fill="#8c8c8c" opacity="0.3"/><rect x="12.5" y="72.5" width="3.32" height="0.9" fill="#8c8c8c" opacity="0.45"/><rect x="22.6" y="72.5" width="5.42" height="0.9" fill="#8c8c8c" opacity="0.46"/><rect x="35.5" y="72.5" width="7.97" height="0.9" fill="#8c8c8c" opacity="0.26"/><rect x="50.33" y="72.5" width="5.67" height="0.9" fill="#8c8c8c" opacity="0.32"/><rect x="64.38" y="72.5" width="3.12" height="0.9" fill="#8c8c8c" opacity="0.29"/><rect x="74.05" y="72.5" width="3.75" height="0.9" fill="#8c8c8c" opacity="0.3"/><rect x="2.2" y="74.25" width="3.89" height="0.9" fill="#8c8c8c" opacity="0.26"/><rect x="12.5" y="74.25" width="3.39" height="0.9" fill="#8c8c8c" opacity="0.36"/><rect x="22.6" y="74.25" width="7.47" height="0.9" fill="#8c8c8c" opacity="0.43"/><rect x="35.5" y="74.25" width="5.81" height="0.9" fill="#8c8c8c" opacity="0.52"/><rect x="52.4" y="74.25" width="3.6" height="0.9" fill="#8c8c8c" opacity="0.37"/><rect x="63.58" y="74.25" width="3.92" height="0.9" fill="#8c8c8c" opacity="0.37"/><rect x="74.72" y="74.25" width="3.08" height="0.9" fill="#8c8c8c" opacity="0.5"/><rect x="2.2" y="76" width="4.59" height="0.9" fill="#8c8c8c" opacity="0.26"/><rect x="12.5" y="76" width="3.78" height="0.9" fill="#8c8c8c" opacity="0.28"/><rect x="22.6" y="76" width="7.12" height="0.9" fill="#8c8c8c" opacity="0.35"/><rect x="35.5" y="76" width="7.69" height="0.9" fill="#8c8c8c" opacity="0.54"/><rect x="48.8" y="76" width="7.2" height="0.9" fill="#8c8c8c" opacity="0.38"/><rect x="61.67" y="76" width="5.83" height="0.9" fill="#8c8c8c" opacity="0.44"/><rect x="73.88" y="76" width="3.92" height="0.9" fill="#8c8c8c" opacity="0.29"/><rect x="2.2" y="77.75" width="5.44" height="0.9" fill="#8c8c8c" opacity="0.42"/><rect x="12.5" y="77.75" width="4.69" height="0.9" fill="#8c8c8c" opacity="0.54"/><rect x="22.6" y="77.75" width="7.45" height="0.9" fill="#8c8c8c" opacity="0.36"/><rect x="35.5" y="77.75" width="9.41" height="0.9" fill="#8c8c8c" opacity="0.25"/><rect x="51.93" y="77.75" width="4.07" height="0.9" fill="#8c8c8c" opacity="0.42"/><rect x="62.38" y="77.75" width="5.12" height="0.9" fill="#8c8c8c" opacity="0.29"/><rect x="73.02" y="77.75" width="4.78" height="0.9" fill="#8c8c8c" opacity="0.52"/><rect x="2.2" y="79.5" width="4.6" height="0.9" fill="#8c8c8c" opacity="0.38"/><rect x="12.5" y="79.5" width="2.76" height="0.9" fill="#8c8c8c" opacity="0.34"/><rect x="22.6" y="79.5" width="9.36" height="0.9" fill="#8c8c8c" opacity="0.36"/><rect x="35.5" y="79.5" width="9.79" height="0.9" fill="#8c8c8c" opacity="0.52"/><rect x="49.78" y="79.5" width="6.22" height="0.9" fill="#8c8c8c" opacity="0.33"/><rect x="61.07" y="79.5" width="6.43" height="0.9" fill="#8c8c8c" opacity="0.4"/><rect x="73.73" y="79.5" width="4.07" height="0.9" fill="#8c8c8c" opacity="0.35"/><rect x="2.2" y="81.25" width="6.94" height="0.9" fill="#8c8c8c" opacity="0.4"/><rect x="12.5" y="81.25" width="2.92" height="0.9" fill="#8c8c8c" opacity="0.39"/><rect x="22.6" y="81.25" width="4.91" height="0.9" fill="#8c8c8c" opacity="0.44"/><rect x="35.5" y="81.25" width="6.94" height="0.9" fill="#8c8c8c" opacity="0.34"/><rect x="48.96" y="81.25" width="7.04" height="0.9" fill="#8c8c8c" opacity="0.5"/><rect x="64.53" y="81.25" width="2.97" height="0.9" fill="#8c8c8c" opacity="0.41"/><rect x="74.2" y="81.25" width="3.6" height="0.9" fill="#8c8c8c" opacity="0.53"/><rect x="2.2" y="83" width="6.16" height="0.9" fill="#8c8c8c" opacity="0.32"/><rect x="12.5" y="83" width="2.87" height="0.9" fill="#8c8c8c" opacity="0.3"/><rect x="22.6" y="83" width="9.44" height="0.9" fill="#8c8c8c" opacity="0.34"/><rect x="35.5" y="83" width="7.84" height="0.9" fill="#8c8c8c" opacity="0.39"/><rect x="49.56" y="83" width="6.44" height="0.9" fill="#8c8c8c" opacity="0.43"/><rect x="61.92" y="83" width="5.58" height="0.9" fill="#8c8c8c" opacity="0.29"/><rect x="72.59" y="83" width="5.21" height="0.9" fill="#8c8c8c" opacity="0.34"/><rect x="2.2" y="84.75" width="5.2" height="0.9" fill="#8c8c8c" opacity="0.35"/><rect x="12.5" y="84.75" width="2.94" height="0.9" fill="#8c8c8c" opacity="0.41"/><rect x="22.6" y="84.75" width="6.7" height="0.9" fill="#8c8c8c" opacity="0.36"/><rect x="35.5" y="84.75" width="8.6" height="0.9" fill="#8c8c8c" opacity="0.43"/><rect x="52.24" y="84.75" width="3.76" height="0.9" fill="#8c8c8c" opacity="0.33"/><rect x="62.95" y="84.75" width="4.55" height="0.9" fill="#8c8c8c" opacity="0.52"/><rect x="72.17" y="84.75" width="5.63" height="0.9" fill="#8c8c8c" opacity="0.41"/><rect x="2.2" y="86.5" width="3.21" height="0.9" fill="#8c8c8c" opacity="0.48"/><rect x="12.5" y="86.5" width="3.29" height="0.9" fill="#8c8c8c" opacity="0.42"/><rect x="22.6" y="86.5" width="7.98" height="0.9" fill="#8c8c8c" opacity="0.44"/><rect x="35.5" y="86.5" width="7.15" height="0.9" fill="#8c8c8c" opacity="0.52"/><rect x="50.7" y="86.5" width="5.3" height="0.9" fill="#8c8c8c" opacity="0.37"/><rect x="61.53" y="86.5" width="5.97" height="0.9" fill="#8c8c8c" opacity="0.31"/><rect x="74.12" y="86.5" width="3.68" height="0.9" fill="#8c8c8c" opacity="0.5"/></svg></div><div class="lbl" style="left:496px;top:370px">Simple</div>
<div class="btn" style="left:437px">Back</div>
<div class="btn dis" style="left:521px">Next</div>
<div class="btn" style="left:605px">Save</div>
<div class="btn" style="left:689px">Run</div>
</body></html>
